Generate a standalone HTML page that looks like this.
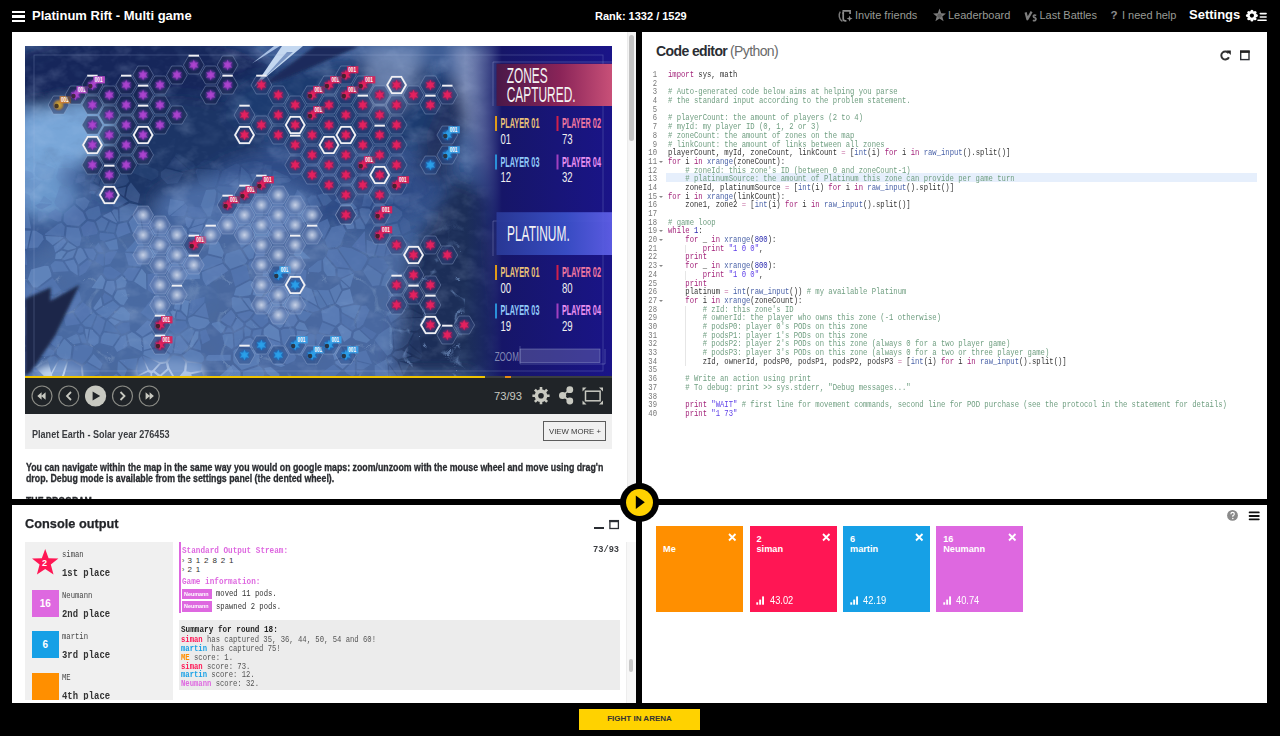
<!DOCTYPE html>
<html><head><meta charset="utf-8">
<style>
*{margin:0;padding:0;box-sizing:border-box}
html,body{width:1280px;height:736px;overflow:hidden;background:#000;font-family:"Liberation Sans",sans-serif}
.abs{position:absolute}
.sx{transform-origin:0 0}
.t{position:absolute;white-space:pre;line-height:1}
.panel{position:absolute;background:#fff;overflow:hidden}
.mono{font-family:"Liberation Mono",monospace}
#code .l{position:absolute;left:0;white-space:pre;height:9px;line-height:9px}
#code .n{position:absolute;white-space:pre;color:#999;text-align:right;width:12px}
.k{color:#a3237a}.c{color:#6f9e80}.s{color:#5d3fe8}.b{color:#4a62a8}.d{color:#2c2cb0}

#code{position:absolute;left:0;top:0;font-size:8.5px;color:#333}
#code .l{position:absolute;left:668.4px;white-space:pre;line-height:8.69px;height:8.69px;transform:scaleX(0.8494);transform-origin:0 0}
#code .n{position:absolute;left:636.7px;width:20px;text-align:right;white-space:pre;color:#777;line-height:8.69px;transform:scaleX(0.8494);transform-origin:100% 0}
#code .fa{position:absolute;left:659px;width:0;height:0;margin-top:3px;border-left:2px solid transparent;border-right:2px solid transparent;border-top:2.5px solid #888}
.o{color:#c0609a}

.m7{font-family:"Liberation Mono",monospace;font-size:8.5px;line-height:1;white-space:pre;position:absolute;transform:scaleX(0.8494);transform-origin:0 0}
.card{position:absolute;top:526.3px;width:87px;height:86.2px}
.card .x{position:absolute;left:72px;top:6.7px}
.card .nm{position:absolute;left:7px;top:7.6px;font-size:9.2px;font-weight:bold;color:#fff;line-height:10.1px;white-space:pre}
.card .sc{position:absolute;left:6.5px;top:68.5px;white-space:pre;font-size:10px;color:#fff}
</style></head>
<body>
<!-- TOP BAR -->
<div class="abs" style="left:12px;top:11px;width:13px;height:11px">
 <div class="abs" style="left:0;top:0;width:13px;height:2.4px;background:#fff"></div>
 <div class="abs" style="left:0;top:4.3px;width:13px;height:2.4px;background:#fff"></div>
 <div class="abs" style="left:0;top:8.6px;width:13px;height:2.4px;background:#fff"></div>
</div>
<div class="t" id="title" style="left:32px;top:9px;font-size:13px;font-weight:bold;color:#fff">Platinum Rift - Multi game</div>
<div class="t" id="rank" style="left:595px;top:11px;font-size:11px;font-weight:bold;color:#fff">Rank: 1332 / 1529</div>

<div id="nav">
 <svg class="abs" style="left:835px;top:4px" width="20" height="24" viewBox="0 0 20 24">
  <path d="M5.3 7.6 Q3.9 9.5 4.3 12.8 Q4.8 15.8 7.4 17.4" fill="none" stroke="#7a7a7a" stroke-width="1.4"/>
  <path d="M8.2 7.6 V9.9" fill="none" stroke="#8a8a8a" stroke-width="1.7"/>
  <path d="M7.5 6.9 H15.1 V10.1" fill="none" stroke="#8a8a8a" stroke-width="1.7"/>
  <path d="M8.2 8.5 V14.8 Q8.2 16.9 10.3 16.9 H11.4" fill="none" stroke="#8a8a8a" stroke-width="1.7"/>
  <path d="M14.6 11.6 L15.4 13.8 L17.6 14.6 L15.4 15.4 L14.6 17.6 L13.8 15.4 L11.6 14.6 L13.8 13.8 Z" fill="#8a8a8a"/>
 </svg>
 <div class="t" id="n1" style="left:855px;top:10px;font-size:11px;color:#989b95">Invite friends</div>
 <svg class="abs" style="left:932px;top:7.5px" width="15" height="14" viewBox="0 0 15 14"><path d="M7.5 0.6 L9.2 5.2 L14 5.4 L10.3 8.4 L11.6 13.3 L7.5 10.5 L3.4 13.3 L4.7 8.4 L1 5.4 L5.8 5.2 Z" fill="#7c7c7c"/><circle cx="7.5" cy="7.6" r="2.2" fill="#5e5e5e"/></svg>
 <div class="t" id="n2" style="left:948px;top:10px;font-size:11px;color:#989b95">Leaderboard</div>
 <svg class="abs" style="left:1024px;top:9px" width="16" height="14" viewBox="0 0 16 14"><path d="M1.6 3.4 L3.4 10.3 L7.6 2.6" fill="none" stroke="#7e7e7e" stroke-width="2.2" stroke-linejoin="round"/><path d="M12.2 6.4 Q10 5.4 9.3 7 Q9.3 8.3 11.3 8.9 Q12.6 9.6 11.4 11.2 Q10.3 12 8.9 11.2" fill="none" stroke="#7e7e7e" stroke-width="1.7"/></svg>
 <div class="t" id="n3" style="left:1039.5px;top:10px;font-size:11px;color:#989b95">Last Battles</div>
 <div class="t" style="left:1110.5px;top:10px;font-size:11.5px;font-weight:bold;color:#8c8c8c">?</div>
 <div class="t" id="n4" style="left:1122px;top:10px;font-size:11px;color:#989b95">I need help</div>
 <div class="t" id="n5" style="left:1189px;top:8px;font-size:13px;font-weight:bold;color:#fff">Settings</div>
 <svg class="abs" style="left:1245px;top:8px" width="23" height="14" viewBox="0 0 23 14">
  <g fill="#fff"><circle cx="6.9" cy="7.6" r="4.3"/><circle cx="11.30" cy="7.60" r="1.55"/><circle cx="10.01" cy="10.71" r="1.55"/><circle cx="6.90" cy="12.00" r="1.55"/><circle cx="3.79" cy="10.71" r="1.55"/><circle cx="2.50" cy="7.60" r="1.55"/><circle cx="3.79" cy="4.49" r="1.55"/><circle cx="6.90" cy="3.20" r="1.55"/><circle cx="10.01" cy="4.49" r="1.55"/></g>
  <circle cx="6.9" cy="7.6" r="2.1" fill="#000"/>
  <g stroke="#fff" stroke-width="1.6" stroke-linecap="round"><path d="M15.3 5.6 H21.1 M15.3 9 H21.1 M13 12.3 H21.1"/></g>
 </svg>
</div>

<!-- PANEL TL -->
<div class="panel" id="ptl" style="left:12px;top:32px;width:624px;height:467px"></div>

<!-- TL CONTENT -->
<div class="abs" style="left:626.5px;top:32px;width:9.5px;height:467px;background:#f4f4f4;border-left:1px solid #ebebeb"></div>
<div class="abs" style="left:629px;top:35px;width:4.6px;height:106px;border-radius:3px;background:#c3c3c3"></div>
<div class="abs" id="game" style="left:25px;top:46px;width:587px;height:330px;overflow:hidden;background:#2a4a80">
<!--GAME-->
<svg width="587" height="330" viewBox="0 0 587 330" style="position:absolute;left:0;top:0">
<defs>
<filter id="bl8" x="-50%" y="-50%" width="200%" height="200%"><feGaussianBlur stdDeviation="8"/></filter>
<filter id="bl4" x="-50%" y="-50%" width="200%" height="200%"><feGaussianBlur stdDeviation="4"/></filter>
<filter id="bl05" x="-5%" y="-5%" width="110%" height="110%"><feGaussianBlur stdDeviation="0.6"/></filter>
<filter id="bl2" x="-50%" y="-50%" width="200%" height="200%"><feGaussianBlur stdDeviation="1.5"/></filter>
<filter id="tex" x="0" y="0" width="100%" height="100%"><feTurbulence type="fractalNoise" baseFrequency="0.035 0.05" numOctaves="4" seed="7"/><feColorMatrix type="matrix" values="0 0 0 0 0.55  0 0 0 0 0.68  0 0 0 0 0.92  2.0 0 0 0 -1.0"/></filter>
<filter id="texd" x="0" y="0" width="100%" height="100%"><feTurbulence type="fractalNoise" baseFrequency="0.035 0.05" numOctaves="4" seed="7"/><feColorMatrix type="matrix" values="0 0 0 0 0.08  0 0 0 0 0.14  0 0 0 0 0.3  -2.4 0 0 0 1.05"/></filter>
<filter id="crk" x="0" y="0" width="100%" height="100%"><feTurbulence type="turbulence" baseFrequency="0.03" numOctaves="2" seed="3"/><feColorMatrix type="matrix" values="0 0 0 0 0.14  0 0 0 0 0.24  0 0 0 0 0.46  -11 0 0 0 1.1"/></filter>
<linearGradient id="crm" x1="0" x2="0" y1="0" y2="1"><stop offset="0.5" stop-color="#fff" stop-opacity="0"/><stop offset="0.72" stop-color="#fff" stop-opacity="1"/></linearGradient>
<mask id="crmask"><rect width="587" height="330" fill="url(#crm)"/></mask>
<radialGradient id="gp"><stop offset="0" stop-color="#a840c8"/><stop offset="0.5" stop-color="#6a30a0"/><stop offset="1" stop-color="#3a2a78" stop-opacity="0"/></radialGradient>
<radialGradient id="gr"><stop offset="0" stop-color="#d81c58"/><stop offset="0.5" stop-color="#90205a"/><stop offset="1" stop-color="#603070" stop-opacity="0"/></radialGradient>
<radialGradient id="gw"><stop offset="0" stop-color="#d4dcec" stop-opacity="0.9"/><stop offset="0.5" stop-color="#a8b8d6" stop-opacity="0.7"/><stop offset="1" stop-color="#8aa2cc" stop-opacity="0"/></radialGradient>
<radialGradient id="gb"><stop offset="0" stop-color="#2098e6"/><stop offset="0.5" stop-color="#1a70c0"/><stop offset="1" stop-color="#2a5aa0" stop-opacity="0"/></radialGradient>
<radialGradient id="gy"><stop offset="0" stop-color="#e0b030"/><stop offset="0.6" stop-color="#a08040"/><stop offset="1" stop-color="#505080" stop-opacity="0.3"/></radialGradient>
<linearGradient id="rp" x1="0" x2="1" y1="0" y2="0"><stop offset="0" stop-color="#1a2a6a" stop-opacity="0"/><stop offset="0.25" stop-color="#161668"/><stop offset="1" stop-color="#1a1488"/></linearGradient>
<linearGradient id="zc" x1="0" x2="1"><stop offset="0" stop-color="#4a1848"/><stop offset="0.55" stop-color="#8a2458"/><stop offset="1" stop-color="#c85078"/></linearGradient>
<linearGradient id="pl" x1="0" x2="1"><stop offset="0" stop-color="#2a3a98"/><stop offset="0.6" stop-color="#3a50c8"/><stop offset="1" stop-color="#6060e8"/></linearGradient>
</defs>
<rect width="587" height="330" fill="#3b5b94"/>
<g filter="url(#bl8)">
<ellipse cx="250" cy="275" rx="260" ry="90" fill="#48679f"/>
<ellipse cx="90" cy="250" rx="100" ry="70" fill="#4a6aa2"/>
<ellipse cx="310" cy="300" rx="140" ry="40" fill="#4a68a0"/>
<ellipse cx="110" cy="30" rx="140" ry="45" fill="#13285a"/>
<ellipse cx="150" cy="110" rx="90" ry="60" fill="#1e3466"/>
<ellipse cx="330" cy="60" rx="130" ry="45" fill="#1f3a70"/>
<ellipse cx="300" cy="140" rx="120" ry="40" fill="#2e4c86"/>
<ellipse cx="210" cy="160" rx="80" ry="28" fill="#4a6aa4"/>
<path d="M-10 68 L30 60 L60 55 L90 72 L80 100 L45 125 L-10 140 Z" fill="#78a6d8"/>
<ellipse cx="20" cy="150" rx="30" ry="22" fill="#6a98cc"/>
<path d="M365 330 L385 210 L430 130 L465 150 L485 330 Z" fill="#1f2d58"/>
<path d="M390 120 L420 40 L440 60 L420 140 Z" fill="#22335e"/>
<path d="M425 0 L478 0 L492 80 L482 165 L455 115 Z" fill="#8494c0"/>
<path d="M470 195 L488 180 L505 330 L488 330 Z" fill="#6a7aaa"/>
<path d="M340 0 L400 0 L380 60 L350 70 Z" fill="#8aa0c8" opacity="0.7"/>
</g>
<rect width="587" height="330" fill="#000" filter="url(#tex)" opacity="0.28"/>
<rect width="587" height="330" fill="#000" filter="url(#texd)" opacity="0.35"/>
<g mask="url(#crmask)"><rect width="440" height="330" fill="#000" filter="url(#crk)" opacity="0.75"/></g>
<g filter="url(#bl4)">
<ellipse cx="35" cy="328" rx="26" ry="10" fill="#c0d4ee"/>
<ellipse cx="145" cy="326" rx="35" ry="12" fill="#b0c6e6"/>
</g>
<g filter="url(#bl05)"><path d="M229.7 236.8 L225.6 248.7 L223.3 249.5 L217.2 250.3 L208.8 249.2 L211.0 242.1 L225.2 234.5Z" fill="#6387c0" fill-opacity="0.70"/><path d="M284.7 287.6 L289.6 288.9 L289.9 305.1 L284.0 310.4 L273.5 309.8 L269.0 303.6 L273.0 297.2Z" fill="#5a7cb7" fill-opacity="0.70"/><path d="M30.8 162.7 L23.4 167.8 L23.5 171.8 L32.8 175.8 L36.2 174.9 L36.7 167.4Z" fill="#5c7fba" fill-opacity="0.53"/><path d="M295.6 262.6 L301.4 259.9 L292.1 244.6 L290.0 243.9 L288.3 243.8 L293.2 259.5Z" fill="#5a7db7" fill-opacity="0.70"/><path d="M-11.3 201.3 L0.6 204.9 L2.2 219.3 L-3.7 217.3 L-8.8 213.0 L-9.1 210.5 L-12.0 201.5Z" fill="#5476b2" fill-opacity="0.70"/><path d="M205.7 314.5 L205.8 308.7 L183.5 309.1 L181.3 310.9 L181.3 314.4 L185.5 315.1Z" fill="#6083bd" fill-opacity="0.70"/><path d="M207.2 261.6 L206.6 252.3 L208.2 250.8 L215.8 252.5 L224.2 263.6 L210.9 266.3Z" fill="#6286bf" fill-opacity="0.70"/><path d="M198.9 161.6 L207.0 159.5 L209.7 161.9 L195.7 174.6 L195.4 174.4Z" fill="#587bb6" fill-opacity="0.49"/><path d="M388.4 285.1 L368.7 281.1 L367.1 279.3 L366.9 277.8 L375.9 272.7 L399.2 271.7 L401.5 277.5 L392.2 284.4Z" fill="#6285bf" fill-opacity="0.18"/><path d="M378.8 190.0 L387.2 186.2 L393.3 188.9 L394.0 200.5 L392.6 201.8 L379.5 191.7Z" fill="#5d80ba" fill-opacity="0.12"/><path d="M11.6 243.9 L18.1 248.2 L16.8 253.0 L10.9 261.4 L3.9 257.1 L3.9 255.0 L7.8 243.6Z" fill="#5577b3" fill-opacity="0.70"/><path d="M350.8 154.3 L346.7 161.8 L349.8 166.1 L356.0 167.4 L361.5 160.6 L352.3 153.8Z" fill="#5b7db8" fill-opacity="0.30"/><path d="M29.4 157.0 L29.5 155.7 L35.1 139.7 L43.9 143.5 L48.4 152.8 L48.0 157.4 L37.8 165.6 L31.7 160.4 L29.5 157.3Z" fill="#5c7fba" fill-opacity="0.39"/><path d="M358.8 137.0 L359.8 132.8 L365.5 139.0 L358.5 139.8Z" fill="#577ab5" fill-opacity="0.13"/><path d="M75.0 289.2 L67.7 281.9 L72.4 269.6 L80.2 274.6 L77.4 284.4Z" fill="#5b7eb8" fill-opacity="0.70"/><path d="M47.7 264.5 L56.3 254.4 L54.3 245.7 L52.0 243.3 L38.4 244.9 L38.1 245.3 L40.9 266.7Z" fill="#5779b5" fill-opacity="0.70"/><path d="M41.3 195.8 L39.0 192.4 L28.6 200.3 L30.3 206.4 L36.4 202.1Z" fill="#6386c0" fill-opacity="0.70"/><path d="M117.7 310.0 L123.8 323.6 L126.2 324.8 L127.8 324.0 L133.9 317.2 L117.8 309.8Z" fill="#5c7fb9" fill-opacity="0.70"/><path d="M90.6 191.7 L88.7 188.1 L79.8 187.2 L75.2 186.7 L74.3 189.0 L74.9 193.6 L79.0 194.9Z" fill="#5577b3" fill-opacity="0.70"/><path d="M395.9 252.8 L396.2 252.9 L401.1 259.3 L399.6 269.5 L386.4 261.7 L384.3 254.6Z" fill="#5577b3" fill-opacity="0.06"/><path d="M76.6 157.5 L78.7 153.7 L84.0 146.6 L85.8 158.1Z" fill="#6084bd" fill-opacity="0.39"/><path d="M35.8 244.3 L36.1 243.9 L27.7 232.0 L13.1 242.7 L20.4 247.0 L29.2 248.5Z" fill="#5476b2" fill-opacity="0.70"/><path d="M88.9 251.0 L90.0 253.2 L95.6 258.5 L98.8 258.9 L102.9 252.2 L100.4 243.2 L92.1 244.6Z" fill="#678bc3" fill-opacity="0.70"/><path d="M167.5 209.5 L165.8 204.6 L153.0 201.9 L157.9 210.4Z" fill="#597cb7" fill-opacity="0.70"/><path d="M253.1 313.9 L259.4 301.5 L267.3 305.1 L271.4 310.9 L269.7 314.2 L269.0 315.1 L261.9 318.3Z" fill="#587ab5" fill-opacity="0.70"/><path d="M68.5 135.3 L64.7 135.8 L71.5 120.8 L75.4 121.2Z" fill="#6184be" fill-opacity="0.16"/><path d="M88.0 142.2 L88.7 142.5 L101.0 139.1 L104.4 135.3 L101.7 128.4 L91.7 126.3Z" fill="#5b7eb9" fill-opacity="0.22"/><path d="M332.9 330.7 L348.3 339.7 L329.9 340.4 L328.7 332.4 L331.7 330.8Z" fill="#688cc4" fill-opacity="0.66"/><path d="M81.8 338.4 L62.8 334.7 L59.2 335.7 L57.9 338.8 L60.7 358.0 L81.9 340.3Z" fill="#6185be" fill-opacity="0.70"/><path d="M172.4 119.4 L172.2 121.6 L192.0 122.5 L187.3 115.1 L179.4 113.9Z" fill="#5d7fba" fill-opacity="0.07"/><path d="M-5.9 334.7 L-10.6 337.8 L-7.6 342.5 L5.2 346.0 L4.4 343.5 L-1.2 337.0Z" fill="#5a7cb7" fill-opacity="0.70"/><path d="M86.5 270.8 L96.0 261.0 L99.2 261.4 L105.0 267.8 L104.3 274.3 L96.5 274.7Z" fill="#678bc3" fill-opacity="0.70"/><path d="M258.4 163.9 L271.1 177.5 L271.4 177.4 L269.9 168.3 L259.7 160.7Z" fill="#5679b4" fill-opacity="0.52"/><path d="M64.6 281.0 L66.1 281.0 L71.2 269.2 L69.0 266.4 L68.5 266.2 L57.2 277.4 L57.2 277.5 L60.2 280.5Z" fill="#5a7db8" fill-opacity="0.70"/><path d="M72.9 185.5 L69.2 176.2 L62.7 174.9 L55.9 181.3 L58.5 190.8 L72.0 187.9Z" fill="#5476b2" fill-opacity="0.64"/><path d="M144.5 321.9 L143.1 316.4 L146.9 309.9 L148.4 309.2 L155.5 310.5 L160.1 315.9 L159.1 324.8 L151.3 333.9Z" fill="#5e81bb" fill-opacity="0.70"/><path d="M314.1 238.1 L304.8 243.7 L310.1 257.0 L316.3 244.2Z" fill="#6083bc" fill-opacity="0.70"/><path d="M207.2 281.1 L212.3 271.7 L218.3 277.2 L218.4 279.4 L217.1 281.1 L209.2 285.0Z" fill="#6083bd" fill-opacity="0.70"/><path d="M23.4 220.1 L26.1 227.3 L26.5 230.6 L12.2 241.4 L8.1 241.3 L2.9 233.3 L6.1 223.5 L19.8 219.8Z" fill="#698dc5" fill-opacity="0.70"/><path d="M332.9 328.2 L331.8 328.6 L331.8 324.7 L337.7 324.9Z" fill="#5b7eb8" fill-opacity="0.67"/><path d="M338.2 278.2 L334.6 281.6 L332.0 282.2 L331.2 273.5 L336.6 260.1 L340.9 259.6 L344.5 263.9 L339.5 275.6Z" fill="#5a7db8" fill-opacity="0.63"/><path d="M363.0 332.8 L351.6 340.2 L350.8 339.1 L349.6 319.6 L360.9 313.4 L362.7 319.5Z" fill="#6386bf" fill-opacity="0.44"/><path d="M145.2 265.7 L149.2 272.4 L149.7 272.3 L150.4 265.9 L148.0 264.3Z" fill="#698dc5" fill-opacity="0.70"/><path d="M175.7 291.3 L175.0 285.5 L180.9 283.3 L185.3 294.1 L177.4 298.3Z" fill="#5779b5" fill-opacity="0.70"/><path d="M389.3 241.0 L389.3 241.2 L398.7 239.9 L401.9 233.7 L401.9 233.5 L392.6 231.9Z" fill="#5e81bb" fill-opacity="0.04"/><path d="M266.1 236.8 L273.1 242.3 L272.9 243.2 L255.9 254.7 L253.1 250.5 L250.8 244.6 L252.3 242.2Z" fill="#6487c0" fill-opacity="0.70"/><path d="M26.6 287.9 L21.1 276.6 L15.0 276.4 L0.6 291.6 L2.6 295.9 L7.7 295.0 L18.5 292.5Z" fill="#5678b4" fill-opacity="0.70"/><path d="M6.1 242.5 L2.0 254.5 L-31.9 239.5 L0.8 234.7Z" fill="#5678b4" fill-opacity="0.70"/><path d="M208.7 157.6 L203.8 151.4 L208.3 148.7 L220.0 152.4 L215.8 160.8 L210.9 160.0Z" fill="#6488c1" fill-opacity="0.40"/><path d="M324.9 222.4 L312.1 203.2 L303.4 203.8 L301.3 209.5 L311.4 220.7Z" fill="#5779b5" fill-opacity="0.70"/><path d="M132.0 276.1 L132.3 274.0 L127.3 252.6 L115.7 266.7 L123.5 272.4 L131.9 276.2Z" fill="#597cb7" fill-opacity="0.70"/><path d="M74.6 138.4 L77.1 140.8 L84.8 143.0 L86.6 141.8 L90.2 126.0 L89.7 125.1 L82.3 120.4 L80.3 121.0Z" fill="#6589c1" fill-opacity="0.19"/><path d="M141.7 264.1 L133.3 273.4 L128.3 252.1 L128.7 250.2 L132.7 249.3 L133.4 249.3Z" fill="#6387c0" fill-opacity="0.70"/><path d="M78.2 205.9 L73.2 205.9 L69.6 201.6 L73.6 196.5 L78.5 205.8Z" fill="#5b7eb8" fill-opacity="0.70"/><path d="M364.7 332.5 L373.5 332.3 L364.0 319.6Z" fill="#668ac2" fill-opacity="0.33"/><path d="M253.3 168.1 L262.6 184.4 L265.3 184.6 L270.6 178.3 L257.8 164.4Z" fill="#6083bd" fill-opacity="0.58"/><path d="M39.8 215.6 L45.6 224.7 L52.8 229.4 L52.0 220.0 L48.8 213.4Z" fill="#6386c0" fill-opacity="0.70"/><path d="M386.5 309.5 L373.3 313.3 L367.2 309.1 L369.8 305.4 L376.9 304.3Z" fill="#6689c2" fill-opacity="0.25"/><path d="M326.7 333.0 L321.2 329.6 L318.6 336.5 L324.7 346.1 L328.2 340.7Z" fill="#5679b4" fill-opacity="0.70"/><path d="M84.7 203.7 L79.9 196.5 L91.4 193.1 L91.8 193.7 L93.3 203.1 L92.6 203.5Z" fill="#6084bd" fill-opacity="0.70"/><path d="M118.6 306.6 L118.3 308.8 L134.5 315.9 L140.7 315.5 L145.0 308.8 L134.3 301.8 L119.2 305.3Z" fill="#6386bf" fill-opacity="0.70"/><path d="M315.7 237.6 L317.7 242.6 L323.5 241.6 L315.6 234.5Z" fill="#6185be" fill-opacity="0.70"/><path d="M118.8 304.0 L133.8 300.1 L133.4 296.5 L127.0 287.1 L118.0 292.1Z" fill="#688cc4" fill-opacity="0.70"/><path d="M383.4 147.4 L384.4 159.2 L378.2 164.0 L370.3 157.9 L370.2 151.8 L371.0 150.4Z" fill="#5577b2" fill-opacity="0.13"/><path d="M294.6 263.6 L291.8 261.0 L276.0 252.2 L273.2 261.8 L288.1 266.1 L294.0 264.5Z" fill="#5a7cb7" fill-opacity="0.70"/><path d="M212.2 139.9 L203.6 139.0 L213.6 131.9 L212.9 139.8Z" fill="#5f83bc" fill-opacity="0.24"/><path d="M315.8 135.9 L329.8 141.4 L330.6 141.0 L332.2 130.9 L314.0 131.8 L314.0 131.8Z" fill="#5c7eb9" fill-opacity="0.22"/><path d="M114.0 164.5 L117.5 186.0 L115.3 189.2 L112.9 189.0 L107.5 186.0 L103.8 175.9 L113.8 163.9Z" fill="#6589c2" fill-opacity="0.61"/><path d="M312.7 230.4 L312.6 222.8 L324.8 223.8 L328.1 226.4 L315.8 231.7Z" fill="#5a7cb7" fill-opacity="0.70"/><path d="M283.1 285.8 L271.7 284.5 L272.6 295.6 L283.9 286.7Z" fill="#6184be" fill-opacity="0.70"/><path d="M164.8 298.0 L165.0 301.3 L167.1 301.3 L173.2 292.1 L173.6 285.6 L170.6 285.2Z" fill="#698dc5" fill-opacity="0.70"/><path d="M51.2 203.3 L47.8 211.6 L39.6 213.9 L37.4 213.6 L42.7 206.4Z" fill="#6386bf" fill-opacity="0.70"/><path d="M129.7 324.7 L135.1 328.8 L142.1 322.6 L141.0 317.2 L135.5 318.3Z" fill="#597bb6" fill-opacity="0.70"/><path d="M238.8 282.9 L244.6 277.8 L253.7 283.9 L255.3 295.7 L240.5 290.2 L238.5 288.3Z" fill="#678bc3" fill-opacity="0.70"/><path d="M144.7 287.2 L149.6 290.6 L147.4 306.7 L145.9 307.5 L136.2 300.3 L135.9 296.8Z" fill="#5e81bb" fill-opacity="0.70"/><path d="M48.1 138.1 L44.2 141.2 L35.7 137.3 L31.1 132.0 L33.0 123.7 L33.8 122.4 L47.5 122.6 L51.1 127.0Z" fill="#587ab6" fill-opacity="0.18"/><path d="M221.0 279.3 L227.0 282.6 L234.1 281.7 L225.7 273.7 L220.7 277.1Z" fill="#5e81bb" fill-opacity="0.70"/><path d="M399.0 270.4 L399.1 270.9 L376.2 271.5 L383.1 264.7 L385.9 263.4Z" fill="#6589c2" fill-opacity="0.11"/><path d="M80.4 221.3 L79.3 221.9 L78.2 227.6 L82.2 232.7 L89.2 232.8 L95.8 228.1 L95.9 227.2 L85.6 220.4Z" fill="#5577b3" fill-opacity="0.70"/><path d="M117.5 290.4 L126.0 285.2 L131.6 277.8 L122.4 274.4 L110.7 285.8Z" fill="#6285bf" fill-opacity="0.70"/><path d="M283.6 225.7 L293.9 226.5 L296.4 224.7 L296.5 214.1 L293.0 215.1 L283.4 223.0Z" fill="#5a7cb7" fill-opacity="0.70"/><path d="M381.4 225.0 L384.0 223.3 L390.7 231.0 L387.8 240.4 L384.3 238.9Z" fill="#678ac3" fill-opacity="0.14"/><path d="M132.0 181.1 L122.8 186.2 L130.0 190.8 L131.4 189.8 L133.0 181.0Z" fill="#5d80ba" fill-opacity="0.66"/><path d="M237.0 223.6 L229.1 214.0 L229.6 213.9 L239.4 212.5 L241.0 213.7 L239.6 221.9Z" fill="#5b7eb9" fill-opacity="0.70"/><path d="M174.3 292.9 L168.0 302.0 L176.0 304.6 L175.9 299.7Z" fill="#5a7db8" fill-opacity="0.70"/><path d="M115.5 220.6 L115.8 220.5 L118.5 212.8 L116.8 208.2 L100.0 206.8 L100.0 206.8 L103.6 219.6Z" fill="#5f82bc" fill-opacity="0.70"/><path d="M50.8 202.3 L43.1 204.2 L38.2 203.0 L43.0 196.3 L51.4 201.6Z" fill="#6589c1" fill-opacity="0.70"/><path d="M364.8 318.7 L362.3 313.0 L363.1 312.0 L366.4 310.4 L372.3 315.7 L372.4 315.8 L377.8 329.3 L378.0 333.0 L374.2 331.8Z" fill="#5c7fb9" fill-opacity="0.30"/><path d="M196.3 175.6 L200.5 182.8 L210.9 183.9 L224.9 175.9 L216.0 162.9 L210.8 162.6Z" fill="#6689c2" fill-opacity="0.56"/><path d="M71.1 149.2 L73.7 145.4 L76.4 143.2 L83.8 144.7 L83.2 145.7 L77.2 152.2 L71.1 149.4Z" fill="#688cc5" fill-opacity="0.32"/><path d="M37.7 215.7 L35.7 215.4 L29.9 215.0 L25.5 219.1 L28.2 226.0 L43.8 225.2Z" fill="#5c7fb9" fill-opacity="0.70"/><path d="M99.1 150.4 L101.1 140.8 L89.0 143.6Z" fill="#6285bf" fill-opacity="0.31"/><path d="M240.5 204.5 L232.6 198.8 L229.3 212.5 L239.3 210.6Z" fill="#5c7eb9" fill-opacity="0.70"/><path d="M241.3 139.9 L242.1 135.2 L236.1 128.1 L225.6 128.3 L230.7 140.7 L238.7 141.1Z" fill="#678bc4" fill-opacity="0.22"/><path d="M79.5 246.7 L77.6 250.3 L79.3 257.8 L87.5 253.2 L86.3 251.0Z" fill="#5678b3" fill-opacity="0.70"/><path d="M383.6 250.5 L388.0 243.5 L395.1 251.5 L383.9 253.2 L383.4 252.7Z" fill="#6487c0" fill-opacity="0.14"/><path d="M127.1 327.3 L127.3 335.8 L130.1 338.8 L131.9 338.6 L133.6 330.7 L128.6 326.4Z" fill="#5b7eb9" fill-opacity="0.70"/><path d="M96.7 288.0 L100.5 286.8 L105.1 284.5 L104.4 276.2 L96.6 277.2 L91.4 281.0 L95.3 286.7Z" fill="#5476b2" fill-opacity="0.70"/><path d="M113.1 117.3 L104.4 125.1 L102.5 126.1 L92.3 124.4 L91.7 123.5 L101.3 109.5 L107.3 106.1 L107.8 106.3Z" fill="#5c7fba" fill-opacity="0.06"/><path d="M386.6 211.5 L389.1 209.8 L392.0 203.1 L378.6 192.8 L373.6 203.7 L373.6 205.3Z" fill="#5f82bc" fill-opacity="0.18"/><path d="M367.5 120.2 L360.5 115.1 L346.1 122.1 L360.2 128.2 L370.1 124.7Z" fill="#587ab6" fill-opacity="0.06"/><path d="M183.8 272.2 L180.2 256.8 L169.2 268.4Z" fill="#5b7db8" fill-opacity="0.70"/><path d="M316.2 324.4 L308.5 318.4 L295.2 327.8 L295.0 331.9 L302.6 337.0Z" fill="#5678b4" fill-opacity="0.70"/><path d="M220.2 280.6 L219.2 282.6 L219.8 290.8 L225.2 289.5 L226.2 284.2Z" fill="#5d80ba" fill-opacity="0.70"/><path d="M219.6 275.4 L213.3 270.3 L212.1 267.9 L224.5 265.1 L228.6 266.4 L224.6 271.8Z" fill="#587bb6" fill-opacity="0.70"/><path d="M250.4 224.6 L247.8 222.6 L243.2 224.3 L246.6 229.1Z" fill="#5a7cb7" fill-opacity="0.70"/><path d="M263.5 130.8 L247.1 131.7 L248.8 124.4 L263.4 130.5Z" fill="#688cc4" fill-opacity="0.17"/><path d="M72.3 139.5 L75.1 141.6 L71.8 143.8 L64.6 143.9 L64.8 137.5 L65.0 137.5 L68.5 137.8Z" fill="#587ab5" fill-opacity="0.26"/><path d="M199.4 288.3 L197.3 289.5 L199.5 298.5 L206.8 303.0 L208.5 301.2 L207.6 287.7Z" fill="#6185be" fill-opacity="0.70"/><path d="M227.8 212.3 L228.2 212.1 L231.4 198.7 L231.2 197.9 L228.6 195.6 L217.8 203.1 L224.0 213.5Z" fill="#6184be" fill-opacity="0.70"/><path d="M319.5 309.6 L309.4 313.9 L306.9 305.2 L310.3 301.3 L316.1 300.3 L316.2 300.4Z" fill="#668ac3" fill-opacity="0.70"/><path d="M68.1 202.5 L71.3 207.4 L68.6 214.2 L67.7 214.3 L63.9 211.9 L59.0 202.6Z" fill="#5f82bc" fill-opacity="0.70"/><path d="M339.3 185.5 L340.0 185.4 L339.9 193.0 L340.7 207.2 L326.9 200.4Z" fill="#5678b4" fill-opacity="0.62"/><path d="M73.7 137.9 L79.3 120.8 L75.9 121.4 L69.1 135.5Z" fill="#6386bf" fill-opacity="0.17"/><path d="M317.3 322.8 L310.4 317.4 L310.2 315.5 L320.0 311.5 L325.7 315.6 L317.7 322.9Z" fill="#6285bf" fill-opacity="0.70"/><path d="M259.4 222.3 L260.1 219.8 L261.9 213.6 L263.0 211.7 L267.0 210.0 L271.7 214.6 L273.2 220.8 L266.7 234.2Z" fill="#6184be" fill-opacity="0.70"/><path d="M345.1 294.0 L341.8 297.0 L330.4 294.1 L327.8 291.7 L329.0 286.3 L331.9 284.6 L334.3 284.1Z" fill="#6185be" fill-opacity="0.66"/><path d="M376.1 190.0 L370.7 191.5 L367.4 194.5 L372.4 202.3 L377.0 191.9 L376.6 190.4Z" fill="#6184bd" fill-opacity="0.27"/><path d="M344.2 210.9 L349.0 209.4 L352.2 197.7 L341.6 193.7 L341.9 207.6Z" fill="#5e81bb" fill-opacity="0.54"/><path d="M142.0 202.0 L140.3 219.1 L148.7 213.2 L146.3 199.7 L146.0 199.2 L145.2 199.6Z" fill="#6487c0" fill-opacity="0.70"/><path d="M292.3 259.8 L286.5 243.2 L281.9 241.3 L280.7 241.3 L275.5 242.7 L275.4 243.5 L276.0 250.5Z" fill="#6487c0" fill-opacity="0.70"/><path d="M84.2 333.3 L84.3 337.8 L84.3 339.6 L91.0 342.8 L99.4 335.6 L97.9 333.8 L91.1 327.7Z" fill="#5c7fba" fill-opacity="0.70"/><path d="M302.5 172.7 L302.4 172.7 L288.4 179.2 L293.3 187.1 L298.6 193.1 L305.1 180.0Z" fill="#5679b4" fill-opacity="0.62"/><path d="M227.3 177.1 L235.6 175.6 L247.9 189.0 L232.2 195.5 L229.6 193.2Z" fill="#668ac2" fill-opacity="0.67"/><path d="M325.6 291.2 L326.6 285.7 L316.2 278.4 L312.4 281.5 L319.1 295.9Z" fill="#688cc4" fill-opacity="0.70"/><path d="M274.4 275.8 L279.5 277.4 L283.1 284.6 L271.6 283.2 L270.4 281.3Z" fill="#6589c1" fill-opacity="0.70"/><path d="M5.7 147.2 L-1.7 144.1 L2.6 135.8 L10.4 132.7 L16.5 135.9 L16.3 136.3Z" fill="#678ac3" fill-opacity="0.25"/><path d="M168.3 116.5 L151.0 106.8 L149.8 110.1 L165.0 123.4 L168.6 123.6 L169.8 121.3 L169.8 119.3Z" fill="#597cb7" fill-opacity="0.07"/><path d="M92.8 316.7 L93.6 315.2 L102.0 323.4 L98.8 332.2 L92.3 325.6Z" fill="#5d80bb" fill-opacity="0.70"/><path d="M268.4 282.6 L269.7 284.8 L270.7 296.1 L267.2 302.7 L259.3 299.2 L257.9 298.1 L257.4 295.8 L255.8 284.5 L258.3 283.0Z" fill="#5a7cb7" fill-opacity="0.70"/><path d="M-4.2 330.8 L4.7 323.3 L7.5 330.2 L6.4 331.5 L-0.2 334.6 L-5.4 333.2Z" fill="#5577b3" fill-opacity="0.70"/><path d="M57.4 202.9 L55.5 201.8 L53.2 202.8 L52.8 203.6 L50.0 211.3 L53.4 218.5 L61.9 212.1Z" fill="#6588c1" fill-opacity="0.70"/><path d="M67.0 216.4 L60.5 226.5 L54.5 230.1 L54.2 229.5 L54.4 220.5 L62.5 214.1Z" fill="#597bb6" fill-opacity="0.70"/><path d="M233.7 239.4 L240.1 245.6 L236.0 251.5 L227.6 248.6 L231.2 237.2 L231.6 237.2Z" fill="#668ac3" fill-opacity="0.70"/><path d="M160.3 168.6 L162.7 160.5 L160.5 157.9 L145.6 169.9 L158.9 169.9Z" fill="#6083bc" fill-opacity="0.49"/><path d="M58.1 285.9 L58.3 282.1 L55.9 279.3 L54.8 280.2 L52.5 285.9 L54.2 287.0Z" fill="#5476b2" fill-opacity="0.70"/><path d="M161.3 325.2 L166.0 326.2 L176.0 324.4 L176.8 317.9 L162.3 316.5Z" fill="#678ac3" fill-opacity="0.70"/><path d="M174.0 216.0 L182.0 209.3 L197.0 212.7 L197.4 216.8 L176.5 224.9 L173.9 220.8Z" fill="#5c7fb9" fill-opacity="0.70"/><path d="M234.4 320.0 L237.2 322.2 L239.5 328.0 L230.3 349.7 L217.6 333.7 L217.9 325.8Z" fill="#6184be" fill-opacity="0.70"/><path d="M329.5 225.0 L329.9 225.1 L336.4 223.9 L340.4 217.2 L342.6 212.4 L339.8 209.1 L326.2 202.3 L317.0 200.8 L313.4 202.7 L326.5 222.0Z" fill="#5577b3" fill-opacity="0.70"/><path d="M267.8 132.8 L265.5 129.9 L265.4 129.7 L261.6 117.7 L270.8 113.7 L272.2 114.1 L277.1 128.7 L268.6 132.9Z" fill="#587ab6" fill-opacity="0.13"/><path d="M273.1 212.7 L268.5 208.5 L271.8 201.2 L274.1 201.9 L285.4 212.4Z" fill="#678bc3" fill-opacity="0.70"/><path d="M217.8 117.0 L228.6 115.1 L232.3 114.8 L237.8 116.9 L238.6 117.5 L235.2 125.9 L225.0 126.3 L217.2 119.4 L216.4 117.8Z" fill="#587ab5" fill-opacity="0.08"/><path d="M198.3 159.1 L206.6 157.9 L201.6 151.6 L192.8 145.9 L192.6 155.3Z" fill="#5b7eb8" fill-opacity="0.39"/><path d="M356.9 228.8 L342.2 218.7 L338.2 225.6 L347.4 239.9 L354.2 239.2Z" fill="#6184be" fill-opacity="0.52"/><path d="M27.1 328.4 L27.2 327.9 L34.3 314.0 L41.6 315.6 L36.4 331.7 L30.2 333.0 L30.0 333.0 L27.4 331.7Z" fill="#6386bf" fill-opacity="0.70"/><path d="M143.8 169.5 L145.0 169.2 L159.8 157.2 L158.8 155.2 L145.2 153.0 L142.9 167.0Z" fill="#688cc4" fill-opacity="0.45"/><path d="M274.0 252.2 L273.6 244.1 L256.7 256.1 L257.6 260.7 L265.7 263.9 L268.6 263.5 L270.9 260.9Z" fill="#698dc5" fill-opacity="0.70"/><path d="M334.5 131.0 L332.6 140.9 L338.8 145.6 L341.6 145.4 L346.4 139.0 L344.1 131.5 L340.8 123.7 L339.9 123.4 L339.0 124.1Z" fill="#6487c0" fill-opacity="0.18"/><path d="M115.5 191.7 L118.7 199.7 L118.7 200.2 L117.3 206.1 L100.1 205.5 L113.2 191.6Z" fill="#5a7db8" fill-opacity="0.70"/><path d="M278.7 128.0 L273.8 113.4 L282.6 109.0 L282.7 109.1 L291.1 118.4 L287.1 127.3Z" fill="#5779b4" fill-opacity="0.06"/><path d="M26.3 260.9 L22.4 261.5 L13.1 264.0 L16.0 274.1 L21.8 274.2 L30.8 268.9Z" fill="#5d80ba" fill-opacity="0.70"/><path d="M250.7 251.3 L248.6 245.5 L241.8 247.3 L237.6 252.5 L238.4 260.4Z" fill="#5c7fba" fill-opacity="0.70"/><path d="M171.4 216.0 L171.6 220.7 L158.2 221.7 L154.9 216.2 L158.1 212.1 L167.9 211.1Z" fill="#5f82bc" fill-opacity="0.70"/><path d="M83.2 175.3 L79.2 184.7 L74.6 184.7 L71.0 175.6 L76.7 171.2Z" fill="#5b7eb8" fill-opacity="0.60"/><path d="M331.8 314.2 L331.3 314.0 L331.6 309.4 L332.7 306.6 L341.0 304.2 L347.1 317.8 L345.5 317.7Z" fill="#597bb6" fill-opacity="0.63"/><path d="M30.8 123.1 L28.7 131.6 L17.8 134.2 L11.8 130.7 L9.2 125.7 L11.9 116.3 L19.6 118.3Z" fill="#5a7cb7" fill-opacity="0.14"/><path d="M371.4 251.5 L362.9 244.7 L363.4 263.7 L370.6 257.5 L372.8 255.0Z" fill="#5a7cb7" fill-opacity="0.31"/><path d="M348.0 140.9 L343.1 146.7 L350.5 151.8 L351.9 151.2 L355.2 145.6 L355.1 143.9Z" fill="#6286bf" fill-opacity="0.23"/><path d="M190.0 155.5 L191.4 146.0 L190.0 143.3 L181.0 143.9 L175.7 159.4 L182.8 170.4 L185.7 170.2Z" fill="#688cc4" fill-opacity="0.40"/><path d="M375.8 188.3 L372.5 177.4 L362.0 179.5 L360.9 181.4 L369.3 189.5Z" fill="#6487c0" fill-opacity="0.29"/><path d="M193.6 176.3 L193.9 176.5 L198.3 183.5 L193.3 193.0 L184.0 194.7 L179.9 192.5 L178.4 186.7 L180.6 178.2 L183.0 172.9 L183.1 172.9 L185.8 172.8Z" fill="#5d80ba" fill-opacity="0.63"/><path d="M33.4 313.2 L26.2 326.8 L22.4 312.0 L29.9 310.0Z" fill="#5a7db7" fill-opacity="0.70"/><path d="M73.4 268.0 L70.9 265.3 L79.2 260.1 L88.1 254.7 L94.4 260.3 L84.5 270.0 L81.9 272.3 L81.2 272.4Z" fill="#5d80ba" fill-opacity="0.70"/><path d="M21.4 171.1 L19.0 172.2 L17.7 165.8 L21.2 168.3Z" fill="#6689c2" fill-opacity="0.52"/><path d="M316.2 261.8 L328.9 258.9 L335.3 259.3 L329.4 272.7 L316.9 265.9Z" fill="#6084bd" fill-opacity="0.70"/><path d="M119.1 118.9 L130.9 123.2 L133.5 125.3 L133.2 130.4 L126.7 134.8 L106.0 126.3 L115.3 118.1Z" fill="#5678b3" fill-opacity="0.13"/><path d="M150.4 274.8 L160.7 275.3 L162.6 280.9 L154.1 286.9 L150.6 288.3 L146.0 285.1 L142.4 280.8 L149.8 274.9Z" fill="#5578b3" fill-opacity="0.70"/><path d="M164.1 124.2 L158.6 125.6 L141.5 121.2 L149.2 110.7Z" fill="#5c7eb9" fill-opacity="0.09"/><path d="M316.3 233.6 L316.4 233.1 L328.7 227.4 L329.1 227.5 L325.7 240.0 L325.4 240.7 L324.5 240.9Z" fill="#6286bf" fill-opacity="0.70"/><path d="M377.2 169.4 L372.6 175.2 L361.7 177.7 L357.8 168.6 L363.6 161.6 L369.1 159.8 L377.2 165.7Z" fill="#678bc3" fill-opacity="0.23"/><path d="M130.5 196.3 L140.1 200.1 L140.2 200.1 L144.1 198.1 L132.7 192.0 L131.0 192.9Z" fill="#5476b2" fill-opacity="0.70"/><path d="M93.6 178.2 L93.0 178.8 L91.0 187.0 L92.4 190.7 L92.8 191.4 L105.6 186.6 L101.7 176.3 L94.3 177.7Z" fill="#5e81bb" fill-opacity="0.64"/><path d="M161.9 184.0 L162.1 186.1 L160.8 188.8 L148.0 194.1 L145.0 182.7 L159.7 181.5Z" fill="#5e81bb" fill-opacity="0.67"/><path d="M168.9 197.9 L177.9 193.2 L176.1 188.0 L164.4 186.8 L163.1 189.7Z" fill="#6286bf" fill-opacity="0.70"/><path d="M76.6 229.0 L80.3 234.2 L77.7 243.0 L66.5 242.0 L75.2 229.6Z" fill="#698dc5" fill-opacity="0.70"/><path d="M373.0 227.3 L364.9 222.4 L359.3 229.3 L356.0 239.4 L362.0 240.8 L370.0 235.6Z" fill="#698dc5" fill-opacity="0.36"/><path d="M380.2 225.1 L383.1 239.2 L376.1 239.1 L372.4 235.6 L374.6 227.8Z" fill="#6689c2" fill-opacity="0.23"/><path d="M63.2 295.3 L65.1 283.5 L66.6 283.5 L73.9 290.9 L73.5 297.1 L69.1 299.9 L63.5 297.0Z" fill="#6386c0" fill-opacity="0.70"/><path d="M249.8 241.7 L248.4 243.8 L242.1 245.0 L235.1 238.5 L247.0 236.5Z" fill="#5577b3" fill-opacity="0.70"/><path d="M240.5 291.9 L255.0 296.8 L255.8 298.9 L242.5 303.8Z" fill="#5c7fba" fill-opacity="0.70"/><path d="M32.0 119.9 L21.7 104.9 L18.9 105.7 L21.0 116.6 L31.3 121.8 L32.0 120.5Z" fill="#587bb6" fill-opacity="0.04"/><path d="M338.3 323.2 L345.3 318.7 L331.5 315.6 L332.1 323.0Z" fill="#587bb6" fill-opacity="0.63"/><path d="M28.6 250.4 L20.0 248.8 L19.4 253.4 L22.7 259.0 L26.4 258.8Z" fill="#5779b4" fill-opacity="0.70"/><path d="M290.7 149.6 L296.4 160.3 L286.8 162.6 L285.2 160.0 L282.7 155.1 L282.9 152.2 L286.1 149.2Z" fill="#577ab5" fill-opacity="0.40"/><path d="M76.4 290.7 L75.6 297.2 L87.6 300.2 L95.0 289.6 L93.3 288.2 L79.0 286.4Z" fill="#6184be" fill-opacity="0.70"/><path d="M234.7 283.2 L236.8 283.1 L236.0 288.3 L231.3 294.1 L227.1 289.9 L228.5 284.6Z" fill="#597cb7" fill-opacity="0.70"/><path d="M166.5 180.9 L178.3 177.2 L181.3 172.3 L170.2 173.4Z" fill="#6487c0" fill-opacity="0.58"/><path d="M222.4 222.9 L224.7 232.7 L210.2 240.5 L205.8 224.5 L205.8 224.5 L221.2 218.8Z" fill="#5678b4" fill-opacity="0.70"/><path d="M317.0 277.3 L316.4 267.3 L328.8 274.5 L330.4 282.5 L327.4 284.4Z" fill="#5476b2" fill-opacity="0.70"/><path d="M364.0 265.4 L362.2 268.3 L366.1 276.5 L373.9 271.0 L380.7 264.3 L371.1 259.9Z" fill="#688cc4" fill-opacity="0.30"/><path d="M397.6 309.0 L393.0 286.3 L389.6 287.4 L384.9 297.6Z" fill="#5476b2" fill-opacity="0.09"/><path d="M384.5 318.3 L378.7 329.0 L374.0 315.6Z" fill="#5f82bc" fill-opacity="0.21"/><path d="M242.5 270.7 L243.4 276.0 L237.5 281.0 L235.4 280.8 L227.1 272.4 L230.7 266.9 L232.1 266.5 L237.2 265.9Z" fill="#5678b4" fill-opacity="0.70"/><path d="M360.3 210.4 L363.4 196.1 L366.2 196.1 L371.0 203.2 L371.1 204.8Z" fill="#5a7db8" fill-opacity="0.33"/><path d="M170.6 125.3 L174.2 138.0 L180.9 141.4 L189.7 141.0 L191.2 138.5 L194.9 125.5 L192.3 123.9 L171.9 122.8Z" fill="#5678b4" fill-opacity="0.19"/><path d="M39.6 266.9 L36.8 245.8 L30.1 250.9 L28.4 260.0 L32.3 267.8 L36.9 269.0Z" fill="#587bb6" fill-opacity="0.70"/><path d="M348.7 139.4 L355.5 142.1 L356.6 140.2 L356.3 137.2 L346.2 131.8Z" fill="#6083bd" fill-opacity="0.17"/><path d="M0.3 122.3 L-4.6 123.0 L-15.4 110.9 L-0.8 113.2Z" fill="#698dc5" fill-opacity="0.07"/><path d="M69.0 148.6 L71.3 145.2 L64.8 145.3 L64.1 146.9Z" fill="#5c7fba" fill-opacity="0.32"/><path d="M83.2 273.9 L89.7 279.4 L94.9 275.8 L86.0 272.2Z" fill="#678ac3" fill-opacity="0.70"/><path d="M74.2 160.3 L73.3 160.1 L64.0 162.9 L60.3 166.0 L63.2 172.8 L69.8 173.8 L75.5 169.4 L75.8 168.5Z" fill="#5779b5" fill-opacity="0.50"/><path d="M60.3 286.7 L59.9 282.8 L63.9 283.3 L62.0 294.6Z" fill="#6487c0" fill-opacity="0.70"/><path d="M122.4 228.2 L132.5 226.6 L132.0 246.9 L127.8 247.8 L122.7 243.9Z" fill="#5779b5" fill-opacity="0.70"/><path d="M112.6 312.1 L110.3 324.1 L103.2 322.3 L94.5 314.4 L94.6 314.0Z" fill="#5a7db8" fill-opacity="0.70"/><path d="M213.6 142.0 L209.0 147.4 L220.4 151.0 L220.9 150.1 L221.4 147.3 L214.5 141.8Z" fill="#6285be" fill-opacity="0.32"/><path d="M0.6 336.1 L5.3 342.8 L7.0 332.8Z" fill="#5577b2" fill-opacity="0.70"/><path d="M236.1 224.2 L228.0 214.9 L224.5 215.7 L223.2 218.2 L224.7 221.7 L235.6 225.7Z" fill="#5678b4" fill-opacity="0.70"/><path d="M300.9 146.5 L306.9 154.6 L306.9 154.7 L301.1 159.5 L298.2 159.7 L292.6 149.1Z" fill="#5b7db8" fill-opacity="0.39"/><path d="M162.6 299.0 L163.1 302.0 L156.2 308.1 L148.9 307.0 L151.1 290.7 L154.7 289.4Z" fill="#6285bf" fill-opacity="0.70"/><path d="M317.8 245.1 L311.0 257.5 L311.0 257.6 L315.4 260.3 L328.6 257.3 L325.0 243.0 L324.0 243.3Z" fill="#688cc4" fill-opacity="0.70"/><path d="M60.5 135.0 L59.7 127.5 L53.0 127.7 L49.9 138.0Z" fill="#5f82bc" fill-opacity="0.19"/><path d="M115.1 222.3 L107.3 234.9 L103.3 234.5 L98.4 228.3 L98.4 227.5 L102.9 221.8Z" fill="#5c7eb9" fill-opacity="0.70"/><path d="M52.9 289.3 L51.2 288.0 L41.6 292.4 L48.3 298.3 L55.3 297.0Z" fill="#5e81bb" fill-opacity="0.70"/><path d="M396.9 309.8 L384.5 299.2 L378.7 303.5 L388.8 308.8 L395.8 312.7 L397.3 310.4Z" fill="#5d80ba" fill-opacity="0.10"/><path d="M26.9 157.7 L14.5 157.3 L10.1 159.4 L13.0 162.2 L17.1 163.2 L27.1 158.0Z" fill="#5577b2" fill-opacity="0.43"/><path d="M337.8 122.1 L338.8 121.5 L338.0 118.7 L336.7 117.3 L320.2 109.9 L314.3 118.5Z" fill="#5577b3" fill-opacity="0.07"/><path d="M222.3 214.5 L215.8 204.0 L214.5 203.2 L201.1 207.7 L199.5 212.3 L199.9 216.4 L205.1 222.9 L220.8 217.2Z" fill="#6083bc" fill-opacity="0.70"/><path d="M353.8 197.9 L350.5 209.5 L359.0 210.4 L359.2 210.2 L362.0 196.0 L355.9 191.4Z" fill="#5c7eb9" fill-opacity="0.43"/><path d="M245.3 229.7 L241.5 225.2 L240.5 224.2 L238.3 225.6 L237.9 226.8 L237.5 230.4 L245.1 230.5Z" fill="#6487c0" fill-opacity="0.70"/><path d="M56.7 299.1 L49.0 300.3 L47.5 312.8 L57.1 318.1 L61.0 314.5 L66.9 306.8 L68.1 301.8 L62.0 299.1Z" fill="#5476b2" fill-opacity="0.70"/><path d="M12.5 163.9 L13.5 176.3 L17.9 172.3 L16.6 165.9 L16.4 165.7Z" fill="#6184bd" fill-opacity="0.51"/><path d="M205.8 280.1 L210.8 270.8 L209.8 268.5 L206.1 263.7 L195.1 274.0 L202.6 279.1Z" fill="#5c7eb9" fill-opacity="0.70"/><path d="M151.2 272.8 L160.8 273.7 L161.0 271.2 L155.4 266.2 L152.1 265.8Z" fill="#5c7eb9" fill-opacity="0.70"/><path d="M21.2 193.6 L20.3 190.1 L38.4 191.1 L38.4 191.5 L27.6 199.2Z" fill="#6184be" fill-opacity="0.70"/><path d="M375.3 255.7 L372.6 258.5 L381.5 262.8 L384.2 261.4 L382.2 255.1 L381.7 254.6Z" fill="#5a7db8" fill-opacity="0.20"/><path d="M309.5 154.4 L309.5 154.4 L313.8 157.4 L325.3 154.2 L325.6 147.2 L315.3 147.5Z" fill="#5f82bc" fill-opacity="0.37"/><path d="M283.9 162.2 L285.6 164.5 L283.2 175.3 L272.8 177.4 L272.5 168.1 L272.8 165.9Z" fill="#6589c1" fill-opacity="0.51"/><path d="M171.7 222.1 L174.4 226.2 L175.1 232.8 L149.8 234.2 L149.7 232.0 L158.2 223.5Z" fill="#668ac3" fill-opacity="0.70"/><path d="M131.2 179.8 L121.5 184.9 L118.9 185.8 L114.8 164.4Z" fill="#5a7cb7" fill-opacity="0.60"/><path d="M163.2 270.4 L168.4 267.6 L179.3 256.0 L179.7 250.7 L165.6 254.8Z" fill="#5578b3" fill-opacity="0.70"/><path d="M104.7 154.6 L113.1 157.0 L115.2 148.4 L105.9 136.5 L102.7 141.0 L100.8 151.1Z" fill="#6689c2" fill-opacity="0.33"/><path d="M330.0 174.8 L331.6 182.7 L338.8 183.2 L339.4 183.1 L340.0 182.6 L339.7 180.1 L334.9 171.7Z" fill="#5a7db8" fill-opacity="0.55"/><path d="M319.8 173.1 L327.9 174.8 L329.4 182.6 L322.2 183.3 L319.5 177.8Z" fill="#6588c1" fill-opacity="0.60"/><path d="M388.3 124.4 L374.3 125.3 L372.2 124.1 L370.0 119.5 L375.3 109.0 L382.4 99.9 L391.6 115.8Z" fill="#5577b3" fill-opacity="0.02"/><path d="M34.2 120.2 L39.7 109.3 L57.2 109.0 L57.8 111.2 L47.7 120.5 L34.1 120.8Z" fill="#5577b2" fill-opacity="0.05"/><path d="M297.1 264.4 L303.0 261.9 L309.6 259.6 L313.9 262.4 L314.4 266.6 L314.7 276.4 L310.9 279.6 L310.6 279.7 L297.7 274.4 L296.4 265.4Z" fill="#6083bd" fill-opacity="0.70"/><path d="M383.8 241.4 L386.9 242.0 L387.0 242.2 L387.0 242.5 L382.5 249.2 L378.1 243.9 L377.1 240.8Z" fill="#688cc4" fill-opacity="0.17"/><path d="M59.9 125.4 L64.6 118.7 L58.8 112.1 L49.6 121.5 L53.1 125.6Z" fill="#6487c0" fill-opacity="0.09"/><path d="M230.5 264.5 L224.2 251.9 L217.5 252.3 L225.4 262.8 L229.1 264.9Z" fill="#6286bf" fill-opacity="0.70"/><path d="M164.9 180.4 L168.0 173.4 L161.5 170.8 L160.0 172.2 L161.2 179.4 L163.1 182.2Z" fill="#6588c1" fill-opacity="0.58"/><path d="M184.1 277.8 L180.2 281.4 L174.0 283.2 L171.2 282.7 L165.0 280.3 L163.1 274.8 L163.4 272.1 L163.6 272.0 L168.6 269.9 L183.4 273.5 L184.7 276.5Z" fill="#6488c1" fill-opacity="0.70"/><path d="M309.0 257.3 L309.0 257.4 L302.5 259.5 L293.0 244.0 L303.3 244.3 L303.6 244.6Z" fill="#5d80ba" fill-opacity="0.70"/><path d="M-8.0 169.1 L-28.8 169.6 L-6.0 182.8 L-4.7 183.3 L-2.9 182.4Z" fill="#5678b4" fill-opacity="0.59"/><path d="M36.4 176.8 L39.8 180.5 L38.7 190.0 L20.2 189.1 L19.8 188.0 L32.9 178.2Z" fill="#5678b4" fill-opacity="0.64"/><path d="M229.8 295.6 L229.8 302.4 L213.8 300.6 L220.3 292.9 L225.5 291.8Z" fill="#6285bf" fill-opacity="0.70"/><path d="M58.9 288.1 L61.1 295.1 L61.7 297.0 L57.0 296.7 L54.6 289.2Z" fill="#5a7db8" fill-opacity="0.70"/><path d="M152.6 217.1 L149.0 215.6 L141.1 220.5 L139.9 222.0 L148.3 231.0 L156.0 222.4Z" fill="#6083bd" fill-opacity="0.70"/><path d="M54.8 277.4 L53.3 278.3 L40.9 279.9 L38.5 270.7 L41.4 268.7 L47.7 267.1 L54.8 277.3Z" fill="#587bb6" fill-opacity="0.70"/><path d="M326.5 314.1 L321.9 310.1 L317.8 300.4 L329.1 309.0 L329.1 313.5Z" fill="#5f82bc" fill-opacity="0.70"/><path d="M75.7 329.2 L63.3 333.6 L82.0 337.4 L81.7 332.9Z" fill="#5678b4" fill-opacity="0.70"/><path d="M27.0 156.9 L14.7 156.2 L18.8 149.9 L27.0 155.7Z" fill="#5d80ba" fill-opacity="0.39"/><path d="M256.1 262.4 L245.0 270.7 L245.8 276.1 L254.8 282.3 L257.2 280.7 L264.4 265.9Z" fill="#6286bf" fill-opacity="0.70"/><path d="M135.9 330.7 L143.4 324.0 L150.0 335.1 L150.5 344.0 L133.6 339.3Z" fill="#5e81bb" fill-opacity="0.70"/><path d="M155.9 210.7 L151.9 202.6 L147.2 199.6 L149.7 213.2 L153.3 215.0Z" fill="#5c7fb9" fill-opacity="0.70"/><path d="M55.9 320.2 L57.2 334.1 L56.0 337.4 L38.5 331.9 L43.1 315.7 L46.7 314.7Z" fill="#5678b4" fill-opacity="0.70"/><path d="M244.9 231.8 L237.4 232.3 L232.5 235.7 L234.9 237.3 L246.3 235.2Z" fill="#5779b5" fill-opacity="0.70"/><path d="M255.7 153.2 L258.4 157.7 L257.6 159.7 L256.2 162.5 L252.3 165.9 L240.2 169.2 L240.5 161.0 L253.5 152.4Z" fill="#587ab6" fill-opacity="0.44"/><path d="M371.0 237.5 L362.9 242.2 L363.5 243.5 L371.9 249.3 L375.5 243.8 L374.7 240.9Z" fill="#5779b5" fill-opacity="0.30"/><path d="M40.1 293.6 L39.1 293.1 L32.3 303.3 L31.9 304.7 L31.5 308.1 L35.1 311.5 L41.9 313.4 L45.4 312.5 L46.8 300.2Z" fill="#6184bd" fill-opacity="0.70"/><path d="M116.7 310.2 L122.5 324.2 L112.9 329.0 L112.1 324.0 L114.0 312.8Z" fill="#5c7fb9" fill-opacity="0.70"/><path d="M92.3 242.4 L100.2 241.0 L101.9 235.9 L97.0 229.6 L91.0 234.4Z" fill="#668ac2" fill-opacity="0.70"/><path d="M389.4 128.5 L385.0 142.7 L372.0 138.1 L374.7 127.2 L388.4 126.2Z" fill="#6084bd" fill-opacity="0.05"/><path d="M-4.0 143.6 L-11.5 134.3 L-6.5 131.9 L0.2 135.7 L-3.2 143.4Z" fill="#698dc5" fill-opacity="0.24"/><path d="M297.2 276.2 L293.5 286.3 L304.4 288.6 L309.8 281.2Z" fill="#597cb7" fill-opacity="0.70"/><path d="M78.7 207.8 L73.1 208.2 L70.3 215.2 L77.8 220.0 L78.8 219.3Z" fill="#5577b3" fill-opacity="0.70"/><path d="M52.1 200.4 L54.8 199.5 L56.4 191.8 L53.9 182.2 L41.7 181.1 L40.9 191.0 L41.0 191.3 L43.5 194.4Z" fill="#5c7fb9" fill-opacity="0.70"/><path d="M264.2 136.0 L266.3 134.2 L263.6 131.5 L247.0 132.6 L244.7 135.1 L243.5 140.2 L244.5 140.6Z" fill="#5d80ba" fill-opacity="0.23"/><path d="M238.0 161.5 L238.0 169.4 L235.1 173.2 L226.8 174.9 L226.5 174.8 L217.9 162.1 L221.9 153.1 L222.5 152.1 L237.3 159.6Z" fill="#6083bd" fill-opacity="0.48"/><path d="M240.0 170.9 L237.0 174.8 L249.0 188.0 L249.5 188.3 L261.5 185.2 L251.9 168.5Z" fill="#688bc4" fill-opacity="0.61"/><path d="M287.2 267.5 L279.9 275.5 L274.6 273.4 L270.1 265.4 L272.6 262.8Z" fill="#5a7db8" fill-opacity="0.70"/><path d="M351.7 287.5 L347.5 292.9 L345.9 293.1 L335.5 283.4 L339.2 280.6Z" fill="#5476b2" fill-opacity="0.56"/><path d="M395.5 313.7 L395.3 314.6 L385.6 316.5 L374.4 314.6 L374.2 314.5 L387.2 310.7Z" fill="#6083bd" fill-opacity="0.15"/><path d="M245.6 320.9 L239.2 322.0 L242.0 327.6 L253.9 336.0 L254.4 328.1Z" fill="#688cc5" fill-opacity="0.70"/><path d="M330.3 328.5 L327.4 330.6 L321.7 327.5 L319.2 324.0 L326.9 316.6 L329.6 315.6 L330.0 315.9 L329.8 323.4Z" fill="#587ab5" fill-opacity="0.70"/><path d="M334.3 163.1 L334.4 163.0 L336.7 162.1 L344.3 162.8 L347.8 167.2 L340.8 178.8 L335.6 169.5Z" fill="#6488c1" fill-opacity="0.43"/><path d="M36.5 204.5 L30.8 207.8 L30.0 213.1 L36.0 213.1 L41.1 205.7Z" fill="#678bc3" fill-opacity="0.70"/><path d="M215.6 200.9 L212.2 185.7 L225.7 177.2 L226.0 177.3 L227.7 193.6 L216.9 201.7Z" fill="#6386bf" fill-opacity="0.70"/><path d="M14.0 274.7 L10.9 264.5 L10.1 263.7 L2.9 259.2 L-17.4 278.3 L-0.4 290.7Z" fill="#688cc5" fill-opacity="0.70"/><path d="M237.6 157.9 L223.1 150.5 L223.9 147.6 L229.9 142.9 L238.2 143.0Z" fill="#5a7cb7" fill-opacity="0.33"/><path d="M79.2 284.7 L93.4 286.8 L88.8 280.5 L82.5 274.8 L81.8 274.8Z" fill="#5679b4" fill-opacity="0.70"/><path d="M37.9 292.0 L31.1 301.7 L20.8 293.3 L28.6 289.0 L36.9 290.3Z" fill="#5a7cb7" fill-opacity="0.70"/><path d="M94.9 175.5 L102.9 174.1 L112.6 162.8 L113.1 159.5 L112.8 158.8 L104.4 157.2 L94.4 162.4Z" fill="#668ac3" fill-opacity="0.47"/><path d="M148.9 106.7 L151.0 90.7 L130.9 110.5 L133.0 121.8 L135.3 124.2 L140.3 120.0 L147.4 109.9Z" fill="#6184be" fill-opacity="0.02"/><path d="M166.6 182.0 L178.4 178.2 L176.1 186.8 L164.6 185.5 L164.4 183.4Z" fill="#6487c0" fill-opacity="0.64"/><path d="M4.6 316.2 L4.4 321.0 L-5.0 329.6 L-12.1 314.5 L1.5 305.1 L4.6 309.9 L4.9 314.1Z" fill="#6285bf" fill-opacity="0.70"/><path d="M202.2 149.6 L206.6 146.9 L211.6 141.2 L201.7 140.4 L193.3 139.9 L191.7 142.3 L193.4 144.6Z" fill="#5577b3" fill-opacity="0.29"/><path d="M125.4 326.9 L125.5 335.8 L113.0 334.2 L113.9 330.3 L122.9 326.0Z" fill="#5b7eb9" fill-opacity="0.70"/><path d="M378.6 170.9 L374.4 177.1 L377.3 187.8 L377.9 188.3 L386.0 184.2 L384.4 175.4Z" fill="#597bb6" fill-opacity="0.18"/><path d="M214.2 118.6 L214.9 120.3 L213.0 130.1 L202.8 138.0 L193.2 138.5 L197.3 125.1 L211.1 117.6Z" fill="#5c7eb9" fill-opacity="0.15"/><path d="M69.8 263.9 L68.3 261.9 L75.9 251.1 L77.4 259.2 L70.2 264.2Z" fill="#688cc4" fill-opacity="0.70"/><path d="M75.2 322.9 L62.6 315.8 L68.6 308.1 L77.6 317.7Z" fill="#6083bd" fill-opacity="0.70"/><path d="M7.9 110.0 L1.1 113.1 L2.0 122.2 L7.6 124.5 L9.9 115.6Z" fill="#597bb6" fill-opacity="0.06"/><path d="M320.0 169.5 L320.1 168.8 L332.3 163.2 L333.4 170.2 L328.2 173.0 L320.2 171.6Z" fill="#5678b4" fill-opacity="0.52"/><path d="M92.0 176.3 L91.3 176.9 L84.6 173.5 L78.0 170.2 L78.3 169.4 L85.7 165.7Z" fill="#698dc5" fill-opacity="0.54"/><path d="M308.3 299.8 L304.2 290.6 L293.1 287.8 L291.3 288.8 L291.9 304.6 L304.8 304.2Z" fill="#5476b2" fill-opacity="0.70"/><path d="M157.4 256.2 L156.3 264.2 L162.0 270.3 L162.1 270.1 L164.0 255.0 L159.9 254.0Z" fill="#698dc5" fill-opacity="0.70"/><path d="M92.8 175.7 L86.8 165.2 L88.8 163.2 L92.7 163.4 L93.5 175.2Z" fill="#668ac3" fill-opacity="0.51"/><path d="M203.3 224.5 L203.3 224.5 L197.8 217.8 L176.9 226.2 L177.6 232.8 L178.1 234.5 L181.2 240.0Z" fill="#5f82bc" fill-opacity="0.70"/><path d="M96.2 290.6 L100.5 289.1 L102.6 300.0 L92.1 306.0 L89.2 300.9Z" fill="#6386c0" fill-opacity="0.70"/><path d="M339.4 148.1 L341.9 148.0 L349.2 153.2 L345.0 160.8 L337.0 159.9Z" fill="#5e81bb" fill-opacity="0.32"/><path d="M116.4 222.9 L116.8 222.8 L121.0 228.1 L121.4 243.6 L120.9 243.6 L109.1 235.6Z" fill="#698dc5" fill-opacity="0.70"/><path d="M74.4 327.7 L62.5 332.4 L58.9 334.0 L57.9 320.2 L61.8 317.0 L74.6 324.2Z" fill="#5679b4" fill-opacity="0.70"/><path d="M205.4 282.6 L207.2 285.5 L207.2 285.9 L199.9 286.6 L202.8 281.4Z" fill="#5b7eb8" fill-opacity="0.70"/><path d="M214.8 139.7 L222.4 146.2 L228.7 140.8 L223.9 128.6 L216.3 120.7 L215.3 131.4Z" fill="#688cc4" fill-opacity="0.21"/><path d="M254.3 256.5 L251.4 252.4 L239.0 261.4 L238.7 264.2 L244.2 269.1 L255.0 261.1Z" fill="#688cc4" fill-opacity="0.70"/><path d="M148.9 262.5 L151.5 263.6 L154.4 263.9 L155.9 256.1 L150.0 257.7Z" fill="#668ac3" fill-opacity="0.70"/><path d="M357.7 227.4 L363.8 220.7 L358.4 212.4 L350.3 211.6 L345.1 212.8 L342.9 217.5Z" fill="#5476b2" fill-opacity="0.47"/><path d="M210.2 303.2 L208.4 304.9 L208.4 308.7 L208.1 314.1 L209.0 316.5 L216.7 324.1 L233.8 318.3 L234.5 308.7 L229.6 303.9 L213.1 302.3Z" fill="#6084bd" fill-opacity="0.70"/><path d="M297.9 214.1 L300.3 210.4 L310.3 222.2 L310.6 230.1 L302.3 230.0 L302.0 229.7 L298.8 224.9Z" fill="#6184be" fill-opacity="0.70"/><path d="M272.4 143.5 L280.6 151.6 L280.1 154.6 L271.2 156.7 L266.8 155.7Z" fill="#5f82bc" fill-opacity="0.37"/><path d="M354.0 288.3 L349.5 293.9 L362.2 309.7 L365.6 308.0 L368.0 303.7 L366.9 282.5 L365.4 280.6 L358.1 285.2Z" fill="#678ac3" fill-opacity="0.39"/><path d="M79.3 243.8 L82.0 235.1 L89.1 235.0 L90.2 243.1 L87.2 249.6 L80.0 244.8Z" fill="#6689c2" fill-opacity="0.70"/><path d="M268.7 266.0 L272.7 274.4 L268.8 280.3 L258.7 281.0 L265.7 266.5Z" fill="#5f82bc" fill-opacity="0.70"/><path d="M249.1 318.9 L252.5 315.3 L260.1 319.4 L256.1 321.1Z" fill="#6488c1" fill-opacity="0.70"/><path d="M183.0 207.5 L184.7 196.9 L193.6 195.4 L198.8 206.6 L197.5 211.3Z" fill="#6589c1" fill-opacity="0.70"/><path d="M116.7 305.3 L104.8 299.6 L102.2 288.7 L106.9 285.9 L109.6 287.5 L115.7 292.1 L117.2 303.9Z" fill="#668ac2" fill-opacity="0.70"/><path d="M6.5 317.4 L6.2 322.9 L9.9 329.4 L19.4 334.3 L22.1 333.3Z" fill="#5b7eb8" fill-opacity="0.70"/><path d="M252.1 225.7 L247.7 230.7 L247.4 231.4 L248.8 234.8 L251.5 240.6 L265.6 235.4 L265.6 235.1 L257.8 224.2Z" fill="#5476b2" fill-opacity="0.70"/><path d="M353.5 152.6 L357.2 146.4 L367.9 151.6 L368.1 157.8 L362.6 159.2Z" fill="#597cb7" fill-opacity="0.21"/><path d="M49.2 159.0 L57.9 166.5 L61.0 173.5 L53.9 180.0 L41.9 179.0 L38.4 175.3 L39.1 167.4Z" fill="#5f82bc" fill-opacity="0.54"/><path d="M2.4 163.2 L6.1 182.5 L5.9 182.5 L-1.5 181.9 L-6.6 168.6 L-2.1 163.6Z" fill="#6286bf" fill-opacity="0.56"/><path d="M268.1 235.2 L274.5 240.8 L279.9 238.9 L281.4 227.2 L281.4 224.3 L274.5 222.5 L268.0 235.0Z" fill="#597bb6" fill-opacity="0.70"/><path d="M7.8 297.0 L29.3 304.7 L29.1 308.4 L20.3 310.5 L6.5 308.3 L2.9 303.8 L2.6 297.3Z" fill="#597cb7" fill-opacity="0.70"/><path d="M64.6 155.2 L62.0 161.2 L58.8 164.6 L50.6 157.6 L50.9 153.2 L59.7 150.9Z" fill="#6588c1" fill-opacity="0.41"/><path d="M67.8 265.0 L65.9 262.8 L57.8 256.0 L49.1 265.7 L56.3 276.5Z" fill="#597bb6" fill-opacity="0.70"/><path d="M382.6 297.5 L388.3 286.8 L368.2 282.4 L369.6 303.8 L377.5 301.8Z" fill="#597cb7" fill-opacity="0.23"/><path d="M18.6 193.3 L17.8 189.9 L17.4 189.0 L10.7 184.7 L7.5 184.6 L7.3 184.7 L3.5 202.3 L12.8 201.6Z" fill="#597cb7" fill-opacity="0.70"/><path d="M209.2 287.1 L217.6 282.9 L218.0 292.0 L212.6 299.8 L209.7 301.0 L209.1 287.6Z" fill="#5a7db8" fill-opacity="0.70"/><path d="M200.8 280.4 L193.8 275.5 L187.2 277.1 L186.6 278.4 L195.9 287.4 L197.9 286.1Z" fill="#6387c0" fill-opacity="0.70"/><path d="M4.3 149.3 L-2.5 145.9 L-3.3 146.1 L-8.8 151.4 L-2.2 161.0 L2.2 160.7 L6.7 158.4Z" fill="#6588c1" fill-opacity="0.38"/><path d="M169.7 171.6 L181.3 171.3 L181.4 171.2 L174.1 161.2 L164.5 160.4 L162.4 169.4Z" fill="#5577b3" fill-opacity="0.50"/><path d="M92.8 160.9 L103.0 155.5 L98.4 151.7 L88.1 144.6 L87.5 144.2 L85.8 145.3 L85.4 146.4 L87.4 157.8 L88.7 160.7Z" fill="#5d7fba" fill-opacity="0.37"/><path d="M252.4 150.9 L239.6 159.9 L238.9 157.8 L239.9 143.5 L242.4 142.0 L243.3 142.5Z" fill="#5c7eb9" fill-opacity="0.34"/><path d="M207.8 318.5 L215.5 325.9 L215.1 333.6 L211.7 335.8 L191.4 336.5 L195.4 329.6Z" fill="#688bc4" fill-opacity="0.70"/><path d="M-1.8 184.5 L-3.4 185.5 L-10.9 199.5 L1.4 202.9 L2.3 202.1 L5.7 184.7Z" fill="#6588c1" fill-opacity="0.70"/><path d="M143.6 266.1 L148.1 273.6 L141.0 279.5 L133.9 276.5 L134.5 274.4 L142.3 266.2Z" fill="#5b7eb8" fill-opacity="0.70"/><path d="M162.5 314.9 L177.0 316.4 L178.9 314.2 L178.7 310.6 L175.4 306.5 L167.4 303.7 L165.2 303.5 L157.5 309.5Z" fill="#6184bd" fill-opacity="0.70"/><path d="M163.8 297.6 L169.7 284.6 L163.8 282.2 L155.8 288.1Z" fill="#5e81bb" fill-opacity="0.70"/><path d="M91.3 178.4 L89.3 186.7 L80.8 185.2 L84.8 176.0Z" fill="#5476b2" fill-opacity="0.63"/><path d="M80.3 207.5 L79.9 219.2 L85.3 217.8 L92.3 205.1 L83.7 205.9 L80.5 207.4Z" fill="#587ab6" fill-opacity="0.70"/><path d="M120.7 201.7 L133.5 205.3 L129.1 212.1 L120.7 211.8 L119.1 207.4Z" fill="#698dc5" fill-opacity="0.70"/><path d="M391.0 129.1 L386.6 143.6 L386.6 143.6 L402.6 150.0 L402.8 150.0 L400.4 136.4 L396.6 133.2Z" fill="#5b7eb8" fill-opacity="0.02"/><path d="M317.6 178.7 L320.8 185.3 L315.2 198.9 L312.0 200.7 L303.3 201.8 L302.0 199.9 L299.9 194.2 L306.7 181.2Z" fill="#5779b4" fill-opacity="0.70"/><path d="M177.1 326.0 L181.3 343.1 L177.1 357.7 L166.2 328.3Z" fill="#5679b4" fill-opacity="0.70"/><path d="M319.7 167.7 L314.5 158.8 L326.3 155.7 L332.0 162.1 L332.0 162.2Z" fill="#678bc3" fill-opacity="0.45"/><path d="M140.7 122.5 L158.3 126.9 L152.4 137.3 L142.2 138.0 L135.7 130.9 L135.9 126.0Z" fill="#688cc4" fill-opacity="0.18"/><path d="M134.5 180.9 L133.1 190.7 L144.8 197.1 L145.6 196.8 L146.2 194.1 L143.3 183.5 L141.1 179.2Z" fill="#5a7cb7" fill-opacity="0.69"/><path d="M6.7 126.2 L9.6 131.1 L1.5 133.9 L-5.6 130.3 L-3.4 125.1 L1.4 124.5Z" fill="#5678b4" fill-opacity="0.16"/><path d="M121.3 199.9 L129.1 197.6 L139.7 201.0 L133.7 204.2 L121.3 200.5Z" fill="#5f82bc" fill-opacity="0.70"/><path d="M245.4 130.8 L243.4 133.8 L237.4 126.6 L240.4 118.5 L246.7 119.4 L246.6 124.1Z" fill="#6488c1" fill-opacity="0.14"/></g>
<path d="M0 252.8 L25.9 241.3 L25.2 255 L54.8 238.4 L30 290 L5.8 326 L0 330 Z" fill="#1a2848" filter="url(#bl2)"/>
<path d="M236 40 L290 0 L335 0 L262 32 Z" fill="#1c2c5c" filter="url(#bl2)"/>
<path d="M229 41 L257 0 L278 0 Z" fill="#c4d8f0" filter="url(#bl05)"/>
<path d="M238 33 L262 6 L268 6 Z" fill="#7a96c4" filter="url(#bl05)"/>
<path d="M227 17.5 L249 0 L255 0 Z" fill="#a8c0e4" filter="url(#bl05)"/>
<rect x="440" y="0" width="147" height="330" fill="url(#rp)"/>
<rect x="9" y="9" width="569" height="316" fill="none" stroke="#a8b8e0" stroke-opacity="0.3" stroke-width="0.8"/>
<polygon points="44.0,59.0 38.8,68.0 28.4,68.0 23.2,59.0 28.4,50.0 38.8,50.0" fill="#2a3a66" fill-opacity="0.5" stroke="#a8bce0" stroke-opacity="0.5" stroke-width="0.7"/>
<circle cx="33.6" cy="59.0" r="6.5" fill="url(#gy)"/>
<rect x="34.6" y="50.2" width="11.5" height="7.2" fill="#d08030" fill-opacity="0.92"/>
<text transform="translate(36.0,55.6) scale(0.72,1)" font-family="Liberation Sans" font-weight="bold" font-size="6.4" fill="#fff">001</text>
<circle cx="31.6" cy="60.0" r="2.2" fill="#2a2020" opacity="0.8"/>
<polygon points="60.9,49.0 55.7,58.0 45.3,58.0 40.1,49.0 45.3,40.0 55.7,40.0" fill="#1c2650" fill-opacity="0.55" stroke="#a8bce0" stroke-opacity="0.5" stroke-width="0.7"/>
<circle cx="50.5" cy="49.0" r="6.6" fill="url(#gp)"/>
<polygon points="50.5,43.4 51.8,46.7 55.3,46.2 53.1,49.0 55.3,51.8 51.8,51.3 50.5,54.6 49.2,51.3 45.7,51.8 47.9,49.0 45.7,46.2 49.2,46.7" fill="#b848d8" fill-opacity="0.62" filter="url(#bl05)"/>
<rect x="51.5" y="40.2" width="11.5" height="7.2" fill="#c050d0" fill-opacity="0.92"/>
<text transform="translate(52.9,45.6) scale(0.72,1)" font-family="Liberation Sans" font-weight="bold" font-size="6.4" fill="#fff">001</text>
<circle cx="48.5" cy="50.0" r="2.2" fill="#2a2020" opacity="0.8"/>
<polygon points="77.8,39.0 72.6,48.0 62.2,48.0 57.0,39.0 62.2,30.0 72.6,30.0" fill="#1c2650" fill-opacity="0.55" stroke="#a8bce0" stroke-opacity="0.5" stroke-width="0.7"/>
<circle cx="67.4" cy="39.0" r="6.6" fill="url(#gp)"/>
<polygon points="67.4,33.4 68.7,36.7 72.2,36.2 70.0,39.0 72.2,41.8 68.7,41.3 67.4,44.6 66.1,41.3 62.6,41.8 64.8,39.0 62.6,36.2 66.1,36.7" fill="#b848d8" fill-opacity="0.62" filter="url(#bl05)"/>
<rect x="62.2" y="28.7" width="10.4" height="1.9" fill="#f0f0f4"/>
<rect x="68.4" y="30.2" width="11.5" height="7.2" fill="#c050d0" fill-opacity="0.92"/>
<text transform="translate(69.8,35.6) scale(0.72,1)" font-family="Liberation Sans" font-weight="bold" font-size="6.4" fill="#fff">001</text>
<circle cx="65.4" cy="40.0" r="2.2" fill="#2a2020" opacity="0.8"/>
<polygon points="77.8,59.0 72.6,68.0 62.2,68.0 57.0,59.0 62.2,50.0 72.6,50.0" fill="#1c2650" fill-opacity="0.55" stroke="#a8bce0" stroke-opacity="0.5" stroke-width="0.7"/>
<circle cx="67.4" cy="59.0" r="6.6" fill="url(#gp)"/>
<polygon points="67.4,53.4 68.7,56.7 72.2,56.2 70.0,59.0 72.2,61.8 68.7,61.3 67.4,64.6 66.1,61.3 62.6,61.8 64.8,59.0 62.6,56.2 66.1,56.7" fill="#b848d8" fill-opacity="0.62" filter="url(#bl05)"/>
<polygon points="77.8,79.0 72.6,88.0 62.2,88.0 57.0,79.0 62.2,70.0 72.6,70.0" fill="#1c2650" fill-opacity="0.55" stroke="#a8bce0" stroke-opacity="0.5" stroke-width="0.7"/>
<circle cx="67.4" cy="79.0" r="6.6" fill="url(#gp)"/>
<polygon points="67.4,73.4 68.7,76.7 72.2,76.2 70.0,79.0 72.2,81.8 68.7,81.3 67.4,84.6 66.1,81.3 62.6,81.8 64.8,79.0 62.6,76.2 66.1,76.7" fill="#b848d8" fill-opacity="0.62" filter="url(#bl05)"/>
<polygon points="77.8,99.0 72.6,108.0 62.2,108.0 57.0,99.0 62.2,90.0 72.6,90.0" fill="#1c2650" fill-opacity="0.55" stroke="#a8bce0" stroke-opacity="0.5" stroke-width="0.7"/>
<circle cx="67.4" cy="99.0" r="6.6" fill="url(#gp)"/>
<polygon points="67.4,93.4 68.7,96.7 72.2,96.2 70.0,99.0 72.2,101.8 68.7,101.3 67.4,104.6 66.1,101.3 62.6,101.8 64.8,99.0 62.6,96.2 66.1,96.7" fill="#b848d8" fill-opacity="0.62" filter="url(#bl05)"/>
<polygon points="76.8,99.0 72.1,107.1 62.7,107.1 58.0,99.0 62.7,90.9 72.1,90.9" fill="none" stroke="#f0f0f4" stroke-width="1.8"/>
<polygon points="77.8,119.0 72.6,128.0 62.2,128.0 57.0,119.0 62.2,110.0 72.6,110.0" fill="#1c2650" fill-opacity="0.55" stroke="#a8bce0" stroke-opacity="0.5" stroke-width="0.7"/>
<circle cx="67.4" cy="119.0" r="6.6" fill="url(#gp)"/>
<polygon points="67.4,113.4 68.7,116.7 72.2,116.2 70.0,119.0 72.2,121.8 68.7,121.3 67.4,124.6 66.1,121.3 62.6,121.8 64.8,119.0 62.6,116.2 66.1,116.7" fill="#b848d8" fill-opacity="0.62" filter="url(#bl05)"/>
<polygon points="94.7,49.0 89.5,58.0 79.1,58.0 73.9,49.0 79.1,40.0 89.5,40.0" fill="#1c2650" fill-opacity="0.55" stroke="#a8bce0" stroke-opacity="0.5" stroke-width="0.7"/>
<circle cx="84.3" cy="49.0" r="6.6" fill="url(#gp)"/>
<polygon points="84.3,43.4 85.6,46.7 89.1,46.2 86.9,49.0 89.1,51.8 85.6,51.3 84.3,54.6 83.0,51.3 79.5,51.8 81.7,49.0 79.5,46.2 83.0,46.7" fill="#b848d8" fill-opacity="0.62" filter="url(#bl05)"/>
<polygon points="94.7,69.0 89.5,78.0 79.1,78.0 73.9,69.0 79.1,60.0 89.5,60.0" fill="#1c2650" fill-opacity="0.55" stroke="#a8bce0" stroke-opacity="0.5" stroke-width="0.7"/>
<circle cx="84.3" cy="69.0" r="6.6" fill="url(#gp)"/>
<polygon points="84.3,63.4 85.6,66.7 89.1,66.2 86.9,69.0 89.1,71.8 85.6,71.3 84.3,74.6 83.0,71.3 79.5,71.8 81.7,69.0 79.5,66.2 83.0,66.7" fill="#b848d8" fill-opacity="0.62" filter="url(#bl05)"/>
<polygon points="94.7,89.0 89.5,98.0 79.1,98.0 73.9,89.0 79.1,80.0 89.5,80.0" fill="#1c2650" fill-opacity="0.55" stroke="#a8bce0" stroke-opacity="0.5" stroke-width="0.7"/>
<circle cx="84.3" cy="89.0" r="6.6" fill="url(#gp)"/>
<polygon points="84.3,83.4 85.6,86.7 89.1,86.2 86.9,89.0 89.1,91.8 85.6,91.3 84.3,94.6 83.0,91.3 79.5,91.8 81.7,89.0 79.5,86.2 83.0,86.7" fill="#b848d8" fill-opacity="0.62" filter="url(#bl05)"/>
<polygon points="94.7,109.0 89.5,118.0 79.1,118.0 73.9,109.0 79.1,100.0 89.5,100.0" fill="#1c2650" fill-opacity="0.55" stroke="#a8bce0" stroke-opacity="0.5" stroke-width="0.7"/>
<circle cx="84.3" cy="109.0" r="6.6" fill="url(#gp)"/>
<polygon points="84.3,103.4 85.6,106.7 89.1,106.2 86.9,109.0 89.1,111.8 85.6,111.3 84.3,114.6 83.0,111.3 79.5,111.8 81.7,109.0 79.5,106.2 83.0,106.7" fill="#b848d8" fill-opacity="0.62" filter="url(#bl05)"/>
<polygon points="94.7,129.0 89.5,138.0 79.1,138.0 73.9,129.0 79.1,120.0 89.5,120.0" fill="#1c2650" fill-opacity="0.55" stroke="#a8bce0" stroke-opacity="0.5" stroke-width="0.7"/>
<circle cx="84.3" cy="129.0" r="6.6" fill="url(#gp)"/>
<polygon points="84.3,123.4 85.6,126.7 89.1,126.2 86.9,129.0 89.1,131.8 85.6,131.3 84.3,134.6 83.0,131.3 79.5,131.8 81.7,129.0 79.5,126.2 83.0,126.7" fill="#b848d8" fill-opacity="0.62" filter="url(#bl05)"/>
<rect x="79.1" y="118.7" width="10.4" height="1.9" fill="#f0f0f4"/>
<polygon points="94.7,149.0 89.5,158.0 79.1,158.0 73.9,149.0 79.1,140.0 89.5,140.0" fill="#1c2650" fill-opacity="0.55" stroke="#a8bce0" stroke-opacity="0.5" stroke-width="0.7"/>
<circle cx="84.3" cy="149.0" r="6.6" fill="url(#gp)"/>
<polygon points="84.3,143.4 85.6,146.7 89.1,146.2 86.9,149.0 89.1,151.8 85.6,151.3 84.3,154.6 83.0,151.3 79.5,151.8 81.7,149.0 79.5,146.2 83.0,146.7" fill="#b848d8" fill-opacity="0.62" filter="url(#bl05)"/>
<polygon points="93.7,149.0 89.0,157.1 79.6,157.1 74.9,149.0 79.6,140.9 89.0,140.9" fill="none" stroke="#f0f0f4" stroke-width="1.8"/>
<polygon points="111.6,39.0 106.4,48.0 96.0,48.0 90.8,39.0 96.0,30.0 106.4,30.0" fill="#1c2650" fill-opacity="0.55" stroke="#a8bce0" stroke-opacity="0.5" stroke-width="0.7"/>
<circle cx="101.2" cy="39.0" r="6.6" fill="url(#gp)"/>
<polygon points="101.2,33.4 102.5,36.7 106.0,36.2 103.8,39.0 106.0,41.8 102.5,41.3 101.2,44.6 99.9,41.3 96.4,41.8 98.6,39.0 96.4,36.2 99.9,36.7" fill="#b848d8" fill-opacity="0.62" filter="url(#bl05)"/>
<rect x="96.0" y="28.7" width="10.4" height="1.9" fill="#f0f0f4"/>
<polygon points="111.6,59.0 106.4,68.0 96.0,68.0 90.8,59.0 96.0,50.0 106.4,50.0" fill="#1c2650" fill-opacity="0.55" stroke="#a8bce0" stroke-opacity="0.5" stroke-width="0.7"/>
<circle cx="101.2" cy="59.0" r="6.6" fill="url(#gp)"/>
<polygon points="101.2,53.4 102.5,56.7 106.0,56.2 103.8,59.0 106.0,61.8 102.5,61.3 101.2,64.6 99.9,61.3 96.4,61.8 98.6,59.0 96.4,56.2 99.9,56.7" fill="#b848d8" fill-opacity="0.62" filter="url(#bl05)"/>
<polygon points="111.6,79.0 106.4,88.0 96.0,88.0 90.8,79.0 96.0,70.0 106.4,70.0" fill="#1c2650" fill-opacity="0.55" stroke="#a8bce0" stroke-opacity="0.5" stroke-width="0.7"/>
<circle cx="101.2" cy="79.0" r="6.6" fill="url(#gp)"/>
<polygon points="101.2,73.4 102.5,76.7 106.0,76.2 103.8,79.0 106.0,81.8 102.5,81.3 101.2,84.6 99.9,81.3 96.4,81.8 98.6,79.0 96.4,76.2 99.9,76.7" fill="#b848d8" fill-opacity="0.62" filter="url(#bl05)"/>
<polygon points="111.6,99.0 106.4,108.0 96.0,108.0 90.8,99.0 96.0,90.0 106.4,90.0" fill="#1c2650" fill-opacity="0.55" stroke="#a8bce0" stroke-opacity="0.5" stroke-width="0.7"/>
<circle cx="101.2" cy="99.0" r="6.6" fill="url(#gp)"/>
<polygon points="101.2,93.4 102.5,96.7 106.0,96.2 103.8,99.0 106.0,101.8 102.5,101.3 101.2,104.6 99.9,101.3 96.4,101.8 98.6,99.0 96.4,96.2 99.9,96.7" fill="#b848d8" fill-opacity="0.62" filter="url(#bl05)"/>
<polygon points="111.6,119.0 106.4,128.0 96.0,128.0 90.8,119.0 96.0,110.0 106.4,110.0" fill="#1c2650" fill-opacity="0.55" stroke="#a8bce0" stroke-opacity="0.5" stroke-width="0.7"/>
<circle cx="101.2" cy="119.0" r="6.6" fill="url(#gp)"/>
<polygon points="101.2,113.4 102.5,116.7 106.0,116.2 103.8,119.0 106.0,121.8 102.5,121.3 101.2,124.6 99.9,121.3 96.4,121.8 98.6,119.0 96.4,116.2 99.9,116.7" fill="#b848d8" fill-opacity="0.62" filter="url(#bl05)"/>
<polygon points="128.5,29.0 123.3,38.0 112.9,38.0 107.7,29.0 112.9,20.0 123.3,20.0" fill="#1c2650" fill-opacity="0.55" stroke="#a8bce0" stroke-opacity="0.5" stroke-width="0.7"/>
<circle cx="118.1" cy="29.0" r="6.6" fill="url(#gp)"/>
<polygon points="118.1,23.4 119.4,26.7 122.9,26.2 120.7,29.0 122.9,31.8 119.4,31.3 118.1,34.6 116.8,31.3 113.3,31.8 115.5,29.0 113.3,26.2 116.8,26.7" fill="#b848d8" fill-opacity="0.62" filter="url(#bl05)"/>
<polygon points="128.5,49.0 123.3,58.0 112.9,58.0 107.7,49.0 112.9,40.0 123.3,40.0" fill="#1c2650" fill-opacity="0.55" stroke="#a8bce0" stroke-opacity="0.5" stroke-width="0.7"/>
<circle cx="118.1" cy="49.0" r="6.6" fill="url(#gp)"/>
<polygon points="118.1,43.4 119.4,46.7 122.9,46.2 120.7,49.0 122.9,51.8 119.4,51.3 118.1,54.6 116.8,51.3 113.3,51.8 115.5,49.0 113.3,46.2 116.8,46.7" fill="#b848d8" fill-opacity="0.62" filter="url(#bl05)"/>
<rect x="112.9" y="38.7" width="10.4" height="1.9" fill="#f0f0f4"/>
<polygon points="128.5,69.0 123.3,78.0 112.9,78.0 107.7,69.0 112.9,60.0 123.3,60.0" fill="#1c2650" fill-opacity="0.55" stroke="#a8bce0" stroke-opacity="0.5" stroke-width="0.7"/>
<circle cx="118.1" cy="69.0" r="6.6" fill="url(#gp)"/>
<polygon points="118.1,63.4 119.4,66.7 122.9,66.2 120.7,69.0 122.9,71.8 119.4,71.3 118.1,74.6 116.8,71.3 113.3,71.8 115.5,69.0 113.3,66.2 116.8,66.7" fill="#b848d8" fill-opacity="0.62" filter="url(#bl05)"/>
<rect x="112.9" y="58.7" width="10.4" height="1.9" fill="#f0f0f4"/>
<polygon points="128.5,89.0 123.3,98.0 112.9,98.0 107.7,89.0 112.9,80.0 123.3,80.0" fill="#1c2650" fill-opacity="0.55" stroke="#a8bce0" stroke-opacity="0.5" stroke-width="0.7"/>
<circle cx="118.1" cy="89.0" r="6.6" fill="url(#gp)"/>
<polygon points="118.1,83.4 119.4,86.7 122.9,86.2 120.7,89.0 122.9,91.8 119.4,91.3 118.1,94.6 116.8,91.3 113.3,91.8 115.5,89.0 113.3,86.2 116.8,86.7" fill="#b848d8" fill-opacity="0.62" filter="url(#bl05)"/>
<polygon points="127.5,89.0 122.8,97.1 113.4,97.1 108.7,89.0 113.4,80.9 122.8,80.9" fill="none" stroke="#f0f0f4" stroke-width="1.8"/>
<polygon points="128.5,109.0 123.3,118.0 112.9,118.0 107.7,109.0 112.9,100.0 123.3,100.0" fill="#1c2650" fill-opacity="0.55" stroke="#a8bce0" stroke-opacity="0.5" stroke-width="0.7"/>
<circle cx="118.1" cy="109.0" r="6.6" fill="url(#gp)"/>
<polygon points="118.1,103.4 119.4,106.7 122.9,106.2 120.7,109.0 122.9,111.8 119.4,111.3 118.1,114.6 116.8,111.3 113.3,111.8 115.5,109.0 113.3,106.2 116.8,106.7" fill="#b848d8" fill-opacity="0.62" filter="url(#bl05)"/>
<polygon points="145.4,39.0 140.2,48.0 129.8,48.0 124.6,39.0 129.8,30.0 140.2,30.0" fill="#1c2650" fill-opacity="0.55" stroke="#a8bce0" stroke-opacity="0.5" stroke-width="0.7"/>
<circle cx="135.0" cy="39.0" r="6.6" fill="url(#gp)"/>
<polygon points="135.0,33.4 136.3,36.7 139.8,36.2 137.6,39.0 139.8,41.8 136.3,41.3 135.0,44.6 133.7,41.3 130.2,41.8 132.4,39.0 130.2,36.2 133.7,36.7" fill="#b848d8" fill-opacity="0.62" filter="url(#bl05)"/>
<polygon points="145.4,59.0 140.2,68.0 129.8,68.0 124.6,59.0 129.8,50.0 140.2,50.0" fill="#1c2650" fill-opacity="0.55" stroke="#a8bce0" stroke-opacity="0.5" stroke-width="0.7"/>
<circle cx="135.0" cy="59.0" r="6.6" fill="url(#gp)"/>
<polygon points="135.0,53.4 136.3,56.7 139.8,56.2 137.6,59.0 139.8,61.8 136.3,61.3 135.0,64.6 133.7,61.3 130.2,61.8 132.4,59.0 130.2,56.2 133.7,56.7" fill="#b848d8" fill-opacity="0.62" filter="url(#bl05)"/>
<polygon points="145.4,79.0 140.2,88.0 129.8,88.0 124.6,79.0 129.8,70.0 140.2,70.0" fill="#1c2650" fill-opacity="0.55" stroke="#a8bce0" stroke-opacity="0.5" stroke-width="0.7"/>
<circle cx="135.0" cy="79.0" r="6.6" fill="url(#gp)"/>
<polygon points="135.0,73.4 136.3,76.7 139.8,76.2 137.6,79.0 139.8,81.8 136.3,81.3 135.0,84.6 133.7,81.3 130.2,81.8 132.4,79.0 130.2,76.2 133.7,76.7" fill="#b848d8" fill-opacity="0.62" filter="url(#bl05)"/>
<polygon points="162.3,29.0 157.1,38.0 146.7,38.0 141.5,29.0 146.7,20.0 157.1,20.0" fill="#1c2650" fill-opacity="0.55" stroke="#a8bce0" stroke-opacity="0.5" stroke-width="0.7"/>
<circle cx="151.9" cy="29.0" r="6.6" fill="url(#gp)"/>
<polygon points="151.9,23.4 153.2,26.7 156.7,26.2 154.5,29.0 156.7,31.8 153.2,31.3 151.9,34.6 150.6,31.3 147.1,31.8 149.3,29.0 147.1,26.2 150.6,26.7" fill="#b848d8" fill-opacity="0.62" filter="url(#bl05)"/>
<polygon points="162.3,69.0 157.1,78.0 146.7,78.0 141.5,69.0 146.7,60.0 157.1,60.0" fill="#1c2650" fill-opacity="0.55" stroke="#a8bce0" stroke-opacity="0.5" stroke-width="0.7"/>
<circle cx="151.9" cy="69.0" r="6.6" fill="url(#gp)"/>
<polygon points="151.9,63.4 153.2,66.7 156.7,66.2 154.5,69.0 156.7,71.8 153.2,71.3 151.9,74.6 150.6,71.3 147.1,71.8 149.3,69.0 147.1,66.2 150.6,66.7" fill="#b848d8" fill-opacity="0.62" filter="url(#bl05)"/>
<polygon points="179.2,19.0 174.0,28.0 163.6,28.0 158.4,19.0 163.6,10.0 174.0,10.0" fill="#1c2650" fill-opacity="0.55" stroke="#a8bce0" stroke-opacity="0.5" stroke-width="0.7"/>
<circle cx="168.8" cy="19.0" r="6.6" fill="url(#gp)"/>
<polygon points="168.8,13.4 170.1,16.7 173.6,16.2 171.4,19.0 173.6,21.8 170.1,21.3 168.8,24.6 167.5,21.3 164.0,21.8 166.2,19.0 164.0,16.2 167.5,16.7" fill="#b848d8" fill-opacity="0.62" filter="url(#bl05)"/>
<rect x="163.6" y="8.7" width="10.4" height="1.9" fill="#f0f0f4"/>
<polygon points="196.1,29.0 190.9,38.0 180.5,38.0 175.3,29.0 180.5,20.0 190.9,20.0" fill="#1c2650" fill-opacity="0.55" stroke="#a8bce0" stroke-opacity="0.5" stroke-width="0.7"/>
<circle cx="185.7" cy="29.0" r="6.6" fill="url(#gp)"/>
<polygon points="185.7,23.4 187.0,26.7 190.5,26.2 188.3,29.0 190.5,31.8 187.0,31.3 185.7,34.6 184.4,31.3 180.9,31.8 183.1,29.0 180.9,26.2 184.4,26.7" fill="#b848d8" fill-opacity="0.62" filter="url(#bl05)"/>
<polygon points="196.1,49.0 190.9,58.0 180.5,58.0 175.3,49.0 180.5,40.0 190.9,40.0" fill="#1c2650" fill-opacity="0.55" stroke="#a8bce0" stroke-opacity="0.5" stroke-width="0.7"/>
<circle cx="185.7" cy="49.0" r="6.6" fill="url(#gp)"/>
<polygon points="185.7,43.4 187.0,46.7 190.5,46.2 188.3,49.0 190.5,51.8 187.0,51.3 185.7,54.6 184.4,51.3 180.9,51.8 183.1,49.0 180.9,46.2 184.4,46.7" fill="#b848d8" fill-opacity="0.62" filter="url(#bl05)"/>
<polygon points="213.0,19.0 207.8,28.0 197.4,28.0 192.2,19.0 197.4,10.0 207.8,10.0" fill="#1c2650" fill-opacity="0.55" stroke="#a8bce0" stroke-opacity="0.5" stroke-width="0.7"/>
<circle cx="202.6" cy="19.0" r="6.6" fill="url(#gp)"/>
<polygon points="202.6,13.4 203.9,16.7 207.4,16.2 205.2,19.0 207.4,21.8 203.9,21.3 202.6,24.6 201.3,21.3 197.8,21.8 200.0,19.0 197.8,16.2 201.3,16.7" fill="#b848d8" fill-opacity="0.62" filter="url(#bl05)"/>
<polygon points="213.0,39.0 207.8,48.0 197.4,48.0 192.2,39.0 197.4,30.0 207.8,30.0" fill="#1c2650" fill-opacity="0.55" stroke="#a8bce0" stroke-opacity="0.5" stroke-width="0.7"/>
<circle cx="202.6" cy="39.0" r="6.6" fill="url(#gp)"/>
<polygon points="202.6,33.4 203.9,36.7 207.4,36.2 205.2,39.0 207.4,41.8 203.9,41.3 202.6,44.6 201.3,41.3 197.8,41.8 200.0,39.0 197.8,36.2 201.3,36.7" fill="#b848d8" fill-opacity="0.62" filter="url(#bl05)"/>
<rect x="197.4" y="28.7" width="10.4" height="1.9" fill="#f0f0f4"/>
<polygon points="229.9,69.0 224.7,78.0 214.3,78.0 209.1,69.0 214.3,60.0 224.7,60.0" fill="#2a3c72" fill-opacity="0.5" stroke="#a8bce0" stroke-opacity="0.5" stroke-width="0.7"/>
<circle cx="219.5" cy="69.0" r="6.6" fill="url(#gr)"/>
<polygon points="219.5,63.4 220.8,66.7 224.3,66.2 222.1,69.0 224.3,71.8 220.8,71.3 219.5,74.6 218.2,71.3 214.7,71.8 216.9,69.0 214.7,66.2 218.2,66.7" fill="#f02060" fill-opacity="0.75" filter="url(#bl05)"/>
<rect x="214.3" y="58.7" width="10.4" height="1.9" fill="#f0f0f4"/>
<polygon points="229.9,89.0 224.7,98.0 214.3,98.0 209.1,89.0 214.3,80.0 224.7,80.0" fill="#2a3c72" fill-opacity="0.5" stroke="#a8bce0" stroke-opacity="0.5" stroke-width="0.7"/>
<circle cx="219.5" cy="89.0" r="6.6" fill="url(#gr)"/>
<polygon points="219.5,83.4 220.8,86.7 224.3,86.2 222.1,89.0 224.3,91.8 220.8,91.3 219.5,94.6 218.2,91.3 214.7,91.8 216.9,89.0 214.7,86.2 218.2,86.7" fill="#f02060" fill-opacity="0.75" filter="url(#bl05)"/>
<polygon points="228.9,89.0 224.2,97.1 214.8,97.1 210.1,89.0 214.8,80.9 224.2,80.9" fill="none" stroke="#f0f0f4" stroke-width="1.8"/>
<polygon points="246.8,39.0 241.6,48.0 231.2,48.0 226.0,39.0 231.2,30.0 241.6,30.0" fill="#2a3c72" fill-opacity="0.5" stroke="#a8bce0" stroke-opacity="0.5" stroke-width="0.7"/>
<circle cx="236.4" cy="39.0" r="6.6" fill="url(#gr)"/>
<polygon points="236.4,33.4 237.7,36.7 241.2,36.2 239.0,39.0 241.2,41.8 237.7,41.3 236.4,44.6 235.1,41.3 231.6,41.8 233.8,39.0 231.6,36.2 235.1,36.7" fill="#f02060" fill-opacity="0.75" filter="url(#bl05)"/>
<rect x="231.2" y="28.7" width="10.4" height="1.9" fill="#f0f0f4"/>
<polygon points="246.8,79.0 241.6,88.0 231.2,88.0 226.0,79.0 231.2,70.0 241.6,70.0" fill="#2a3c72" fill-opacity="0.5" stroke="#a8bce0" stroke-opacity="0.5" stroke-width="0.7"/>
<circle cx="236.4" cy="79.0" r="6.6" fill="url(#gr)"/>
<polygon points="236.4,73.4 237.7,76.7 241.2,76.2 239.0,79.0 241.2,81.8 237.7,81.3 236.4,84.6 235.1,81.3 231.6,81.8 233.8,79.0 231.6,76.2 235.1,76.7" fill="#f02060" fill-opacity="0.75" filter="url(#bl05)"/>
<polygon points="263.7,49.0 258.5,58.0 248.1,58.0 242.9,49.0 248.1,40.0 258.5,40.0" fill="#2a3c72" fill-opacity="0.5" stroke="#a8bce0" stroke-opacity="0.5" stroke-width="0.7"/>
<circle cx="253.3" cy="49.0" r="6.6" fill="url(#gr)"/>
<polygon points="253.3,43.4 254.6,46.7 258.1,46.2 255.9,49.0 258.1,51.8 254.6,51.3 253.3,54.6 252.0,51.3 248.5,51.8 250.7,49.0 248.5,46.2 252.0,46.7" fill="#f02060" fill-opacity="0.75" filter="url(#bl05)"/>
<polygon points="263.7,69.0 258.5,78.0 248.1,78.0 242.9,69.0 248.1,60.0 258.5,60.0" fill="#2a3c72" fill-opacity="0.5" stroke="#a8bce0" stroke-opacity="0.5" stroke-width="0.7"/>
<circle cx="253.3" cy="69.0" r="6.6" fill="url(#gr)"/>
<polygon points="253.3,63.4 254.6,66.7 258.1,66.2 255.9,69.0 258.1,71.8 254.6,71.3 253.3,74.6 252.0,71.3 248.5,71.8 250.7,69.0 248.5,66.2 252.0,66.7" fill="#f02060" fill-opacity="0.75" filter="url(#bl05)"/>
<polygon points="263.7,89.0 258.5,98.0 248.1,98.0 242.9,89.0 248.1,80.0 258.5,80.0" fill="#2a3c72" fill-opacity="0.5" stroke="#a8bce0" stroke-opacity="0.5" stroke-width="0.7"/>
<circle cx="253.3" cy="89.0" r="6.6" fill="url(#gr)"/>
<polygon points="253.3,83.4 254.6,86.7 258.1,86.2 255.9,89.0 258.1,91.8 254.6,91.3 253.3,94.6 252.0,91.3 248.5,91.8 250.7,89.0 248.5,86.2 252.0,86.7" fill="#f02060" fill-opacity="0.75" filter="url(#bl05)"/>
<polygon points="280.6,59.0 275.4,68.0 265.0,68.0 259.8,59.0 265.0,50.0 275.4,50.0" fill="#2a3c72" fill-opacity="0.5" stroke="#a8bce0" stroke-opacity="0.5" stroke-width="0.7"/>
<circle cx="270.2" cy="59.0" r="6.6" fill="url(#gr)"/>
<polygon points="270.2,53.4 271.5,56.7 275.0,56.2 272.8,59.0 275.0,61.8 271.5,61.3 270.2,64.6 268.9,61.3 265.4,61.8 267.6,59.0 265.4,56.2 268.9,56.7" fill="#f02060" fill-opacity="0.75" filter="url(#bl05)"/>
<polygon points="280.6,79.0 275.4,88.0 265.0,88.0 259.8,79.0 265.0,70.0 275.4,70.0" fill="#2a3c72" fill-opacity="0.5" stroke="#a8bce0" stroke-opacity="0.5" stroke-width="0.7"/>
<circle cx="270.2" cy="79.0" r="6.6" fill="url(#gr)"/>
<polygon points="270.2,73.4 271.5,76.7 275.0,76.2 272.8,79.0 275.0,81.8 271.5,81.3 270.2,84.6 268.9,81.3 265.4,81.8 267.6,79.0 265.4,76.2 268.9,76.7" fill="#f02060" fill-opacity="0.75" filter="url(#bl05)"/>
<polygon points="279.6,79.0 274.9,87.1 265.5,87.1 260.8,79.0 265.5,70.9 274.9,70.9" fill="none" stroke="#f0f0f4" stroke-width="1.8"/>
<polygon points="280.6,99.0 275.4,108.0 265.0,108.0 259.8,99.0 265.0,90.0 275.4,90.0" fill="#2a3c72" fill-opacity="0.5" stroke="#a8bce0" stroke-opacity="0.5" stroke-width="0.7"/>
<circle cx="270.2" cy="99.0" r="6.6" fill="url(#gr)"/>
<polygon points="270.2,93.4 271.5,96.7 275.0,96.2 272.8,99.0 275.0,101.8 271.5,101.3 270.2,104.6 268.9,101.3 265.4,101.8 267.6,99.0 265.4,96.2 268.9,96.7" fill="#f02060" fill-opacity="0.75" filter="url(#bl05)"/>
<rect x="265.0" y="88.7" width="10.4" height="1.9" fill="#f0f0f4"/>
<polygon points="280.6,119.0 275.4,128.0 265.0,128.0 259.8,119.0 265.0,110.0 275.4,110.0" fill="#2a3c72" fill-opacity="0.5" stroke="#a8bce0" stroke-opacity="0.5" stroke-width="0.7"/>
<circle cx="270.2" cy="119.0" r="6.6" fill="url(#gr)"/>
<polygon points="270.2,113.4 271.5,116.7 275.0,116.2 272.8,119.0 275.0,121.8 271.5,121.3 270.2,124.6 268.9,121.3 265.4,121.8 267.6,119.0 265.4,116.2 268.9,116.7" fill="#f02060" fill-opacity="0.75" filter="url(#bl05)"/>
<polygon points="297.5,49.0 292.3,58.0 281.9,58.0 276.7,49.0 281.9,40.0 292.3,40.0" fill="#2a3c72" fill-opacity="0.5" stroke="#a8bce0" stroke-opacity="0.5" stroke-width="0.7"/>
<circle cx="287.1" cy="49.0" r="6.6" fill="url(#gr)"/>
<polygon points="287.1,43.4 288.4,46.7 291.9,46.2 289.7,49.0 291.9,51.8 288.4,51.3 287.1,54.6 285.8,51.3 282.3,51.8 284.5,49.0 282.3,46.2 285.8,46.7" fill="#f02060" fill-opacity="0.75" filter="url(#bl05)"/>
<rect x="288.1" y="40.2" width="11.5" height="7.2" fill="#e02058" fill-opacity="0.92"/>
<text transform="translate(289.5,45.6) scale(0.72,1)" font-family="Liberation Sans" font-weight="bold" font-size="6.4" fill="#fff">001</text>
<circle cx="285.1" cy="50.0" r="2.2" fill="#2a2020" opacity="0.8"/>
<polygon points="297.5,69.0 292.3,78.0 281.9,78.0 276.7,69.0 281.9,60.0 292.3,60.0" fill="#2a3c72" fill-opacity="0.5" stroke="#a8bce0" stroke-opacity="0.5" stroke-width="0.7"/>
<circle cx="287.1" cy="69.0" r="6.6" fill="url(#gr)"/>
<polygon points="287.1,63.4 288.4,66.7 291.9,66.2 289.7,69.0 291.9,71.8 288.4,71.3 287.1,74.6 285.8,71.3 282.3,71.8 284.5,69.0 282.3,66.2 285.8,66.7" fill="#f02060" fill-opacity="0.75" filter="url(#bl05)"/>
<rect x="288.1" y="60.2" width="11.5" height="7.2" fill="#e02058" fill-opacity="0.92"/>
<text transform="translate(289.5,65.6) scale(0.72,1)" font-family="Liberation Sans" font-weight="bold" font-size="6.4" fill="#fff">001</text>
<circle cx="285.1" cy="70.0" r="2.2" fill="#2a2020" opacity="0.8"/>
<polygon points="297.5,89.0 292.3,98.0 281.9,98.0 276.7,89.0 281.9,80.0 292.3,80.0" fill="#2a3c72" fill-opacity="0.5" stroke="#a8bce0" stroke-opacity="0.5" stroke-width="0.7"/>
<circle cx="287.1" cy="89.0" r="6.6" fill="url(#gr)"/>
<polygon points="287.1,83.4 288.4,86.7 291.9,86.2 289.7,89.0 291.9,91.8 288.4,91.3 287.1,94.6 285.8,91.3 282.3,91.8 284.5,89.0 282.3,86.2 285.8,86.7" fill="#f02060" fill-opacity="0.75" filter="url(#bl05)"/>
<polygon points="297.5,109.0 292.3,118.0 281.9,118.0 276.7,109.0 281.9,100.0 292.3,100.0" fill="#2a3c72" fill-opacity="0.5" stroke="#a8bce0" stroke-opacity="0.5" stroke-width="0.7"/>
<circle cx="287.1" cy="109.0" r="6.6" fill="url(#gr)"/>
<polygon points="287.1,103.4 288.4,106.7 291.9,106.2 289.7,109.0 291.9,111.8 288.4,111.3 287.1,114.6 285.8,111.3 282.3,111.8 284.5,109.0 282.3,106.2 285.8,106.7" fill="#f02060" fill-opacity="0.75" filter="url(#bl05)"/>
<polygon points="297.5,129.0 292.3,138.0 281.9,138.0 276.7,129.0 281.9,120.0 292.3,120.0" fill="#2a3c72" fill-opacity="0.5" stroke="#a8bce0" stroke-opacity="0.5" stroke-width="0.7"/>
<circle cx="287.1" cy="129.0" r="6.6" fill="url(#gr)"/>
<polygon points="287.1,123.4 288.4,126.7 291.9,126.2 289.7,129.0 291.9,131.8 288.4,131.3 287.1,134.6 285.8,131.3 282.3,131.8 284.5,129.0 282.3,126.2 285.8,126.7" fill="#f02060" fill-opacity="0.75" filter="url(#bl05)"/>
<polygon points="314.4,39.0 309.2,48.0 298.8,48.0 293.6,39.0 298.8,30.0 309.2,30.0" fill="#2a3c72" fill-opacity="0.5" stroke="#a8bce0" stroke-opacity="0.5" stroke-width="0.7"/>
<circle cx="304.0" cy="39.0" r="6.6" fill="url(#gr)"/>
<polygon points="304.0,33.4 305.3,36.7 308.8,36.2 306.6,39.0 308.8,41.8 305.3,41.3 304.0,44.6 302.7,41.3 299.2,41.8 301.4,39.0 299.2,36.2 302.7,36.7" fill="#f02060" fill-opacity="0.75" filter="url(#bl05)"/>
<rect x="305.0" y="30.2" width="11.5" height="7.2" fill="#e02058" fill-opacity="0.92"/>
<text transform="translate(306.4,35.6) scale(0.72,1)" font-family="Liberation Sans" font-weight="bold" font-size="6.4" fill="#fff">001</text>
<circle cx="302.0" cy="40.0" r="2.2" fill="#2a2020" opacity="0.8"/>
<polygon points="314.4,59.0 309.2,68.0 298.8,68.0 293.6,59.0 298.8,50.0 309.2,50.0" fill="#2a3c72" fill-opacity="0.5" stroke="#a8bce0" stroke-opacity="0.5" stroke-width="0.7"/>
<circle cx="304.0" cy="59.0" r="6.6" fill="url(#gr)"/>
<polygon points="304.0,53.4 305.3,56.7 308.8,56.2 306.6,59.0 308.8,61.8 305.3,61.3 304.0,64.6 302.7,61.3 299.2,61.8 301.4,59.0 299.2,56.2 302.7,56.7" fill="#f02060" fill-opacity="0.75" filter="url(#bl05)"/>
<polygon points="314.4,79.0 309.2,88.0 298.8,88.0 293.6,79.0 298.8,70.0 309.2,70.0" fill="#2a3c72" fill-opacity="0.5" stroke="#a8bce0" stroke-opacity="0.5" stroke-width="0.7"/>
<circle cx="304.0" cy="79.0" r="6.6" fill="url(#gr)"/>
<polygon points="304.0,73.4 305.3,76.7 308.8,76.2 306.6,79.0 308.8,81.8 305.3,81.3 304.0,84.6 302.7,81.3 299.2,81.8 301.4,79.0 299.2,76.2 302.7,76.7" fill="#f02060" fill-opacity="0.75" filter="url(#bl05)"/>
<polygon points="314.4,99.0 309.2,108.0 298.8,108.0 293.6,99.0 298.8,90.0 309.2,90.0" fill="#2a3c72" fill-opacity="0.5" stroke="#a8bce0" stroke-opacity="0.5" stroke-width="0.7"/>
<circle cx="304.0" cy="99.0" r="6.6" fill="url(#gr)"/>
<polygon points="304.0,93.4 305.3,96.7 308.8,96.2 306.6,99.0 308.8,101.8 305.3,101.3 304.0,104.6 302.7,101.3 299.2,101.8 301.4,99.0 299.2,96.2 302.7,96.7" fill="#f02060" fill-opacity="0.75" filter="url(#bl05)"/>
<polygon points="313.4,99.0 308.7,107.1 299.3,107.1 294.6,99.0 299.3,90.9 308.7,90.9" fill="none" stroke="#f0f0f4" stroke-width="1.8"/>
<polygon points="314.4,119.0 309.2,128.0 298.8,128.0 293.6,119.0 298.8,110.0 309.2,110.0" fill="#2a3c72" fill-opacity="0.5" stroke="#a8bce0" stroke-opacity="0.5" stroke-width="0.7"/>
<circle cx="304.0" cy="119.0" r="6.6" fill="url(#gr)"/>
<polygon points="304.0,113.4 305.3,116.7 308.8,116.2 306.6,119.0 308.8,121.8 305.3,121.3 304.0,124.6 302.7,121.3 299.2,121.8 301.4,119.0 299.2,116.2 302.7,116.7" fill="#f02060" fill-opacity="0.75" filter="url(#bl05)"/>
<polygon points="314.4,139.0 309.2,148.0 298.8,148.0 293.6,139.0 298.8,130.0 309.2,130.0" fill="#2a3c72" fill-opacity="0.5" stroke="#a8bce0" stroke-opacity="0.5" stroke-width="0.7"/>
<circle cx="304.0" cy="139.0" r="6.6" fill="url(#gr)"/>
<polygon points="304.0,133.4 305.3,136.7 308.8,136.2 306.6,139.0 308.8,141.8 305.3,141.3 304.0,144.6 302.7,141.3 299.2,141.8 301.4,139.0 299.2,136.2 302.7,136.7" fill="#f02060" fill-opacity="0.75" filter="url(#bl05)"/>
<polygon points="331.3,29.0 326.1,38.0 315.7,38.0 310.5,29.0 315.7,20.0 326.1,20.0" fill="#2a3c72" fill-opacity="0.5" stroke="#a8bce0" stroke-opacity="0.5" stroke-width="0.7"/>
<circle cx="320.9" cy="29.0" r="6.6" fill="url(#gr)"/>
<polygon points="320.9,23.4 322.2,26.7 325.7,26.2 323.5,29.0 325.7,31.8 322.2,31.3 320.9,34.6 319.6,31.3 316.1,31.8 318.3,29.0 316.1,26.2 319.6,26.7" fill="#f02060" fill-opacity="0.75" filter="url(#bl05)"/>
<rect x="321.9" y="20.2" width="11.5" height="7.2" fill="#e02058" fill-opacity="0.92"/>
<text transform="translate(323.3,25.6) scale(0.72,1)" font-family="Liberation Sans" font-weight="bold" font-size="6.4" fill="#fff">001</text>
<circle cx="318.9" cy="30.0" r="2.2" fill="#2a2020" opacity="0.8"/>
<polygon points="331.3,49.0 326.1,58.0 315.7,58.0 310.5,49.0 315.7,40.0 326.1,40.0" fill="#2a3c72" fill-opacity="0.5" stroke="#a8bce0" stroke-opacity="0.5" stroke-width="0.7"/>
<circle cx="320.9" cy="49.0" r="6.6" fill="url(#gr)"/>
<polygon points="320.9,43.4 322.2,46.7 325.7,46.2 323.5,49.0 325.7,51.8 322.2,51.3 320.9,54.6 319.6,51.3 316.1,51.8 318.3,49.0 316.1,46.2 319.6,46.7" fill="#f02060" fill-opacity="0.75" filter="url(#bl05)"/>
<rect x="321.9" y="40.2" width="11.5" height="7.2" fill="#e02058" fill-opacity="0.92"/>
<text transform="translate(323.3,45.6) scale(0.72,1)" font-family="Liberation Sans" font-weight="bold" font-size="6.4" fill="#fff">001</text>
<circle cx="318.9" cy="50.0" r="2.2" fill="#2a2020" opacity="0.8"/>
<polygon points="331.3,69.0 326.1,78.0 315.7,78.0 310.5,69.0 315.7,60.0 326.1,60.0" fill="#2a3c72" fill-opacity="0.5" stroke="#a8bce0" stroke-opacity="0.5" stroke-width="0.7"/>
<circle cx="320.9" cy="69.0" r="6.6" fill="url(#gr)"/>
<polygon points="320.9,63.4 322.2,66.7 325.7,66.2 323.5,69.0 325.7,71.8 322.2,71.3 320.9,74.6 319.6,71.3 316.1,71.8 318.3,69.0 316.1,66.2 319.6,66.7" fill="#f02060" fill-opacity="0.75" filter="url(#bl05)"/>
<polygon points="331.3,89.0 326.1,98.0 315.7,98.0 310.5,89.0 315.7,80.0 326.1,80.0" fill="#2a3c72" fill-opacity="0.5" stroke="#a8bce0" stroke-opacity="0.5" stroke-width="0.7"/>
<circle cx="320.9" cy="89.0" r="6.6" fill="url(#gr)"/>
<polygon points="320.9,83.4 322.2,86.7 325.7,86.2 323.5,89.0 325.7,91.8 322.2,91.3 320.9,94.6 319.6,91.3 316.1,91.8 318.3,89.0 316.1,86.2 319.6,86.7" fill="#f02060" fill-opacity="0.75" filter="url(#bl05)"/>
<polygon points="330.3,89.0 325.6,97.1 316.2,97.1 311.5,89.0 316.2,80.9 325.6,80.9" fill="none" stroke="#f0f0f4" stroke-width="1.8"/>
<polygon points="331.3,109.0 326.1,118.0 315.7,118.0 310.5,109.0 315.7,100.0 326.1,100.0" fill="#2a3c72" fill-opacity="0.5" stroke="#a8bce0" stroke-opacity="0.5" stroke-width="0.7"/>
<circle cx="320.9" cy="109.0" r="6.6" fill="url(#gr)"/>
<polygon points="320.9,103.4 322.2,106.7 325.7,106.2 323.5,109.0 325.7,111.8 322.2,111.3 320.9,114.6 319.6,111.3 316.1,111.8 318.3,109.0 316.1,106.2 319.6,106.7" fill="#f02060" fill-opacity="0.75" filter="url(#bl05)"/>
<polygon points="331.3,129.0 326.1,138.0 315.7,138.0 310.5,129.0 315.7,120.0 326.1,120.0" fill="#2a3c72" fill-opacity="0.5" stroke="#a8bce0" stroke-opacity="0.5" stroke-width="0.7"/>
<circle cx="320.9" cy="129.0" r="6.6" fill="url(#gr)"/>
<polygon points="320.9,123.4 322.2,126.7 325.7,126.2 323.5,129.0 325.7,131.8 322.2,131.3 320.9,134.6 319.6,131.3 316.1,131.8 318.3,129.0 316.1,126.2 319.6,126.7" fill="#f02060" fill-opacity="0.75" filter="url(#bl05)"/>
<polygon points="331.3,149.0 326.1,158.0 315.7,158.0 310.5,149.0 315.7,140.0 326.1,140.0" fill="#2a3c72" fill-opacity="0.5" stroke="#a8bce0" stroke-opacity="0.5" stroke-width="0.7"/>
<circle cx="320.9" cy="149.0" r="6.6" fill="url(#gr)"/>
<polygon points="320.9,143.4 322.2,146.7 325.7,146.2 323.5,149.0 325.7,151.8 322.2,151.3 320.9,154.6 319.6,151.3 316.1,151.8 318.3,149.0 316.1,146.2 319.6,146.7" fill="#f02060" fill-opacity="0.75" filter="url(#bl05)"/>
<polygon points="331.3,169.0 326.1,178.0 315.7,178.0 310.5,169.0 315.7,160.0 326.1,160.0" fill="#2a3c72" fill-opacity="0.5" stroke="#a8bce0" stroke-opacity="0.5" stroke-width="0.7"/>
<circle cx="320.9" cy="169.0" r="6.6" fill="url(#gr)"/>
<polygon points="320.9,163.4 322.2,166.7 325.7,166.2 323.5,169.0 325.7,171.8 322.2,171.3 320.9,174.6 319.6,171.3 316.1,171.8 318.3,169.0 316.1,166.2 319.6,166.7" fill="#f02060" fill-opacity="0.75" filter="url(#bl05)"/>
<polygon points="348.2,39.0 343.0,48.0 332.6,48.0 327.4,39.0 332.6,30.0 343.0,30.0" fill="#2a3c72" fill-opacity="0.5" stroke="#a8bce0" stroke-opacity="0.5" stroke-width="0.7"/>
<circle cx="337.8" cy="39.0" r="6.6" fill="url(#gr)"/>
<polygon points="337.8,33.4 339.1,36.7 342.6,36.2 340.4,39.0 342.6,41.8 339.1,41.3 337.8,44.6 336.5,41.3 333.0,41.8 335.2,39.0 333.0,36.2 336.5,36.7" fill="#f02060" fill-opacity="0.75" filter="url(#bl05)"/>
<rect x="338.8" y="30.2" width="11.5" height="7.2" fill="#e02058" fill-opacity="0.92"/>
<text transform="translate(340.2,35.6) scale(0.72,1)" font-family="Liberation Sans" font-weight="bold" font-size="6.4" fill="#fff">001</text>
<circle cx="335.8" cy="40.0" r="2.2" fill="#2a2020" opacity="0.8"/>
<polygon points="348.2,59.0 343.0,68.0 332.6,68.0 327.4,59.0 332.6,50.0 343.0,50.0" fill="#2a3c72" fill-opacity="0.5" stroke="#a8bce0" stroke-opacity="0.5" stroke-width="0.7"/>
<circle cx="337.8" cy="59.0" r="6.6" fill="url(#gr)"/>
<polygon points="337.8,53.4 339.1,56.7 342.6,56.2 340.4,59.0 342.6,61.8 339.1,61.3 337.8,64.6 336.5,61.3 333.0,61.8 335.2,59.0 333.0,56.2 336.5,56.7" fill="#f02060" fill-opacity="0.75" filter="url(#bl05)"/>
<rect x="332.6" y="48.7" width="10.4" height="1.9" fill="#f0f0f4"/>
<polygon points="348.2,79.0 343.0,88.0 332.6,88.0 327.4,79.0 332.6,70.0 343.0,70.0" fill="#2a3c72" fill-opacity="0.5" stroke="#a8bce0" stroke-opacity="0.5" stroke-width="0.7"/>
<circle cx="337.8" cy="79.0" r="6.6" fill="url(#gr)"/>
<polygon points="337.8,73.4 339.1,76.7 342.6,76.2 340.4,79.0 342.6,81.8 339.1,81.3 337.8,84.6 336.5,81.3 333.0,81.8 335.2,79.0 333.0,76.2 336.5,76.7" fill="#f02060" fill-opacity="0.75" filter="url(#bl05)"/>
<polygon points="348.2,99.0 343.0,108.0 332.6,108.0 327.4,99.0 332.6,90.0 343.0,90.0" fill="#2a3c72" fill-opacity="0.5" stroke="#a8bce0" stroke-opacity="0.5" stroke-width="0.7"/>
<circle cx="337.8" cy="99.0" r="6.6" fill="url(#gr)"/>
<polygon points="337.8,93.4 339.1,96.7 342.6,96.2 340.4,99.0 342.6,101.8 339.1,101.3 337.8,104.6 336.5,101.3 333.0,101.8 335.2,99.0 333.0,96.2 336.5,96.7" fill="#f02060" fill-opacity="0.75" filter="url(#bl05)"/>
<polygon points="348.2,119.0 343.0,128.0 332.6,128.0 327.4,119.0 332.6,110.0 343.0,110.0" fill="#2a3c72" fill-opacity="0.5" stroke="#a8bce0" stroke-opacity="0.5" stroke-width="0.7"/>
<circle cx="337.8" cy="119.0" r="6.6" fill="url(#gr)"/>
<polygon points="337.8,113.4 339.1,116.7 342.6,116.2 340.4,119.0 342.6,121.8 339.1,121.3 337.8,124.6 336.5,121.3 333.0,121.8 335.2,119.0 333.0,116.2 336.5,116.7" fill="#f02060" fill-opacity="0.75" filter="url(#bl05)"/>
<rect x="338.8" y="110.2" width="11.5" height="7.2" fill="#e02058" fill-opacity="0.92"/>
<text transform="translate(340.2,115.6) scale(0.72,1)" font-family="Liberation Sans" font-weight="bold" font-size="6.4" fill="#fff">001</text>
<circle cx="335.8" cy="120.0" r="2.2" fill="#2a2020" opacity="0.8"/>
<polygon points="348.2,139.0 343.0,148.0 332.6,148.0 327.4,139.0 332.6,130.0 343.0,130.0" fill="#2a3c72" fill-opacity="0.5" stroke="#a8bce0" stroke-opacity="0.5" stroke-width="0.7"/>
<circle cx="337.8" cy="139.0" r="6.6" fill="url(#gr)"/>
<polygon points="337.8,133.4 339.1,136.7 342.6,136.2 340.4,139.0 342.6,141.8 339.1,141.3 337.8,144.6 336.5,141.3 333.0,141.8 335.2,139.0 333.0,136.2 336.5,136.7" fill="#f02060" fill-opacity="0.75" filter="url(#bl05)"/>
<polygon points="365.1,49.0 359.9,58.0 349.5,58.0 344.3,49.0 349.5,40.0 359.9,40.0" fill="#2a3c72" fill-opacity="0.5" stroke="#a8bce0" stroke-opacity="0.5" stroke-width="0.7"/>
<circle cx="354.7" cy="49.0" r="6.6" fill="url(#gr)"/>
<polygon points="354.7,43.4 356.0,46.7 359.5,46.2 357.3,49.0 359.5,51.8 356.0,51.3 354.7,54.6 353.4,51.3 349.9,51.8 352.1,49.0 349.9,46.2 353.4,46.7" fill="#f02060" fill-opacity="0.75" filter="url(#bl05)"/>
<polygon points="365.1,69.0 359.9,78.0 349.5,78.0 344.3,69.0 349.5,60.0 359.9,60.0" fill="#2a3c72" fill-opacity="0.5" stroke="#a8bce0" stroke-opacity="0.5" stroke-width="0.7"/>
<circle cx="354.7" cy="69.0" r="6.6" fill="url(#gr)"/>
<polygon points="354.7,63.4 356.0,66.7 359.5,66.2 357.3,69.0 359.5,71.8 356.0,71.3 354.7,74.6 353.4,71.3 349.9,71.8 352.1,69.0 349.9,66.2 353.4,66.7" fill="#f02060" fill-opacity="0.75" filter="url(#bl05)"/>
<polygon points="365.1,89.0 359.9,98.0 349.5,98.0 344.3,89.0 349.5,80.0 359.9,80.0" fill="#2a3c72" fill-opacity="0.5" stroke="#a8bce0" stroke-opacity="0.5" stroke-width="0.7"/>
<circle cx="354.7" cy="89.0" r="6.6" fill="url(#gr)"/>
<polygon points="354.7,83.4 356.0,86.7 359.5,86.2 357.3,89.0 359.5,91.8 356.0,91.3 354.7,94.6 353.4,91.3 349.9,91.8 352.1,89.0 349.9,86.2 353.4,86.7" fill="#f02060" fill-opacity="0.75" filter="url(#bl05)"/>
<rect x="349.5" y="78.7" width="10.4" height="1.9" fill="#f0f0f4"/>
<polygon points="365.1,109.0 359.9,118.0 349.5,118.0 344.3,109.0 349.5,100.0 359.9,100.0" fill="#2a3c72" fill-opacity="0.5" stroke="#a8bce0" stroke-opacity="0.5" stroke-width="0.7"/>
<circle cx="354.7" cy="109.0" r="6.6" fill="url(#gr)"/>
<polygon points="354.7,103.4 356.0,106.7 359.5,106.2 357.3,109.0 359.5,111.8 356.0,111.3 354.7,114.6 353.4,111.3 349.9,111.8 352.1,109.0 349.9,106.2 353.4,106.7" fill="#f02060" fill-opacity="0.75" filter="url(#bl05)"/>
<polygon points="365.1,129.0 359.9,138.0 349.5,138.0 344.3,129.0 349.5,120.0 359.9,120.0" fill="#2a3c72" fill-opacity="0.5" stroke="#a8bce0" stroke-opacity="0.5" stroke-width="0.7"/>
<circle cx="354.7" cy="129.0" r="6.6" fill="url(#gr)"/>
<polygon points="354.7,123.4 356.0,126.7 359.5,126.2 357.3,129.0 359.5,131.8 356.0,131.3 354.7,134.6 353.4,131.3 349.9,131.8 352.1,129.0 349.9,126.2 353.4,126.7" fill="#f02060" fill-opacity="0.75" filter="url(#bl05)"/>
<polygon points="364.1,129.0 359.4,137.1 350.0,137.1 345.3,129.0 350.0,120.9 359.4,120.9" fill="none" stroke="#f0f0f4" stroke-width="1.8"/>
<polygon points="365.1,149.0 359.9,158.0 349.5,158.0 344.3,149.0 349.5,140.0 359.9,140.0" fill="#2a3c72" fill-opacity="0.5" stroke="#a8bce0" stroke-opacity="0.5" stroke-width="0.7"/>
<circle cx="354.7" cy="149.0" r="6.6" fill="url(#gr)"/>
<polygon points="354.7,143.4 356.0,146.7 359.5,146.2 357.3,149.0 359.5,151.8 356.0,151.3 354.7,154.6 353.4,151.3 349.9,151.8 352.1,149.0 349.9,146.2 353.4,146.7" fill="#f02060" fill-opacity="0.75" filter="url(#bl05)"/>
<polygon points="365.1,169.0 359.9,178.0 349.5,178.0 344.3,169.0 349.5,160.0 359.9,160.0" fill="#2a3c72" fill-opacity="0.5" stroke="#a8bce0" stroke-opacity="0.5" stroke-width="0.7"/>
<circle cx="354.7" cy="169.0" r="6.6" fill="url(#gr)"/>
<polygon points="354.7,163.4 356.0,166.7 359.5,166.2 357.3,169.0 359.5,171.8 356.0,171.3 354.7,174.6 353.4,171.3 349.9,171.8 352.1,169.0 349.9,166.2 353.4,166.7" fill="#f02060" fill-opacity="0.75" filter="url(#bl05)"/>
<rect x="355.7" y="160.2" width="11.5" height="7.2" fill="#e02058" fill-opacity="0.92"/>
<text transform="translate(357.1,165.6) scale(0.72,1)" font-family="Liberation Sans" font-weight="bold" font-size="6.4" fill="#fff">001</text>
<circle cx="352.7" cy="170.0" r="2.2" fill="#2a2020" opacity="0.8"/>
<polygon points="365.1,189.0 359.9,198.0 349.5,198.0 344.3,189.0 349.5,180.0 359.9,180.0" fill="#2a3c72" fill-opacity="0.5" stroke="#a8bce0" stroke-opacity="0.5" stroke-width="0.7"/>
<circle cx="354.7" cy="189.0" r="6.6" fill="url(#gr)"/>
<polygon points="354.7,183.4 356.0,186.7 359.5,186.2 357.3,189.0 359.5,191.8 356.0,191.3 354.7,194.6 353.4,191.3 349.9,191.8 352.1,189.0 349.9,186.2 353.4,186.7" fill="#f02060" fill-opacity="0.75" filter="url(#bl05)"/>
<rect x="355.7" y="180.2" width="11.5" height="7.2" fill="#e02058" fill-opacity="0.92"/>
<text transform="translate(357.1,185.6) scale(0.72,1)" font-family="Liberation Sans" font-weight="bold" font-size="6.4" fill="#fff">001</text>
<circle cx="352.7" cy="190.0" r="2.2" fill="#2a2020" opacity="0.8"/>
<polygon points="382.0,39.0 376.8,48.0 366.4,48.0 361.2,39.0 366.4,30.0 376.8,30.0" fill="#2a3c72" fill-opacity="0.5" stroke="#a8bce0" stroke-opacity="0.5" stroke-width="0.7"/>
<circle cx="371.6" cy="39.0" r="6.6" fill="url(#gr)"/>
<polygon points="371.6,33.4 372.9,36.7 376.4,36.2 374.2,39.0 376.4,41.8 372.9,41.3 371.6,44.6 370.3,41.3 366.8,41.8 369.0,39.0 366.8,36.2 370.3,36.7" fill="#f02060" fill-opacity="0.75" filter="url(#bl05)"/>
<polygon points="381.0,39.0 376.3,47.1 366.9,47.1 362.2,39.0 366.9,30.9 376.3,30.9" fill="none" stroke="#f0f0f4" stroke-width="1.8"/>
<polygon points="382.0,59.0 376.8,68.0 366.4,68.0 361.2,59.0 366.4,50.0 376.8,50.0" fill="#2a3c72" fill-opacity="0.5" stroke="#a8bce0" stroke-opacity="0.5" stroke-width="0.7"/>
<circle cx="371.6" cy="59.0" r="6.6" fill="url(#gr)"/>
<polygon points="371.6,53.4 372.9,56.7 376.4,56.2 374.2,59.0 376.4,61.8 372.9,61.3 371.6,64.6 370.3,61.3 366.8,61.8 369.0,59.0 366.8,56.2 370.3,56.7" fill="#f02060" fill-opacity="0.75" filter="url(#bl05)"/>
<polygon points="382.0,79.0 376.8,88.0 366.4,88.0 361.2,79.0 366.4,70.0 376.8,70.0" fill="#2a3c72" fill-opacity="0.5" stroke="#a8bce0" stroke-opacity="0.5" stroke-width="0.7"/>
<circle cx="371.6" cy="79.0" r="6.6" fill="url(#gr)"/>
<polygon points="371.6,73.4 372.9,76.7 376.4,76.2 374.2,79.0 376.4,81.8 372.9,81.3 371.6,84.6 370.3,81.3 366.8,81.8 369.0,79.0 366.8,76.2 370.3,76.7" fill="#f02060" fill-opacity="0.75" filter="url(#bl05)"/>
<polygon points="382.0,99.0 376.8,108.0 366.4,108.0 361.2,99.0 366.4,90.0 376.8,90.0" fill="#2a3c72" fill-opacity="0.5" stroke="#a8bce0" stroke-opacity="0.5" stroke-width="0.7"/>
<circle cx="371.6" cy="99.0" r="6.6" fill="url(#gr)"/>
<polygon points="371.6,93.4 372.9,96.7 376.4,96.2 374.2,99.0 376.4,101.8 372.9,101.3 371.6,104.6 370.3,101.3 366.8,101.8 369.0,99.0 366.8,96.2 370.3,96.7" fill="#f02060" fill-opacity="0.75" filter="url(#bl05)"/>
<polygon points="382.0,119.0 376.8,128.0 366.4,128.0 361.2,119.0 366.4,110.0 376.8,110.0" fill="#2a3c72" fill-opacity="0.5" stroke="#a8bce0" stroke-opacity="0.5" stroke-width="0.7"/>
<circle cx="371.6" cy="119.0" r="6.6" fill="url(#gr)"/>
<polygon points="371.6,113.4 372.9,116.7 376.4,116.2 374.2,119.0 376.4,121.8 372.9,121.3 371.6,124.6 370.3,121.3 366.8,121.8 369.0,119.0 366.8,116.2 370.3,116.7" fill="#f02060" fill-opacity="0.75" filter="url(#bl05)"/>
<polygon points="382.0,139.0 376.8,148.0 366.4,148.0 361.2,139.0 366.4,130.0 376.8,130.0" fill="#2a3c72" fill-opacity="0.5" stroke="#a8bce0" stroke-opacity="0.5" stroke-width="0.7"/>
<circle cx="371.6" cy="139.0" r="6.6" fill="url(#gr)"/>
<polygon points="371.6,133.4 372.9,136.7 376.4,136.2 374.2,139.0 376.4,141.8 372.9,141.3 371.6,144.6 370.3,141.3 366.8,141.8 369.0,139.0 366.8,136.2 370.3,136.7" fill="#f02060" fill-opacity="0.75" filter="url(#bl05)"/>
<rect x="372.6" y="130.2" width="11.5" height="7.2" fill="#e02058" fill-opacity="0.92"/>
<text transform="translate(374.0,135.6) scale(0.72,1)" font-family="Liberation Sans" font-weight="bold" font-size="6.4" fill="#fff">001</text>
<circle cx="369.6" cy="140.0" r="2.2" fill="#2a2020" opacity="0.8"/>
<polygon points="398.9,49.0 393.7,58.0 383.3,58.0 378.1,49.0 383.3,40.0 393.7,40.0" fill="#2a3c72" fill-opacity="0.5" stroke="#a8bce0" stroke-opacity="0.5" stroke-width="0.7"/>
<circle cx="388.5" cy="49.0" r="6.6" fill="url(#gr)"/>
<polygon points="388.5,43.4 389.8,46.7 393.3,46.2 391.1,49.0 393.3,51.8 389.8,51.3 388.5,54.6 387.2,51.3 383.7,51.8 385.9,49.0 383.7,46.2 387.2,46.7" fill="#f02060" fill-opacity="0.75" filter="url(#bl05)"/>
<polygon points="415.8,39.0 410.6,48.0 400.2,48.0 395.0,39.0 400.2,30.0 410.6,30.0" fill="#2a3c72" fill-opacity="0.5" stroke="#a8bce0" stroke-opacity="0.5" stroke-width="0.7"/>
<circle cx="405.4" cy="39.0" r="6.6" fill="url(#gr)"/>
<polygon points="405.4,33.4 406.7,36.7 410.2,36.2 408.0,39.0 410.2,41.8 406.7,41.3 405.4,44.6 404.1,41.3 400.6,41.8 402.8,39.0 400.6,36.2 404.1,36.7" fill="#f02060" fill-opacity="0.75" filter="url(#bl05)"/>
<polygon points="415.8,59.0 410.6,68.0 400.2,68.0 395.0,59.0 400.2,50.0 410.6,50.0" fill="#2a3c72" fill-opacity="0.5" stroke="#a8bce0" stroke-opacity="0.5" stroke-width="0.7"/>
<circle cx="405.4" cy="59.0" r="6.6" fill="url(#gr)"/>
<polygon points="405.4,53.4 406.7,56.7 410.2,56.2 408.0,59.0 410.2,61.8 406.7,61.3 405.4,64.6 404.1,61.3 400.6,61.8 402.8,59.0 400.6,56.2 404.1,56.7" fill="#f02060" fill-opacity="0.75" filter="url(#bl05)"/>
<rect x="400.2" y="48.7" width="10.4" height="1.9" fill="#f0f0f4"/>
<polygon points="432.7,49.0 427.5,58.0 417.1,58.0 411.9,49.0 417.1,40.0 427.5,40.0" fill="#2a3c72" fill-opacity="0.5" stroke="#a8bce0" stroke-opacity="0.5" stroke-width="0.7"/>
<circle cx="422.3" cy="49.0" r="6.6" fill="url(#gr)"/>
<polygon points="422.3,43.4 423.6,46.7 427.1,46.2 424.9,49.0 427.1,51.8 423.6,51.3 422.3,54.6 421.0,51.3 417.5,51.8 419.7,49.0 417.5,46.2 421.0,46.7" fill="#f02060" fill-opacity="0.75" filter="url(#bl05)"/>
<rect x="417.1" y="38.7" width="10.4" height="1.9" fill="#f0f0f4"/>
<polygon points="415.8,119.0 410.6,128.0 400.2,128.0 395.0,119.0 400.2,110.0 410.6,110.0" fill="#2a4c88" fill-opacity="0.5" stroke="#a8bce0" stroke-opacity="0.5" stroke-width="0.7"/>
<circle cx="405.4" cy="119.0" r="6.6" fill="url(#gb)"/>
<polygon points="405.4,113.4 406.7,116.7 410.2,116.2 408.0,119.0 410.2,121.8 406.7,121.3 405.4,124.6 404.1,121.3 400.6,121.8 402.8,119.0 400.6,116.2 404.1,116.7" fill="#30a8f0" fill-opacity="0.7" filter="url(#bl05)"/>
<polygon points="432.7,89.0 427.5,98.0 417.1,98.0 411.9,89.0 417.1,80.0 427.5,80.0" fill="#2a4c88" fill-opacity="0.5" stroke="#a8bce0" stroke-opacity="0.5" stroke-width="0.7"/>
<circle cx="422.3" cy="89.0" r="6.6" fill="url(#gb)"/>
<polygon points="422.3,83.4 423.6,86.7 427.1,86.2 424.9,89.0 427.1,91.8 423.6,91.3 422.3,94.6 421.0,91.3 417.5,91.8 419.7,89.0 417.5,86.2 421.0,86.7" fill="#30a8f0" fill-opacity="0.7" filter="url(#bl05)"/>
<rect x="423.3" y="80.2" width="11.5" height="7.2" fill="#3aa0e8" fill-opacity="0.92"/>
<text transform="translate(424.7,85.6) scale(0.72,1)" font-family="Liberation Sans" font-weight="bold" font-size="6.4" fill="#fff">001</text>
<circle cx="420.3" cy="90.0" r="2.2" fill="#2a2020" opacity="0.8"/>
<polygon points="432.7,109.0 427.5,118.0 417.1,118.0 411.9,109.0 417.1,100.0 427.5,100.0" fill="#2a4c88" fill-opacity="0.5" stroke="#a8bce0" stroke-opacity="0.5" stroke-width="0.7"/>
<circle cx="422.3" cy="109.0" r="6.6" fill="url(#gb)"/>
<polygon points="422.3,103.4 423.6,106.7 427.1,106.2 424.9,109.0 427.1,111.8 423.6,111.3 422.3,114.6 421.0,111.3 417.5,111.8 419.7,109.0 417.5,106.2 421.0,106.7" fill="#30a8f0" fill-opacity="0.7" filter="url(#bl05)"/>
<rect x="423.3" y="100.2" width="11.5" height="7.2" fill="#3aa0e8" fill-opacity="0.92"/>
<text transform="translate(424.7,105.6) scale(0.72,1)" font-family="Liberation Sans" font-weight="bold" font-size="6.4" fill="#fff">001</text>
<circle cx="420.3" cy="110.0" r="2.2" fill="#2a2020" opacity="0.8"/>
<polygon points="382.0,199.0 376.8,208.0 366.4,208.0 361.2,199.0 366.4,190.0 376.8,190.0" fill="#2a3c72" fill-opacity="0.5" stroke="#a8bce0" stroke-opacity="0.5" stroke-width="0.7"/>
<circle cx="371.6" cy="199.0" r="6.6" fill="url(#gr)"/>
<polygon points="371.6,193.4 372.9,196.7 376.4,196.2 374.2,199.0 376.4,201.8 372.9,201.3 371.6,204.6 370.3,201.3 366.8,201.8 369.0,199.0 366.8,196.2 370.3,196.7" fill="#f02060" fill-opacity="0.75" filter="url(#bl05)"/>
<polygon points="382.0,239.0 376.8,248.0 366.4,248.0 361.2,239.0 366.4,230.0 376.8,230.0" fill="#2a3c72" fill-opacity="0.5" stroke="#a8bce0" stroke-opacity="0.5" stroke-width="0.7"/>
<circle cx="371.6" cy="239.0" r="6.6" fill="url(#gr)"/>
<polygon points="371.6,233.4 372.9,236.7 376.4,236.2 374.2,239.0 376.4,241.8 372.9,241.3 371.6,244.6 370.3,241.3 366.8,241.8 369.0,239.0 366.8,236.2 370.3,236.7" fill="#f02060" fill-opacity="0.75" filter="url(#bl05)"/>
<rect x="366.4" y="228.7" width="10.4" height="1.9" fill="#f0f0f4"/>
<polygon points="382.0,259.0 376.8,268.0 366.4,268.0 361.2,259.0 366.4,250.0 376.8,250.0" fill="#2a3c72" fill-opacity="0.5" stroke="#a8bce0" stroke-opacity="0.5" stroke-width="0.7"/>
<circle cx="371.6" cy="259.0" r="6.6" fill="url(#gr)"/>
<polygon points="371.6,253.4 372.9,256.7 376.4,256.2 374.2,259.0 376.4,261.8 372.9,261.3 371.6,264.6 370.3,261.3 366.8,261.8 369.0,259.0 366.8,256.2 370.3,256.7" fill="#f02060" fill-opacity="0.75" filter="url(#bl05)"/>
<polygon points="398.9,209.0 393.7,218.0 383.3,218.0 378.1,209.0 383.3,200.0 393.7,200.0" fill="#2a3c72" fill-opacity="0.5" stroke="#a8bce0" stroke-opacity="0.5" stroke-width="0.7"/>
<circle cx="388.5" cy="209.0" r="6.6" fill="url(#gr)"/>
<polygon points="388.5,203.4 389.8,206.7 393.3,206.2 391.1,209.0 393.3,211.8 389.8,211.3 388.5,214.6 387.2,211.3 383.7,211.8 385.9,209.0 383.7,206.2 387.2,206.7" fill="#f02060" fill-opacity="0.75" filter="url(#bl05)"/>
<polygon points="397.9,209.0 393.2,217.1 383.8,217.1 379.1,209.0 383.8,200.9 393.2,200.9" fill="none" stroke="#f0f0f4" stroke-width="1.8"/>
<polygon points="398.9,229.0 393.7,238.0 383.3,238.0 378.1,229.0 383.3,220.0 393.7,220.0" fill="#2a3c72" fill-opacity="0.5" stroke="#a8bce0" stroke-opacity="0.5" stroke-width="0.7"/>
<circle cx="388.5" cy="229.0" r="6.6" fill="url(#gr)"/>
<polygon points="388.5,223.4 389.8,226.7 393.3,226.2 391.1,229.0 393.3,231.8 389.8,231.3 388.5,234.6 387.2,231.3 383.7,231.8 385.9,229.0 383.7,226.2 387.2,226.7" fill="#f02060" fill-opacity="0.75" filter="url(#bl05)"/>
<polygon points="398.9,249.0 393.7,258.0 383.3,258.0 378.1,249.0 383.3,240.0 393.7,240.0" fill="#2a3c72" fill-opacity="0.5" stroke="#a8bce0" stroke-opacity="0.5" stroke-width="0.7"/>
<circle cx="388.5" cy="249.0" r="6.6" fill="url(#gr)"/>
<polygon points="388.5,243.4 389.8,246.7 393.3,246.2 391.1,249.0 393.3,251.8 389.8,251.3 388.5,254.6 387.2,251.3 383.7,251.8 385.9,249.0 383.7,246.2 387.2,246.7" fill="#f02060" fill-opacity="0.75" filter="url(#bl05)"/>
<rect x="383.3" y="238.7" width="10.4" height="1.9" fill="#f0f0f4"/>
<polygon points="415.8,199.0 410.6,208.0 400.2,208.0 395.0,199.0 400.2,190.0 410.6,190.0" fill="#2a3c72" fill-opacity="0.5" stroke="#a8bce0" stroke-opacity="0.5" stroke-width="0.7"/>
<circle cx="405.4" cy="199.0" r="6.6" fill="url(#gr)"/>
<polygon points="405.4,193.4 406.7,196.7 410.2,196.2 408.0,199.0 410.2,201.8 406.7,201.3 405.4,204.6 404.1,201.3 400.6,201.8 402.8,199.0 400.6,196.2 404.1,196.7" fill="#f02060" fill-opacity="0.75" filter="url(#bl05)"/>
<polygon points="415.8,239.0 410.6,248.0 400.2,248.0 395.0,239.0 400.2,230.0 410.6,230.0" fill="#2a3c72" fill-opacity="0.5" stroke="#a8bce0" stroke-opacity="0.5" stroke-width="0.7"/>
<circle cx="405.4" cy="239.0" r="6.6" fill="url(#gr)"/>
<polygon points="405.4,233.4 406.7,236.7 410.2,236.2 408.0,239.0 410.2,241.8 406.7,241.3 405.4,244.6 404.1,241.3 400.6,241.8 402.8,239.0 400.6,236.2 404.1,236.7" fill="#f02060" fill-opacity="0.75" filter="url(#bl05)"/>
<polygon points="415.8,259.0 410.6,268.0 400.2,268.0 395.0,259.0 400.2,250.0 410.6,250.0" fill="#2a3c72" fill-opacity="0.5" stroke="#a8bce0" stroke-opacity="0.5" stroke-width="0.7"/>
<circle cx="405.4" cy="259.0" r="6.6" fill="url(#gr)"/>
<polygon points="405.4,253.4 406.7,256.7 410.2,256.2 408.0,259.0 410.2,261.8 406.7,261.3 405.4,264.6 404.1,261.3 400.6,261.8 402.8,259.0 400.6,256.2 404.1,256.7" fill="#f02060" fill-opacity="0.75" filter="url(#bl05)"/>
<rect x="400.2" y="248.7" width="10.4" height="1.9" fill="#f0f0f4"/>
<polygon points="415.8,279.0 410.6,288.0 400.2,288.0 395.0,279.0 400.2,270.0 410.6,270.0" fill="#2a3c72" fill-opacity="0.5" stroke="#a8bce0" stroke-opacity="0.5" stroke-width="0.7"/>
<circle cx="405.4" cy="279.0" r="6.6" fill="url(#gr)"/>
<polygon points="405.4,273.4 406.7,276.7 410.2,276.2 408.0,279.0 410.2,281.8 406.7,281.3 405.4,284.6 404.1,281.3 400.6,281.8 402.8,279.0 400.6,276.2 404.1,276.7" fill="#f02060" fill-opacity="0.75" filter="url(#bl05)"/>
<polygon points="414.8,279.0 410.1,287.1 400.7,287.1 396.0,279.0 400.7,270.9 410.1,270.9" fill="none" stroke="#f0f0f4" stroke-width="1.8"/>
<polygon points="432.7,209.0 427.5,218.0 417.1,218.0 411.9,209.0 417.1,200.0 427.5,200.0" fill="#2a3c72" fill-opacity="0.5" stroke="#a8bce0" stroke-opacity="0.5" stroke-width="0.7"/>
<circle cx="422.3" cy="209.0" r="6.6" fill="url(#gr)"/>
<polygon points="422.3,203.4 423.6,206.7 427.1,206.2 424.9,209.0 427.1,211.8 423.6,211.3 422.3,214.6 421.0,211.3 417.5,211.8 419.7,209.0 417.5,206.2 421.0,206.7" fill="#f02060" fill-opacity="0.75" filter="url(#bl05)"/>
<polygon points="432.7,289.0 427.5,298.0 417.1,298.0 411.9,289.0 417.1,280.0 427.5,280.0" fill="#2a3c72" fill-opacity="0.5" stroke="#a8bce0" stroke-opacity="0.5" stroke-width="0.7"/>
<circle cx="422.3" cy="289.0" r="6.6" fill="url(#gr)"/>
<polygon points="422.3,283.4 423.6,286.7 427.1,286.2 424.9,289.0 427.1,291.8 423.6,291.3 422.3,294.6 421.0,291.3 417.5,291.8 419.7,289.0 417.5,286.2 421.0,286.7" fill="#f02060" fill-opacity="0.75" filter="url(#bl05)"/>
<rect x="417.1" y="278.7" width="10.4" height="1.9" fill="#f0f0f4"/>
<polygon points="449.6,279.0 444.4,288.0 434.0,288.0 428.8,279.0 434.0,270.0 444.4,270.0" fill="#2a3c72" fill-opacity="0.5" stroke="#a8bce0" stroke-opacity="0.5" stroke-width="0.7"/>
<circle cx="439.2" cy="279.0" r="6.6" fill="url(#gr)"/>
<polygon points="439.2,273.4 440.5,276.7 444.0,276.2 441.8,279.0 444.0,281.8 440.5,281.3 439.2,284.6 437.9,281.3 434.4,281.8 436.6,279.0 434.4,276.2 437.9,276.7" fill="#f02060" fill-opacity="0.75" filter="url(#bl05)"/>
<polygon points="128.5,169.0 123.3,178.0 112.9,178.0 107.7,169.0 112.9,160.0 123.3,160.0" fill="#7088b8" fill-opacity="0.45" stroke="#a8bce0" stroke-opacity="0.5" stroke-width="0.7"/>
<circle cx="118.1" cy="169.0" r="7.4" fill="url(#gw)"/>
<polygon points="128.5,189.0 123.3,198.0 112.9,198.0 107.7,189.0 112.9,180.0 123.3,180.0" fill="#7088b8" fill-opacity="0.45" stroke="#a8bce0" stroke-opacity="0.5" stroke-width="0.7"/>
<circle cx="118.1" cy="189.0" r="7.4" fill="url(#gw)"/>
<polygon points="128.5,209.0 123.3,218.0 112.9,218.0 107.7,209.0 112.9,200.0 123.3,200.0" fill="#7088b8" fill-opacity="0.45" stroke="#a8bce0" stroke-opacity="0.5" stroke-width="0.7"/>
<circle cx="118.1" cy="209.0" r="7.4" fill="url(#gw)"/>
<polygon points="145.4,179.0 140.2,188.0 129.8,188.0 124.6,179.0 129.8,170.0 140.2,170.0" fill="#7088b8" fill-opacity="0.45" stroke="#a8bce0" stroke-opacity="0.5" stroke-width="0.7"/>
<circle cx="135.0" cy="179.0" r="7.4" fill="url(#gw)"/>
<polygon points="145.4,199.0 140.2,208.0 129.8,208.0 124.6,199.0 129.8,190.0 140.2,190.0" fill="#7088b8" fill-opacity="0.45" stroke="#a8bce0" stroke-opacity="0.5" stroke-width="0.7"/>
<circle cx="135.0" cy="199.0" r="7.4" fill="url(#gw)"/>
<polygon points="145.4,219.0 140.2,228.0 129.8,228.0 124.6,219.0 129.8,210.0 140.2,210.0" fill="#7088b8" fill-opacity="0.45" stroke="#a8bce0" stroke-opacity="0.5" stroke-width="0.7"/>
<circle cx="135.0" cy="219.0" r="7.4" fill="url(#gw)"/>
<polygon points="145.4,239.0 140.2,248.0 129.8,248.0 124.6,239.0 129.8,230.0 140.2,230.0" fill="#7088b8" fill-opacity="0.45" stroke="#a8bce0" stroke-opacity="0.5" stroke-width="0.7"/>
<circle cx="135.0" cy="239.0" r="7.4" fill="url(#gw)"/>
<polygon points="145.4,259.0 140.2,268.0 129.8,268.0 124.6,259.0 129.8,250.0 140.2,250.0" fill="#7088b8" fill-opacity="0.45" stroke="#a8bce0" stroke-opacity="0.5" stroke-width="0.7"/>
<circle cx="135.0" cy="259.0" r="7.4" fill="url(#gw)"/>
<polygon points="145.4,279.0 140.2,288.0 129.8,288.0 124.6,279.0 129.8,270.0 140.2,270.0" fill="#2a3c72" fill-opacity="0.5" stroke="#a8bce0" stroke-opacity="0.5" stroke-width="0.7"/>
<circle cx="135.0" cy="279.0" r="6.6" fill="url(#gr)"/>
<polygon points="135.0,273.4 136.3,276.7 139.8,276.2 137.6,279.0 139.8,281.8 136.3,281.3 135.0,284.6 133.7,281.3 130.2,281.8 132.4,279.0 130.2,276.2 133.7,276.7" fill="#f02060" fill-opacity="0.75" filter="url(#bl05)"/>
<rect x="129.8" y="268.7" width="10.4" height="1.9" fill="#f0f0f4"/>
<rect x="136.0" y="270.2" width="11.5" height="7.2" fill="#e02058" fill-opacity="0.92"/>
<text transform="translate(137.4,275.6) scale(0.72,1)" font-family="Liberation Sans" font-weight="bold" font-size="6.4" fill="#fff">001</text>
<circle cx="133.0" cy="280.0" r="2.2" fill="#2a2020" opacity="0.8"/>
<polygon points="145.4,299.0 140.2,308.0 129.8,308.0 124.6,299.0 129.8,290.0 140.2,290.0" fill="#2a3c72" fill-opacity="0.5" stroke="#a8bce0" stroke-opacity="0.5" stroke-width="0.7"/>
<circle cx="135.0" cy="299.0" r="6.6" fill="url(#gr)"/>
<polygon points="135.0,293.4 136.3,296.7 139.8,296.2 137.6,299.0 139.8,301.8 136.3,301.3 135.0,304.6 133.7,301.3 130.2,301.8 132.4,299.0 130.2,296.2 133.7,296.7" fill="#f02060" fill-opacity="0.75" filter="url(#bl05)"/>
<rect x="129.8" y="288.7" width="10.4" height="1.9" fill="#f0f0f4"/>
<rect x="136.0" y="290.2" width="11.5" height="7.2" fill="#e02058" fill-opacity="0.92"/>
<text transform="translate(137.4,295.6) scale(0.72,1)" font-family="Liberation Sans" font-weight="bold" font-size="6.4" fill="#fff">001</text>
<circle cx="133.0" cy="300.0" r="2.2" fill="#2a2020" opacity="0.8"/>
<polygon points="162.3,189.0 157.1,198.0 146.7,198.0 141.5,189.0 146.7,180.0 157.1,180.0" fill="#7088b8" fill-opacity="0.45" stroke="#a8bce0" stroke-opacity="0.5" stroke-width="0.7"/>
<circle cx="151.9" cy="189.0" r="7.4" fill="url(#gw)"/>
<polygon points="162.3,209.0 157.1,218.0 146.7,218.0 141.5,209.0 146.7,200.0 157.1,200.0" fill="#7088b8" fill-opacity="0.45" stroke="#a8bce0" stroke-opacity="0.5" stroke-width="0.7"/>
<circle cx="151.9" cy="209.0" r="7.4" fill="url(#gw)"/>
<polygon points="162.3,229.0 157.1,238.0 146.7,238.0 141.5,229.0 146.7,220.0 157.1,220.0" fill="#7088b8" fill-opacity="0.45" stroke="#a8bce0" stroke-opacity="0.5" stroke-width="0.7"/>
<circle cx="151.9" cy="229.0" r="7.4" fill="url(#gw)"/>
<polygon points="162.3,249.0 157.1,258.0 146.7,258.0 141.5,249.0 146.7,240.0 157.1,240.0" fill="#7088b8" fill-opacity="0.45" stroke="#a8bce0" stroke-opacity="0.5" stroke-width="0.7"/>
<circle cx="151.9" cy="249.0" r="7.4" fill="url(#gw)"/>
<rect x="146.7" y="238.7" width="10.4" height="1.9" fill="#f0f0f4"/>
<polygon points="179.2,199.0 174.0,208.0 163.6,208.0 158.4,199.0 163.6,190.0 174.0,190.0" fill="#2a3c72" fill-opacity="0.5" stroke="#a8bce0" stroke-opacity="0.5" stroke-width="0.7"/>
<circle cx="168.8" cy="199.0" r="6.6" fill="url(#gr)"/>
<polygon points="168.8,193.4 170.1,196.7 173.6,196.2 171.4,199.0 173.6,201.8 170.1,201.3 168.8,204.6 167.5,201.3 164.0,201.8 166.2,199.0 164.0,196.2 167.5,196.7" fill="#f02060" fill-opacity="0.75" filter="url(#bl05)"/>
<rect x="163.6" y="188.7" width="10.4" height="1.9" fill="#f0f0f4"/>
<rect x="169.8" y="190.2" width="11.5" height="7.2" fill="#e02058" fill-opacity="0.92"/>
<text transform="translate(171.2,195.6) scale(0.72,1)" font-family="Liberation Sans" font-weight="bold" font-size="6.4" fill="#fff">001</text>
<circle cx="166.8" cy="200.0" r="2.2" fill="#2a2020" opacity="0.8"/>
<polygon points="179.2,219.0 174.0,228.0 163.6,228.0 158.4,219.0 163.6,210.0 174.0,210.0" fill="#7088b8" fill-opacity="0.45" stroke="#a8bce0" stroke-opacity="0.5" stroke-width="0.7"/>
<circle cx="168.8" cy="219.0" r="7.4" fill="url(#gw)"/>
<rect x="163.6" y="208.7" width="10.4" height="1.9" fill="#f0f0f4"/>
<polygon points="196.1,189.0 190.9,198.0 180.5,198.0 175.3,189.0 180.5,180.0 190.9,180.0" fill="#7088b8" fill-opacity="0.45" stroke="#a8bce0" stroke-opacity="0.5" stroke-width="0.7"/>
<circle cx="185.7" cy="189.0" r="7.4" fill="url(#gw)"/>
<rect x="180.5" y="178.7" width="10.4" height="1.9" fill="#f0f0f4"/>
<polygon points="213.0,159.0 207.8,168.0 197.4,168.0 192.2,159.0 197.4,150.0 207.8,150.0" fill="#2a3c72" fill-opacity="0.5" stroke="#a8bce0" stroke-opacity="0.5" stroke-width="0.7"/>
<circle cx="202.6" cy="159.0" r="6.6" fill="url(#gr)"/>
<polygon points="202.6,153.4 203.9,156.7 207.4,156.2 205.2,159.0 207.4,161.8 203.9,161.3 202.6,164.6 201.3,161.3 197.8,161.8 200.0,159.0 197.8,156.2 201.3,156.7" fill="#f02060" fill-opacity="0.75" filter="url(#bl05)"/>
<rect x="197.4" y="148.7" width="10.4" height="1.9" fill="#f0f0f4"/>
<rect x="203.6" y="150.2" width="11.5" height="7.2" fill="#e02058" fill-opacity="0.92"/>
<text transform="translate(205.0,155.6) scale(0.72,1)" font-family="Liberation Sans" font-weight="bold" font-size="6.4" fill="#fff">001</text>
<circle cx="200.6" cy="160.0" r="2.2" fill="#2a2020" opacity="0.8"/>
<polygon points="213.0,179.0 207.8,188.0 197.4,188.0 192.2,179.0 197.4,170.0 207.8,170.0" fill="#7088b8" fill-opacity="0.45" stroke="#a8bce0" stroke-opacity="0.5" stroke-width="0.7"/>
<circle cx="202.6" cy="179.0" r="7.4" fill="url(#gw)"/>
<polygon points="229.9,149.0 224.7,158.0 214.3,158.0 209.1,149.0 214.3,140.0 224.7,140.0" fill="#2a3c72" fill-opacity="0.5" stroke="#a8bce0" stroke-opacity="0.5" stroke-width="0.7"/>
<circle cx="219.5" cy="149.0" r="6.6" fill="url(#gr)"/>
<polygon points="219.5,143.4 220.8,146.7 224.3,146.2 222.1,149.0 224.3,151.8 220.8,151.3 219.5,154.6 218.2,151.3 214.7,151.8 216.9,149.0 214.7,146.2 218.2,146.7" fill="#f02060" fill-opacity="0.75" filter="url(#bl05)"/>
<rect x="214.3" y="138.7" width="10.4" height="1.9" fill="#f0f0f4"/>
<rect x="220.5" y="140.2" width="11.5" height="7.2" fill="#e02058" fill-opacity="0.92"/>
<text transform="translate(221.9,145.6) scale(0.72,1)" font-family="Liberation Sans" font-weight="bold" font-size="6.4" fill="#fff">001</text>
<circle cx="217.5" cy="150.0" r="2.2" fill="#2a2020" opacity="0.8"/>
<polygon points="229.9,169.0 224.7,178.0 214.3,178.0 209.1,169.0 214.3,160.0 224.7,160.0" fill="#7088b8" fill-opacity="0.45" stroke="#a8bce0" stroke-opacity="0.5" stroke-width="0.7"/>
<circle cx="219.5" cy="169.0" r="7.4" fill="url(#gw)"/>
<polygon points="229.9,189.0 224.7,198.0 214.3,198.0 209.1,189.0 214.3,180.0 224.7,180.0" fill="#7088b8" fill-opacity="0.45" stroke="#a8bce0" stroke-opacity="0.5" stroke-width="0.7"/>
<circle cx="219.5" cy="189.0" r="7.4" fill="url(#gw)"/>
<polygon points="246.8,139.0 241.6,148.0 231.2,148.0 226.0,139.0 231.2,130.0 241.6,130.0" fill="#2a3c72" fill-opacity="0.5" stroke="#a8bce0" stroke-opacity="0.5" stroke-width="0.7"/>
<circle cx="236.4" cy="139.0" r="6.6" fill="url(#gr)"/>
<polygon points="236.4,133.4 237.7,136.7 241.2,136.2 239.0,139.0 241.2,141.8 237.7,141.3 236.4,144.6 235.1,141.3 231.6,141.8 233.8,139.0 231.6,136.2 235.1,136.7" fill="#f02060" fill-opacity="0.75" filter="url(#bl05)"/>
<rect x="231.2" y="128.7" width="10.4" height="1.9" fill="#f0f0f4"/>
<rect x="237.4" y="130.2" width="11.5" height="7.2" fill="#e02058" fill-opacity="0.92"/>
<text transform="translate(238.8,135.6) scale(0.72,1)" font-family="Liberation Sans" font-weight="bold" font-size="6.4" fill="#fff">001</text>
<circle cx="234.4" cy="140.0" r="2.2" fill="#2a2020" opacity="0.8"/>
<polygon points="246.8,159.0 241.6,168.0 231.2,168.0 226.0,159.0 231.2,150.0 241.6,150.0" fill="#7088b8" fill-opacity="0.45" stroke="#a8bce0" stroke-opacity="0.5" stroke-width="0.7"/>
<circle cx="236.4" cy="159.0" r="7.4" fill="url(#gw)"/>
<polygon points="246.8,179.0 241.6,188.0 231.2,188.0 226.0,179.0 231.2,170.0 241.6,170.0" fill="#7088b8" fill-opacity="0.45" stroke="#a8bce0" stroke-opacity="0.5" stroke-width="0.7"/>
<circle cx="236.4" cy="179.0" r="7.4" fill="url(#gw)"/>
<polygon points="246.8,199.0 241.6,208.0 231.2,208.0 226.0,199.0 231.2,190.0 241.6,190.0" fill="#7088b8" fill-opacity="0.45" stroke="#a8bce0" stroke-opacity="0.5" stroke-width="0.7"/>
<circle cx="236.4" cy="199.0" r="7.4" fill="url(#gw)"/>
<polygon points="246.8,219.0 241.6,228.0 231.2,228.0 226.0,219.0 231.2,210.0 241.6,210.0" fill="#7088b8" fill-opacity="0.45" stroke="#a8bce0" stroke-opacity="0.5" stroke-width="0.7"/>
<circle cx="236.4" cy="219.0" r="7.4" fill="url(#gw)"/>
<polygon points="246.8,239.0 241.6,248.0 231.2,248.0 226.0,239.0 231.2,230.0 241.6,230.0" fill="#7088b8" fill-opacity="0.45" stroke="#a8bce0" stroke-opacity="0.5" stroke-width="0.7"/>
<circle cx="236.4" cy="239.0" r="7.4" fill="url(#gw)"/>
<polygon points="246.8,259.0 241.6,268.0 231.2,268.0 226.0,259.0 231.2,250.0 241.6,250.0" fill="#7088b8" fill-opacity="0.45" stroke="#a8bce0" stroke-opacity="0.5" stroke-width="0.7"/>
<circle cx="236.4" cy="259.0" r="7.4" fill="url(#gw)"/>
<polygon points="263.7,149.0 258.5,158.0 248.1,158.0 242.9,149.0 248.1,140.0 258.5,140.0" fill="#7088b8" fill-opacity="0.45" stroke="#a8bce0" stroke-opacity="0.5" stroke-width="0.7"/>
<circle cx="253.3" cy="149.0" r="7.4" fill="url(#gw)"/>
<polygon points="263.7,169.0 258.5,178.0 248.1,178.0 242.9,169.0 248.1,160.0 258.5,160.0" fill="#7088b8" fill-opacity="0.45" stroke="#a8bce0" stroke-opacity="0.5" stroke-width="0.7"/>
<circle cx="253.3" cy="169.0" r="7.4" fill="url(#gw)"/>
<polygon points="263.7,189.0 258.5,198.0 248.1,198.0 242.9,189.0 248.1,180.0 258.5,180.0" fill="#7088b8" fill-opacity="0.45" stroke="#a8bce0" stroke-opacity="0.5" stroke-width="0.7"/>
<circle cx="253.3" cy="189.0" r="7.4" fill="url(#gw)"/>
<polygon points="263.7,209.0 258.5,218.0 248.1,218.0 242.9,209.0 248.1,200.0 258.5,200.0" fill="#7088b8" fill-opacity="0.45" stroke="#a8bce0" stroke-opacity="0.5" stroke-width="0.7"/>
<circle cx="253.3" cy="209.0" r="7.4" fill="url(#gw)"/>
<polygon points="263.7,249.0 258.5,258.0 248.1,258.0 242.9,249.0 248.1,240.0 258.5,240.0" fill="#7088b8" fill-opacity="0.45" stroke="#a8bce0" stroke-opacity="0.5" stroke-width="0.7"/>
<circle cx="253.3" cy="249.0" r="7.4" fill="url(#gw)"/>
<polygon points="263.7,269.0 258.5,278.0 248.1,278.0 242.9,269.0 248.1,260.0 258.5,260.0" fill="#7088b8" fill-opacity="0.45" stroke="#a8bce0" stroke-opacity="0.5" stroke-width="0.7"/>
<circle cx="253.3" cy="269.0" r="7.4" fill="url(#gw)"/>
<polygon points="263.7,229.0 258.5,238.0 248.1,238.0 242.9,229.0 248.1,220.0 258.5,220.0" fill="#2a4c88" fill-opacity="0.5" stroke="#a8bce0" stroke-opacity="0.5" stroke-width="0.7"/>
<circle cx="253.3" cy="229.0" r="6.6" fill="url(#gb)"/>
<polygon points="253.3,223.4 254.6,226.7 258.1,226.2 255.9,229.0 258.1,231.8 254.6,231.3 253.3,234.6 252.0,231.3 248.5,231.8 250.7,229.0 248.5,226.2 252.0,226.7" fill="#30a8f0" fill-opacity="0.7" filter="url(#bl05)"/>
<rect x="254.3" y="220.2" width="11.5" height="7.2" fill="#3aa0e8" fill-opacity="0.92"/>
<text transform="translate(255.7,225.6) scale(0.72,1)" font-family="Liberation Sans" font-weight="bold" font-size="6.4" fill="#fff">001</text>
<circle cx="251.3" cy="230.0" r="2.2" fill="#2a2020" opacity="0.8"/>
<polygon points="280.6,159.0 275.4,168.0 265.0,168.0 259.8,159.0 265.0,150.0 275.4,150.0" fill="#7088b8" fill-opacity="0.45" stroke="#a8bce0" stroke-opacity="0.5" stroke-width="0.7"/>
<circle cx="270.2" cy="159.0" r="7.4" fill="url(#gw)"/>
<polygon points="280.6,179.0 275.4,188.0 265.0,188.0 259.8,179.0 265.0,170.0 275.4,170.0" fill="#7088b8" fill-opacity="0.45" stroke="#a8bce0" stroke-opacity="0.5" stroke-width="0.7"/>
<circle cx="270.2" cy="179.0" r="7.4" fill="url(#gw)"/>
<polygon points="280.6,199.0 275.4,208.0 265.0,208.0 259.8,199.0 265.0,190.0 275.4,190.0" fill="#7088b8" fill-opacity="0.45" stroke="#a8bce0" stroke-opacity="0.5" stroke-width="0.7"/>
<circle cx="270.2" cy="199.0" r="7.4" fill="url(#gw)"/>
<rect x="265.0" y="188.7" width="10.4" height="1.9" fill="#f0f0f4"/>
<polygon points="280.6,219.0 275.4,228.0 265.0,228.0 259.8,219.0 265.0,210.0 275.4,210.0" fill="#7088b8" fill-opacity="0.45" stroke="#a8bce0" stroke-opacity="0.5" stroke-width="0.7"/>
<circle cx="270.2" cy="219.0" r="7.4" fill="url(#gw)"/>
<polygon points="280.6,259.0 275.4,268.0 265.0,268.0 259.8,259.0 265.0,250.0 275.4,250.0" fill="#7088b8" fill-opacity="0.45" stroke="#a8bce0" stroke-opacity="0.5" stroke-width="0.7"/>
<circle cx="270.2" cy="259.0" r="7.4" fill="url(#gw)"/>
<polygon points="280.6,239.0 275.4,248.0 265.0,248.0 259.8,239.0 265.0,230.0 275.4,230.0" fill="#2a4c88" fill-opacity="0.5" stroke="#a8bce0" stroke-opacity="0.5" stroke-width="0.7"/>
<circle cx="270.2" cy="239.0" r="6.6" fill="url(#gb)"/>
<polygon points="270.2,233.4 271.5,236.7 275.0,236.2 272.8,239.0 275.0,241.8 271.5,241.3 270.2,244.6 268.9,241.3 265.4,241.8 267.6,239.0 265.4,236.2 268.9,236.7" fill="#30a8f0" fill-opacity="0.7" filter="url(#bl05)"/>
<polygon points="279.6,239.0 274.9,247.1 265.5,247.1 260.8,239.0 265.5,230.9 274.9,230.9" fill="none" stroke="#f0f0f4" stroke-width="1.8"/>
<polygon points="297.5,169.0 292.3,178.0 281.9,178.0 276.7,169.0 281.9,160.0 292.3,160.0" fill="#7088b8" fill-opacity="0.45" stroke="#a8bce0" stroke-opacity="0.5" stroke-width="0.7"/>
<circle cx="287.1" cy="169.0" r="7.4" fill="url(#gw)"/>
<polygon points="297.5,189.0 292.3,198.0 281.9,198.0 276.7,189.0 281.9,180.0 292.3,180.0" fill="#7088b8" fill-opacity="0.45" stroke="#a8bce0" stroke-opacity="0.5" stroke-width="0.7"/>
<circle cx="287.1" cy="189.0" r="7.4" fill="url(#gw)"/>
<rect x="281.9" y="178.7" width="10.4" height="1.9" fill="#f0f0f4"/>
<polygon points="229.9,309.0 224.7,318.0 214.3,318.0 209.1,309.0 214.3,300.0 224.7,300.0" fill="#2a4c88" fill-opacity="0.5" stroke="#a8bce0" stroke-opacity="0.5" stroke-width="0.7"/>
<circle cx="219.5" cy="309.0" r="6.6" fill="url(#gb)"/>
<polygon points="219.5,303.4 220.8,306.7 224.3,306.2 222.1,309.0 224.3,311.8 220.8,311.3 219.5,314.6 218.2,311.3 214.7,311.8 216.9,309.0 214.7,306.2 218.2,306.7" fill="#30a8f0" fill-opacity="0.7" filter="url(#bl05)"/>
<rect x="214.3" y="298.7" width="10.4" height="1.9" fill="#f0f0f4"/>
<polygon points="246.8,299.0 241.6,308.0 231.2,308.0 226.0,299.0 231.2,290.0 241.6,290.0" fill="#2a4c88" fill-opacity="0.5" stroke="#a8bce0" stroke-opacity="0.5" stroke-width="0.7"/>
<circle cx="236.4" cy="299.0" r="6.6" fill="url(#gb)"/>
<polygon points="236.4,293.4 237.7,296.7 241.2,296.2 239.0,299.0 241.2,301.8 237.7,301.3 236.4,304.6 235.1,301.3 231.6,301.8 233.8,299.0 231.6,296.2 235.1,296.7" fill="#30a8f0" fill-opacity="0.7" filter="url(#bl05)"/>
<polygon points="263.7,309.0 258.5,318.0 248.1,318.0 242.9,309.0 248.1,300.0 258.5,300.0" fill="#2a4c88" fill-opacity="0.5" stroke="#a8bce0" stroke-opacity="0.5" stroke-width="0.7"/>
<circle cx="253.3" cy="309.0" r="6.6" fill="url(#gb)"/>
<polygon points="253.3,303.4 254.6,306.7 258.1,306.2 255.9,309.0 258.1,311.8 254.6,311.3 253.3,314.6 252.0,311.3 248.5,311.8 250.7,309.0 248.5,306.2 252.0,306.7" fill="#30a8f0" fill-opacity="0.7" filter="url(#bl05)"/>
<polygon points="280.6,299.0 275.4,308.0 265.0,308.0 259.8,299.0 265.0,290.0 275.4,290.0" fill="#2a4c88" fill-opacity="0.5" stroke="#a8bce0" stroke-opacity="0.5" stroke-width="0.7"/>
<circle cx="270.2" cy="299.0" r="6.6" fill="url(#gb)"/>
<polygon points="270.2,293.4 271.5,296.7 275.0,296.2 272.8,299.0 275.0,301.8 271.5,301.3 270.2,304.6 268.9,301.3 265.4,301.8 267.6,299.0 265.4,296.2 268.9,296.7" fill="#30a8f0" fill-opacity="0.7" filter="url(#bl05)"/>
<rect x="271.2" y="290.2" width="11.5" height="7.2" fill="#3aa0e8" fill-opacity="0.92"/>
<text transform="translate(272.6,295.6) scale(0.72,1)" font-family="Liberation Sans" font-weight="bold" font-size="6.4" fill="#fff">001</text>
<circle cx="268.2" cy="300.0" r="2.2" fill="#2a2020" opacity="0.8"/>
<polygon points="297.5,309.0 292.3,318.0 281.9,318.0 276.7,309.0 281.9,300.0 292.3,300.0" fill="#2a4c88" fill-opacity="0.5" stroke="#a8bce0" stroke-opacity="0.5" stroke-width="0.7"/>
<circle cx="287.1" cy="309.0" r="6.6" fill="url(#gb)"/>
<polygon points="287.1,303.4 288.4,306.7 291.9,306.2 289.7,309.0 291.9,311.8 288.4,311.3 287.1,314.6 285.8,311.3 282.3,311.8 284.5,309.0 282.3,306.2 285.8,306.7" fill="#30a8f0" fill-opacity="0.7" filter="url(#bl05)"/>
<rect x="288.1" y="300.2" width="11.5" height="7.2" fill="#3aa0e8" fill-opacity="0.92"/>
<text transform="translate(289.5,305.6) scale(0.72,1)" font-family="Liberation Sans" font-weight="bold" font-size="6.4" fill="#fff">001</text>
<circle cx="285.1" cy="310.0" r="2.2" fill="#2a2020" opacity="0.8"/>
<polygon points="314.4,299.0 309.2,308.0 298.8,308.0 293.6,299.0 298.8,290.0 309.2,290.0" fill="#2a4c88" fill-opacity="0.5" stroke="#a8bce0" stroke-opacity="0.5" stroke-width="0.7"/>
<circle cx="304.0" cy="299.0" r="6.6" fill="url(#gb)"/>
<polygon points="304.0,293.4 305.3,296.7 308.8,296.2 306.6,299.0 308.8,301.8 305.3,301.3 304.0,304.6 302.7,301.3 299.2,301.8 301.4,299.0 299.2,296.2 302.7,296.7" fill="#30a8f0" fill-opacity="0.7" filter="url(#bl05)"/>
<rect x="305.0" y="290.2" width="11.5" height="7.2" fill="#3aa0e8" fill-opacity="0.92"/>
<text transform="translate(306.4,295.6) scale(0.72,1)" font-family="Liberation Sans" font-weight="bold" font-size="6.4" fill="#fff">001</text>
<circle cx="302.0" cy="300.0" r="2.2" fill="#2a2020" opacity="0.8"/>
<polygon points="331.3,309.0 326.1,318.0 315.7,318.0 310.5,309.0 315.7,300.0 326.1,300.0" fill="#2a4c88" fill-opacity="0.5" stroke="#a8bce0" stroke-opacity="0.5" stroke-width="0.7"/>
<circle cx="320.9" cy="309.0" r="6.6" fill="url(#gb)"/>
<polygon points="320.9,303.4 322.2,306.7 325.7,306.2 323.5,309.0 325.7,311.8 322.2,311.3 320.9,314.6 319.6,311.3 316.1,311.8 318.3,309.0 316.1,306.2 319.6,306.7" fill="#30a8f0" fill-opacity="0.7" filter="url(#bl05)"/>
<rect x="321.9" y="300.2" width="11.5" height="7.2" fill="#3aa0e8" fill-opacity="0.92"/>
<text transform="translate(323.3,305.6) scale(0.72,1)" font-family="Liberation Sans" font-weight="bold" font-size="6.4" fill="#fff">001</text>
<circle cx="318.9" cy="310.0" r="2.2" fill="#2a2020" opacity="0.8"/>
<polygon points="331.3,169.0 326.1,178.0 315.7,178.0 310.5,169.0 315.7,160.0 326.1,160.0" fill="#2a3c72" fill-opacity="0.5" stroke="#a8bce0" stroke-opacity="0.5" stroke-width="0.7"/>
<circle cx="320.9" cy="169.0" r="6.6" fill="url(#gr)"/>
<polygon points="320.9,163.4 322.2,166.7 325.7,166.2 323.5,169.0 325.7,171.8 322.2,171.3 320.9,174.6 319.6,171.3 316.1,171.8 318.3,169.0 316.1,166.2 319.6,166.7" fill="#f02060" fill-opacity="0.75" filter="url(#bl05)"/>

<g>
<path d="M468 16 H587 M468 16 V60 M468 175 V210 M468 175 H587" stroke="#c0c8f0" stroke-opacity="0.35" stroke-width="0.8" fill="none"/>
<rect x="471.5" y="17.8" width="115.5" height="42.2" fill="url(#zc)"/>
<rect x="471.5" y="166.2" width="115.5" height="42.8" fill="url(#pl)" fill-opacity="0.92"/>
<g font-family="Liberation Sans" fill="#f4f4f4">
<text transform="translate(481.7,36.8) scale(0.53,1)" font-size="22.5">ZONES</text>
<text transform="translate(481.7,55.8) scale(0.53,1)" font-size="22.5">CAPTURED.</text>
<text transform="translate(482,195) scale(0.53,1)" font-size="22.5">PLATINUM.</text>
</g>
<g font-family="Liberation Sans" font-weight="bold">
<rect x="470" y="70" width="2" height="15" fill="#e09a18"/>
<rect x="531.5" y="70" width="2" height="15" fill="#d0204a"/>
<rect x="470" y="108.5" width="2" height="15" fill="#2a90d8"/>
<rect x="531.5" y="108.5" width="2" height="15" fill="#a040c0"/>
<text transform="translate(475.5,82.4) scale(0.52,1)" font-size="14" fill="#e8c078">PLAYER 01</text>
<text transform="translate(537,82.4) scale(0.52,1)" font-size="14" fill="#f078a0">PLAYER 02</text>
<text transform="translate(475.5,120.7) scale(0.52,1)" font-size="14" fill="#90c8f8">PLAYER 03</text>
<text transform="translate(537,120.7) scale(0.52,1)" font-size="14" fill="#e890f0">PLAYER 04</text>
<text transform="translate(475.5,98) scale(0.66,1)" font-size="14.5" font-weight="normal" fill="#f0f0f0">01</text>
<text transform="translate(537,98) scale(0.66,1)" font-size="14.5" font-weight="normal" fill="#f0f0f0">73</text>
<text transform="translate(475.5,135.9) scale(0.66,1)" font-size="14.5" font-weight="normal" fill="#f0f0f0">12</text>
<text transform="translate(537,135.9) scale(0.66,1)" font-size="14.5" font-weight="normal" fill="#f0f0f0">32</text>
<rect x="470" y="219" width="2" height="15" fill="#e09a18"/>
<rect x="531.5" y="219" width="2" height="15" fill="#d0204a"/>
<rect x="470" y="257.5" width="2" height="15" fill="#2a90d8"/>
<rect x="531.5" y="257.5" width="2" height="15" fill="#a040c0"/>
<text transform="translate(475.5,231) scale(0.52,1)" font-size="14" fill="#e8c078">PLAYER 01</text>
<text transform="translate(537,231) scale(0.52,1)" font-size="14" fill="#f078a0">PLAYER 02</text>
<text transform="translate(475.5,269) scale(0.52,1)" font-size="14" fill="#90c8f8">PLAYER 03</text>
<text transform="translate(537,269) scale(0.52,1)" font-size="14" fill="#e890f0">PLAYER 04</text>
<text transform="translate(475.5,247) scale(0.66,1)" font-size="14.5" font-weight="normal" fill="#f0f0f0">00</text>
<text transform="translate(537,247) scale(0.66,1)" font-size="14.5" font-weight="normal" fill="#f0f0f0">80</text>
<text transform="translate(475.5,284.8) scale(0.66,1)" font-size="14.5" font-weight="normal" fill="#f0f0f0">19</text>
<text transform="translate(537,284.8) scale(0.66,1)" font-size="14.5" font-weight="normal" fill="#f0f0f0">29</text>
</g>
<text transform="translate(469.7,315.4) scale(0.62,1)" font-family="Liberation Sans" font-size="13" fill="#a0a8c8" fill-opacity="0.8">ZOOM</text>
<rect x="495" y="303" width="80" height="13.6" fill="#8a8ac0" fill-opacity="0.35" stroke="#b0b8e0" stroke-opacity="0.5" stroke-width="0.7"/>
<path d="M495 300 V318 H580 V303" fill="none" stroke="#c0c8f0" stroke-opacity="0.4" stroke-width="0.7"/>
</g>

</svg>
<!--/GAME-->
</div>
<div class="abs" style="left:25px;top:376px;width:587px;height:2.4px;background:#3a3d40"></div>
<div class="abs" style="left:25px;top:376px;width:460px;height:2.4px;background:#f0c400"></div>
<div class="abs" style="left:504.5px;top:376px;width:6.5px;height:2.4px;background:#e88a10"></div>
<div class="abs" style="left:25px;top:378.4px;width:587px;height:35.6px;background:#202428"></div>
<svg class="abs" style="left:25px;top:378px" width="587" height="36" viewBox="0 0 587 36">
 <g fill="none" stroke="#8b8c86" stroke-width="1.2">
  <circle cx="17" cy="18" r="10"/><circle cx="43.8" cy="18" r="10"/><circle cx="97.5" cy="18" r="10"/><circle cx="124.3" cy="18" r="10"/>
 </g>
 <circle cx="70.6" cy="18" r="10.6" fill="#c8c9c1"/>
 <path d="M67.6 13.4 L75.2 18 L67.6 22.6 Z" fill="#202428"/>
 <g fill="#c8c9c1">
  <path d="M12.3 18 L16.6 14.2 L16.6 21.8 Z M16.3 18 L20.6 14.2 L20.6 21.8 Z"/>
  <path d="M128.9 18 L124.6 14.2 L124.6 21.8 Z M124.9 18 L120.6 14.2 L120.6 21.8 Z"/>
 </g>
 <g fill="none" stroke="#c8c9c1" stroke-width="1.8">
  <path d="M46 14 L42 18 L46 22"/><path d="M95.5 14 L99.5 18 L95.5 22"/>
 </g>
 <text x="469" y="22.3" font-family="Liberation Sans" font-size="11.2" fill="#c8c9c1" id="cnt">73/93</text>
 <g transform="translate(516,17.7)" fill="#c8c9c1">
  <circle r="6.4"/>
  <g stroke="#c8c9c1" stroke-width="2.6"><path d="M0 -8.6 V8.6 M-8.6 0 H8.6 M-6.1 -6.1 L6.1 6.1 M-6.1 6.1 L6.1 -6.1"/></g>
  <circle r="2.8" fill="#202428"/>
 </g>
 <g fill="#c8c9c1"><circle cx="537.6" cy="17.5" r="3.6"/><circle cx="544.8" cy="11.7" r="3.4"/><circle cx="544.8" cy="23" r="3.4"/></g>
 <path d="M537.6 17.5 L544.8 11.7 M537.6 17.5 L544.8 23" stroke="#c8c9c1" stroke-width="1.6"/>
 <rect x="560.5" y="13.2" width="14.6" height="9.6" fill="none" stroke="#c8c9c1" stroke-width="1.5"/>
 <g fill="#c8c9c1">
  <path d="M557.5 9.5 L561.5 9.5 L557.5 13.5 Z M578 9.5 L574 9.5 L578 13.5 Z M557.5 26.4 L561.5 26.4 L557.5 22.4 Z M578 26.4 L574 26.4 L578 22.4 Z"/>
 </g>
</svg>
<div class="abs" style="left:25px;top:414px;width:587px;height:34.5px;background:#f0f0f0"></div>
<div class="t sx" id="pe" style="transform:scaleX(0.906);left:32px;top:429.5px;font-size:10px;font-weight:bold;color:#3a3c40">Planet Earth - Solar year 276453</div>
<div class="abs" style="left:543px;top:421px;width:63px;height:20.4px;border:1.2px solid #5c5c5c"></div>
<div id="vm" class="t sx" style="transform:scaleX(0.97);left:548.6px;top:427.5px;font-size:8px;color:#3a3a3a">VIEW MORE +</div>
<div class="abs" style="left:12px;top:450px;width:614px;height:49px;overflow:hidden">
<div class="t sx" id="d1" style="transform:scaleX(0.879);-webkit-text-stroke:0.3px #2a2c30;left:14px;top:12.5px;font-size:10px;font-weight:bold;color:#2a2c30">You can navigate within the map in the same way you would on google maps: zoom/unzoom with the mouse wheel and move using drag'n</div>
<div class="t sx" id="d2" style="transform:scaleX(0.879);-webkit-text-stroke:0.3px #2a2c30;left:14px;top:24px;font-size:10px;font-weight:bold;color:#2a2c30">drop. Debug mode is available from the settings panel (the dented wheel).</div>
<div class="t sx" id="d3" style="transform:scaleX(0.879);-webkit-text-stroke:0.3px #2a2c30;left:14px;top:46.5px;font-size:10px;font-weight:bold;color:#2a2c30">THE PROGRAM</div>
</div>

<!-- PANEL TR -->
<div class="panel" id="ptr" style="left:642px;top:32px;width:625px;height:467px"></div>
<!-- PANEL BL -->
<div class="panel" id="pbl" style="left:12px;top:505px;width:624px;height:198px"></div>
<!-- PANEL BR -->
<div class="panel" id="pbr" style="left:642px;top:505px;width:625px;height:198px"></div>


<!-- CODE EDITOR HEADER -->
<div class="t" id="ce1" style="left:656px;top:44px;font-size:14px;letter-spacing:-0.6px;font-weight:bold;color:#2a2d33">Code editor</div>
<div class="t" id="ce2" style="left:730px;top:44px;font-size:14px;letter-spacing:-0.6px;color:#6a6a6a">(Python)</div>
<svg class="abs" style="left:1220px;top:49px" width="32" height="12" viewBox="0 0 32 12">
 <path d="M8.6 4.2 A4 4 0 1 0 8.9 8.2" fill="none" stroke="#333" stroke-width="2"/>
 <path d="M6.3 1.5 L10.8 1.5 L10.8 6 Z" fill="#222"/>
 <rect x="20.7" y="2.2" width="8.3" height="8.4" fill="none" stroke="#2a2d33" stroke-width="1.4"/>
 <rect x="20" y="1.5" width="9.7" height="2.4" fill="#222"/>
</svg>
<!--CODE-->
<div id="code" class="mono"><div class="abs" style="left:666px;top:173.38px;width:591px;height:8.5px;background:#e6effc"></div>
<div class="n" style="top:71.00px">1</div>
<div class="l" style="top:71.00px"><span class="k">import</span> sys, math</div>
<div class="n" style="top:79.69px">2</div>
<div class="l" style="top:79.69px"></div>
<div class="n" style="top:88.38px">3</div>
<div class="l" style="top:88.38px"><span class="c"># Auto-generated code below aims at helping you parse</span></div>
<div class="n" style="top:97.07px">4</div>
<div class="l" style="top:97.07px"><span class="c"># the standard input according to the problem statement.</span></div>
<div class="n" style="top:105.76px">5</div>
<div class="l" style="top:105.76px"></div>
<div class="n" style="top:114.45px">6</div>
<div class="l" style="top:114.45px"><span class="c"># playerCount: the amount of players (2 to 4)</span></div>
<div class="n" style="top:123.14px">7</div>
<div class="l" style="top:123.14px"><span class="c"># myId: my player ID (0, 1, 2 or 3)</span></div>
<div class="n" style="top:131.83px">8</div>
<div class="l" style="top:131.83px"><span class="c"># zoneCount: the amount of zones on the map</span></div>
<div class="n" style="top:140.52px">9</div>
<div class="l" style="top:140.52px"><span class="c"># linkCount: the amount of links between all zones</span></div>
<div class="n" style="top:149.21px">10</div>
<div class="l" style="top:149.21px">playerCount, myId, zoneCount, linkCount <span class="o">=</span> [<span class="b">int</span>(i) <span class="k">for</span> i <span class="k">in</span> <span class="b">raw_input</span>().split()]</div>
<div class="n" style="top:157.90px">11</div>
<div class="fa" style="top:157.90px"></div>
<div class="l" style="top:157.90px"><span class="k">for</span> i <span class="k">in</span> <span class="b">xrange</span>(zoneCount):</div>
<div class="n" style="top:166.59px">12</div>
<div class="l" style="top:166.59px">    <span class="c"># zoneId: this zone&#x27;s ID (between 0 and zoneCount-1)</span></div>
<div class="n" style="top:175.28px">13</div>
<div class="l" style="top:175.28px">    <span class="c"># platinumSource: the amount of Platinum this zone can provide per game turn</span></div>
<div class="n" style="top:183.97px">14</div>
<div class="l" style="top:183.97px">    zoneId, platinumSource <span class="o">=</span> [<span class="b">int</span>(i) <span class="k">for</span> i <span class="k">in</span> <span class="b">raw_input</span>().split()]</div>
<div class="n" style="top:192.66px">15</div>
<div class="fa" style="top:192.66px"></div>
<div class="l" style="top:192.66px"><span class="k">for</span> i <span class="k">in</span> <span class="b">xrange</span>(linkCount):</div>
<div class="n" style="top:201.35px">16</div>
<div class="l" style="top:201.35px">    zone1, zone2 <span class="o">=</span> [<span class="b">int</span>(i) <span class="k">for</span> i <span class="k">in</span> <span class="b">raw_input</span>().split()]</div>
<div class="n" style="top:210.04px">17</div>
<div class="l" style="top:210.04px"></div>
<div class="n" style="top:218.73px">18</div>
<div class="l" style="top:218.73px"><span class="c"># game loop</span></div>
<div class="n" style="top:227.42px">19</div>
<div class="fa" style="top:227.42px"></div>
<div class="l" style="top:227.42px"><span class="k">while</span> <span class="d">1</span>:</div>
<div class="n" style="top:236.11px">20</div>
<div class="fa" style="top:236.11px"></div>
<div class="l" style="top:236.11px">    <span class="k">for</span> _ <span class="k">in</span> <span class="b">xrange</span>(<span class="d">800</span>):</div>
<div class="n" style="top:244.80px">21</div>
<div class="l" style="top:244.80px">        <span class="k">print</span> <span class="s">&quot;1 0 0&quot;</span>,</div>
<div class="n" style="top:253.49px">22</div>
<div class="l" style="top:253.49px">    <span class="k">print</span></div>
<div class="n" style="top:262.18px">23</div>
<div class="fa" style="top:262.18px"></div>
<div class="l" style="top:262.18px">    <span class="k">for</span> _ <span class="k">in</span> <span class="b">xrange</span>(<span class="d">800</span>):</div>
<div class="n" style="top:270.87px">24</div>
<div class="l" style="top:270.87px">        <span class="k">print</span> <span class="s">&quot;1 0 0&quot;</span>,</div>
<div class="n" style="top:279.56px">25</div>
<div class="l" style="top:279.56px">    <span class="k">print</span></div>
<div class="n" style="top:288.25px">26</div>
<div class="l" style="top:288.25px">    platinum <span class="o">=</span> <span class="b">int</span>(<span class="b">raw_input</span>()) <span class="c"># my available Platinum</span></div>
<div class="n" style="top:296.94px">27</div>
<div class="fa" style="top:296.94px"></div>
<div class="l" style="top:296.94px">    <span class="k">for</span> i <span class="k">in</span> <span class="b">xrange</span>(zoneCount):</div>
<div class="n" style="top:305.63px">28</div>
<div class="l" style="top:305.63px">        <span class="c"># zId: this zone&#x27;s ID</span></div>
<div class="n" style="top:314.32px">29</div>
<div class="l" style="top:314.32px">        <span class="c"># ownerId: the player who owns this zone (-1 otherwise)</span></div>
<div class="n" style="top:323.01px">30</div>
<div class="l" style="top:323.01px">        <span class="c"># podsP0: player 0&#x27;s PODs on this zone</span></div>
<div class="n" style="top:331.70px">31</div>
<div class="l" style="top:331.70px">        <span class="c"># podsP1: player 1&#x27;s PODs on this zone</span></div>
<div class="n" style="top:340.39px">32</div>
<div class="l" style="top:340.39px">        <span class="c"># podsP2: player 2&#x27;s PODs on this zone (always 0 for a two player game)</span></div>
<div class="n" style="top:349.08px">33</div>
<div class="l" style="top:349.08px">        <span class="c"># podsP3: player 3&#x27;s PODs on this zone (always 0 for a two or three player game)</span></div>
<div class="n" style="top:357.77px">34</div>
<div class="l" style="top:357.77px">        zId, ownerId, podsP0, podsP1, podsP2, podsP3 <span class="o">=</span> [<span class="b">int</span>(i) <span class="k">for</span> i <span class="k">in</span> <span class="b">raw_input</span>().split()]</div>
<div class="n" style="top:366.46px">35</div>
<div class="l" style="top:366.46px"></div>
<div class="n" style="top:375.15px">36</div>
<div class="l" style="top:375.15px">    <span class="c"># Write an action using print</span></div>
<div class="n" style="top:383.84px">37</div>
<div class="l" style="top:383.84px">    <span class="c"># To debug: print &gt;&gt; sys.stderr, &quot;Debug messages...&quot;</span></div>
<div class="n" style="top:392.53px">38</div>
<div class="l" style="top:392.53px"></div>
<div class="n" style="top:401.22px">39</div>
<div class="l" style="top:401.22px">    <span class="k">print</span> <span class="s">&quot;WAIT&quot;</span> <span class="c"># first line for movement commands, second line for POD purchase (see the protocol in the statement for details)</span></div>
<div class="n" style="top:409.91px">40</div>
<div class="l" style="top:409.91px">    <span class="k">print</span> <span class="s">&quot;1 73&quot;</span></div>
<div class="abs" style="left:685.2px;top:244.80px;width:1px;height:8.69px;background:#e6e6e6"></div>
<div class="abs" style="left:685.2px;top:270.87px;width:1px;height:8.69px;background:#e6e6e6"></div>
<div class="abs" style="left:685.2px;top:305.63px;width:1px;height:60.83px;background:#e6e6e6"></div></div>
<!--/CODE-->


<!-- BL CONTENT -->
<div class="t sx" id="co" style="transform:scaleX(0.953);-webkit-text-stroke:0.25px #222428;left:25px;top:517px;font-size:13.4px;font-weight:bold;color:#222428">Console output</div>
<div class="abs" style="left:593.6px;top:527px;width:10.2px;height:2.2px;background:#2a2d33"></div>
<svg class="abs" style="left:609px;top:519px" width="11" height="11"><rect x="0.9" y="1.6" width="8.5" height="7.9" fill="none" stroke="#2a2d33" stroke-width="1.3"/><rect x="0.3" y="1" width="9.7" height="2.2" fill="#2a2d33"/></svg>
<div class="abs" style="left:25px;top:542.4px;width:147.5px;height:157.6px;background:#f0f0f0"></div>
<svg class="abs" style="left:31px;top:548px" width="29" height="29" viewBox="0 0 29 29"><path d="M14.2 1 L17.6 10.2 L27.4 10.4 L19.8 16.5 L22.5 26.4 L14.2 20.9 L5.9 26.4 L8.6 16.5 L1 10.4 L10.8 10.2 Z" fill="#ff1654"/></svg>
<div class="t" style="left:31px;top:558.5px;width:27px;text-align:center;font-size:9px;font-weight:bold;color:#fff">2</div>
<div class="abs" style="left:32px;top:590px;width:26.6px;height:27px;background:#de68e0"></div>
<div class="t" style="left:32px;top:599px;width:26.6px;text-align:center;font-size:10px;font-weight:bold;color:#fff">16</div>
<div class="abs" style="left:32px;top:631px;width:26.6px;height:27px;background:#16a0e6"></div>
<div class="t" style="left:32px;top:640px;width:26.6px;text-align:center;font-size:10px;font-weight:bold;color:#fff">6</div>
<div class="abs" style="left:32px;top:672.5px;width:26.6px;height:27.5px;background:#ff8f00"></div>
<div class="m7" style="left:62px;top:550.5px;color:#444">siman</div>
<div class="t mono sx" style="transform:scaleX(0.848);left:62px;top:567.8px;font-size:10.5px;font-weight:bold;color:#333">1st place</div>
<div class="m7" style="left:62px;top:591.5px;color:#444">Neumann</div>
<div class="t mono sx" style="transform:scaleX(0.848);left:62px;top:608.8px;font-size:10.5px;font-weight:bold;color:#333">2nd place</div>
<div class="m7" style="left:62px;top:632.5px;color:#444">martin</div>
<div class="t mono sx" style="transform:scaleX(0.848);left:62px;top:649.8px;font-size:10.5px;font-weight:bold;color:#333">3rd place</div>
<div class="m7" style="left:62px;top:673.5px;color:#444">ME</div>
<div class="abs" style="left:12px;top:700px;width:614px;height:3px;background:#fff"></div>
<div class="t mono sx" style="transform:scaleX(0.848);left:62px;top:691.3px;font-size:10.5px;font-weight:bold;color:#333;height:8.7px;overflow:hidden">4th place</div>
<div class="abs" style="left:179px;top:542.4px;width:1.6px;height:70.6px;background:#de68e0"></div>
<div class="m7" id="sos" style="left:182.2px;top:545.5px;font-size:9.05px;font-weight:bold;color:#de68e0">Standard Output Stream:</div>
<div class="t" style="left:182px;top:557px;font-size:7px;color:#444">&#x203A;</div><div class="t" style="left:187.5px;top:557.3px;font-size:8px;color:#333;letter-spacing:3.85px">312821</div>
<div class="t" style="left:182px;top:565.5px;font-size:7px;color:#444">&#x203A;</div><div class="t" style="left:187.5px;top:565.8px;font-size:8px;color:#333;letter-spacing:3.85px">21</div>
<div class="m7" style="left:182.2px;top:576.7px;font-size:9.05px;font-weight:bold;color:#de68e0">Game information:</div>
<div class="abs" style="left:182px;top:588.6px;width:30.3px;height:10.6px;background:#de68e0"></div>
<div class="t sx" style="transform:scaleX(0.9);left:183.8px;top:591px;font-size:6px;font-weight:bold;color:#fff">Neumann</div>
<div class="m7" style="left:216px;top:589.5px;color:#333">moved 11 pods.</div>
<div class="abs" style="left:182px;top:601px;width:30.3px;height:10.6px;background:#de68e0"></div>
<div class="t sx" style="transform:scaleX(0.9);left:183.8px;top:603.4px;font-size:6px;font-weight:bold;color:#fff">Neumann</div>
<div class="m7" style="left:216px;top:603.2px;color:#333">spawned 2 pods.</div>
<div class="t mono sx" id="cnt2" style="transform:scaleX(0.946);left:593px;top:545px;font-size:9.2px;font-weight:bold;color:#3a3c40">73/93</div>
<div class="abs" style="left:179px;top:620px;width:441px;height:70px;background:#ececec"></div>
<div class="m7" id="sum" style="left:181px;top:625.0px;font-size:9.05px;font-weight:bold;color:#222">Summary for round 18:</div>
<div class="m7" style="left:181px;top:636.3px;color:#555"><b style="color:#ff1654">siman</b> has captured 35, 36, 44, 50, 54 and 60!</div>
<div class="m7" style="left:181px;top:645.2px;color:#555"><b style="color:#16a0e6">martin</b> has captured 75!</div>
<div class="m7" style="left:181px;top:653.9px;color:#555"><b style="color:#ff8f00">ME</b> score: 1.</div>
<div class="m7" style="left:181px;top:662.6px;color:#555"><b style="color:#ff1654">siman</b> score: 73.</div>
<div class="m7" style="left:181px;top:671.1px;color:#555"><b style="color:#16a0e6">martin</b> score: 12.</div>
<div class="m7" style="left:181px;top:679.7px;color:#555"><b style="color:#de68e0">Neumann</b> score: 32.</div>
<div class="abs" style="left:626px;top:542px;width:10px;height:161px;background:#f7f7f7;border-left:1px solid #ededed"></div>
<div class="abs" style="left:628.5px;top:659px;width:4.5px;height:13px;border-radius:2px;background:#c8c8c8"></div>

<!-- BR CONTENT -->
<svg class="abs" style="left:1226px;top:509px" width="36" height="14" viewBox="0 0 36 14">
 <circle cx="6.5" cy="6.4" r="5.4" fill="#8a8a8a"/>
 <path d="M4.9 5.2 Q4.9 3.4 6.6 3.4 Q8.3 3.4 8.3 5 Q8.3 6.1 6.8 6.7 L6.8 7.8" fill="none" stroke="#fff" stroke-width="1.2"/>
 <circle cx="6.8" cy="9.4" r="0.75" fill="#fff"/>
 <path d="M23.6 3.4 H32.8 M23.6 7 H32.8 M23.6 10.3 H32.8" stroke="#111" stroke-width="1.8" stroke-linecap="round"/>
</svg>
<div class="card" style="left:656px;background:#ff8f00"><svg class="x" width="9" height="9" viewBox="0 0 9 9"><path d="M1 1 L7.5 7.5 M7.5 1 L1 7.5" stroke="#fff" stroke-width="1.8"/></svg><div class="nm">
Me</div></div>
<div class="card" style="left:749.5px;background:#ff1654"><svg class="x" width="9" height="9" viewBox="0 0 9 9"><path d="M1 1 L7.5 7.5 M7.5 1 L1 7.5" stroke="#fff" stroke-width="1.8"/></svg><div class="nm">2
siman</div><svg class="abs" style="left:6.5px;top:69.5px" width="9" height="9" viewBox="0 0 9 9"><rect x="0.3" y="6.3" width="1.9" height="2.4" fill="#fff"/><rect x="3.2" y="3.6" width="1.9" height="5.1" fill="#fff"/><rect x="6.1" y="0.4" width="1.9" height="8.3" fill="#fff"/></svg><div class="t sx" style="left:20px;top:70.1px;font-size:10px;color:#fff;transform:scaleX(0.93)">43.02</div></div>
<div class="card" style="left:843px;background:#16a0e6"><svg class="x" width="9" height="9" viewBox="0 0 9 9"><path d="M1 1 L7.5 7.5 M7.5 1 L1 7.5" stroke="#fff" stroke-width="1.8"/></svg><div class="nm">6
martin</div><svg class="abs" style="left:6.5px;top:69.5px" width="9" height="9" viewBox="0 0 9 9"><rect x="0.3" y="6.3" width="1.9" height="2.4" fill="#fff"/><rect x="3.2" y="3.6" width="1.9" height="5.1" fill="#fff"/><rect x="6.1" y="0.4" width="1.9" height="8.3" fill="#fff"/></svg><div class="t sx" style="left:20px;top:70.1px;font-size:10px;color:#fff;transform:scaleX(0.93)">42.19</div></div>
<div class="card" style="left:936.2px;background:#de68e0"><svg class="x" width="9" height="9" viewBox="0 0 9 9"><path d="M1 1 L7.5 7.5 M7.5 1 L1 7.5" stroke="#fff" stroke-width="1.8"/></svg><div class="nm">16
Neumann</div><svg class="abs" style="left:6.5px;top:69.5px" width="9" height="9" viewBox="0 0 9 9"><rect x="0.3" y="6.3" width="1.9" height="2.4" fill="#fff"/><rect x="3.2" y="3.6" width="1.9" height="5.1" fill="#fff"/><rect x="6.1" y="0.4" width="1.9" height="8.3" fill="#fff"/></svg><div class="t sx" style="left:20px;top:70.1px;font-size:10px;color:#fff;transform:scaleX(0.93)">40.74</div></div>

<!-- center knob -->
<div class="abs" style="left:620px;top:482.5px;width:39px;height:39px;border-radius:50%;background:#000"></div>
<div class="abs" style="left:626px;top:488.5px;width:27px;height:27px;border-radius:50%;background:#ffd200"></div>
<svg class="abs" style="left:630px;top:490px" width="20" height="24"><path d="M5.8 5.5 L14.8 12.3 L5.8 19 Z" fill="#000"/></svg>

<!-- fight button -->
<div class="abs" style="left:579px;top:709px;width:121px;height:21px;background:#ffd200"></div>
<div class="t" style="left:579px;top:715px;width:121px;text-align:center;font-size:8px;font-weight:bold;color:#333">FIGHT IN ARENA</div>
</body></html>
